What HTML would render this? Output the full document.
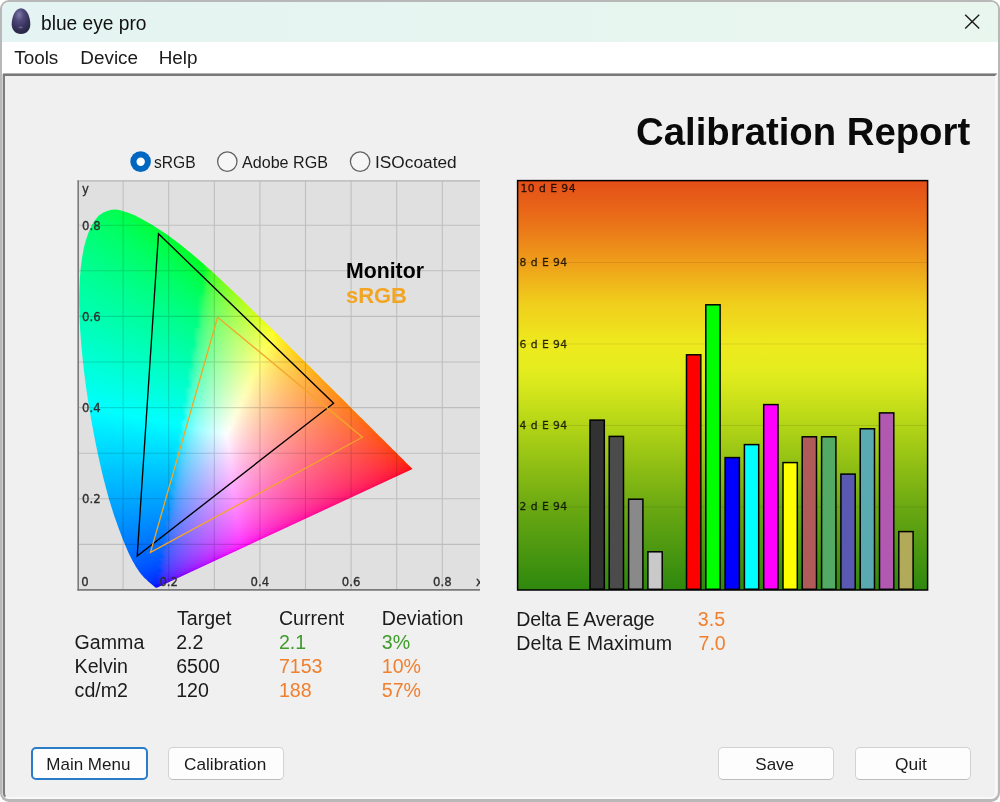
<!DOCTYPE html>
<html><head><meta charset="utf-8"><title>blue eye pro</title>
<style>
html,body{margin:0;padding:0;background:#fff;}
body{width:1000px;height:802px;overflow:hidden;position:relative;filter:blur(0.4px);font-family:"Liberation Sans",sans-serif;color:#000;}
#win{position:absolute;left:0;top:0;width:1000px;height:802px;background:#b8b8b8;border-radius:9px;overflow:hidden;}
#inner{position:absolute;left:2px;top:2px;width:996px;height:797px;background:#f0f0f0;border-radius:7px;overflow:hidden;}
#tbar{position:absolute;left:0;top:0;width:996px;height:40px;background:linear-gradient(90deg,#e4f4f2,#e9f6ee);}
#mbar{position:absolute;left:0;top:40px;width:996px;height:32px;background:#fff;}
#client{position:absolute;left:1px;top:72px;width:990px;height:721px;border-radius:0 0 6px 6px;background:#f0f0f0;border-style:solid;border-width:2px;border-color:#787878 #f9f9f9 #f9f9f9 #7c7c7c;box-shadow:0 -1px 0 #b0b0b0,-1px 0 0 #d0d0d0;}
.t{position:absolute;white-space:pre;line-height:1;transform-origin:0 50%;}
#egg{position:absolute;left:12px;top:8.4px;width:18.4px;height:25.8px;border-radius:50% 50% 50% 50%/58% 58% 42% 42%;background:radial-gradient(ellipse at 38% 28%,#8884b2 0%,#544f82 30%,#3a355f 65%,#2b2846 100%);}
.radio{position:absolute;width:19px;height:19px;border-radius:50%;border:1.3px solid #8a8a8a;background:#fafafa;box-sizing:border-box;}
.radio.on{border:none;background:#0067c0;}
.radio.on::after{content:"";position:absolute;left:5.5px;top:5.5px;width:8px;height:8px;border-radius:50%;background:#fff;}
.btn{position:absolute;height:33px;box-sizing:border-box;border:1px solid #d2d2d2;border-bottom-color:#bcbcbc;border-radius:5px;background:#fdfdfd;}
.btn.def{border:2px solid #2a7cc8;}
#chart1{position:absolute;left:78px;top:181px;width:402px;height:409px;background:#e0e0e0;overflow:hidden;}
#cie{position:absolute;left:0;top:0;width:402px;height:411px;}
#cie i{position:absolute;display:block;height:2px;}
svg{position:absolute;left:0;top:0;}
svg text{font-family:"Liberation Sans",sans-serif;}
svg .dj text{font-family:"DejaVu Sans",sans-serif;}
</style></head><body>
<div id="win"><div id="inner">
<div id="tbar"></div><div id="mbar"></div><div id="client"></div>
</div></div>
<svg width="40" height="40" viewBox="0 0 40 40" style="left:0;top:0"><defs><radialGradient id="eg" cx="0.4" cy="0.25" r="0.75"><stop offset="0" stop-color="#7d79a8"/><stop offset="0.35" stop-color="#4d4878"/><stop offset="0.7" stop-color="#38335c"/><stop offset="1" stop-color="#292642"/></radialGradient></defs><path d="M21 8.3C27 8.3 30.3 17 30.3 24.3C30.3 30 26.6 34.1 21 34.1C15.4 34.1 11.7 30 11.7 24.3C11.7 17 15 8.3 21 8.3Z" fill="url(#eg)"/><ellipse cx="20.6" cy="27.4" rx="2.2" ry="0.9" fill="#8d8cab" fill-opacity="0.55"/></svg>
<div id="chart1"><div id="cie" style="clip-path:polygon(78.9px 406.7px,77.8px 406.8px,76.9px 406.1px,75.9px 405.3px,75.1px 404.6px,74.1px 403.7px,73.0px 402.7px,72.0px 401.9px,70.9px 400.9px,69.7px 399.9px,68.4px 398.6px,67.6px 397.9px,66.8px 397.2px,66.0px 396.4px,65.2px 395.5px,64.3px 394.5px,63.4px 393.4px,62.4px 392.2px,61.3px 390.8px,60.1px 389.1px,58.9px 387.3px,57.5px 385.1px,56.1px 382.6px,54.6px 379.9px,53.0px 376.8px,51.3px 373.4px,49.5px 369.4px,47.6px 365.0px,45.5px 360.1px,43.4px 354.6px,41.1px 348.5px,38.7px 341.7px,36.1px 334.4px,33.5px 326.3px,30.8px 317.5px,28.2px 307.8px,25.5px 297.4px,22.8px 286.3px,20.2px 274.5px,17.6px 261.9px,15.0px 248.5px,12.5px 234.7px,10.2px 220.8px,8.1px 206.6px,6.2px 192.1px,4.6px 177.6px,3.2px 163.5px,2.2px 149.7px,1.5px 136.1px,1.2px 122.9px,1.3px 110.4px,1.8px 98.5px,2.7px 87.1px,4.1px 76.5px,5.8px 66.9px,8.1px 58.4px,10.8px 50.7px,13.9px 44.1px,17.2px 38.7px,20.9px 34.6px,24.9px 31.8px,29.1px 29.9px,33.4px 28.8px,37.8px 28.6px,42.3px 29.3px,47.0px 30.7px,51.6px 32.3px,56.2px 34.1px,60.9px 36.4px,65.5px 38.9px,70.0px 41.5px,74.5px 44.1px,78.9px 46.9px,83.2px 49.7px,87.5px 52.6px,91.7px 55.6px,95.9px 58.7px,100.0px 61.8px,104.2px 65.0px,108.3px 68.4px,112.5px 71.7px,116.6px 75.2px,120.7px 78.7px,124.8px 82.3px,128.9px 85.9px,133.0px 89.6px,137.0px 93.3px,141.1px 97.1px,145.2px 100.9px,149.2px 104.7px,153.3px 108.5px,157.4px 112.4px,161.5px 116.3px,165.6px 120.3px,169.6px 124.2px,173.7px 128.2px,177.8px 132.2px,181.8px 136.2px,185.9px 140.1px,189.9px 144.1px,194.0px 148.1px,198.0px 152.1px,202.0px 156.1px,206.0px 160.0px,210.0px 164.0px,213.9px 167.9px,217.8px 171.8px,221.7px 175.7px,225.6px 179.5px,229.4px 183.3px,233.2px 187.1px,236.9px 190.8px,240.7px 194.5px,244.3px 198.2px,247.9px 201.8px,251.5px 205.3px,255.0px 208.8px,258.4px 212.2px,261.8px 215.6px,265.1px 218.8px,268.3px 222.1px,271.4px 225.2px,274.4px 228.2px,277.3px 231.1px,280.1px 233.9px,282.8px 236.5px,285.4px 239.1px,288.0px 241.7px,290.4px 244.1px,292.8px 246.5px,295.1px 248.8px,297.2px 250.9px,299.3px 252.9px,301.2px 254.9px,303.1px 256.7px,304.9px 258.5px,306.5px 260.1px,308.1px 261.7px,309.6px 263.2px,311.0px 264.6px,312.4px 266.0px,313.6px 267.2px,314.8px 268.4px,316.0px 269.5px,317.0px 270.6px,318.0px 271.6px,319.0px 272.5px,319.9px 273.4px,320.7px 274.3px,321.5px 275.1px,322.3px 275.8px,323.0px 276.6px,323.8px 277.3px,325.1px 278.6px,326.3px 279.8px,327.4px 280.9px,328.3px 281.9px,329.2px 282.7px,330.0px 283.5px,331.5px 285.0px,332.6px 286.1px,333.7px 287.2px,334.5px 288.0px)"><i style="left:28px;top:27px;width:17px;background:linear-gradient(90deg,#00ff56 0px,#00ff51 5px,#00ff4d 10px,#00ff48 15px,#00ff46 17px)"></i><i style="left:23px;top:29px;width:29px;background:linear-gradient(90deg,#00ff5b 0px,#00ff57 5px,#00ff53 10px,#00ff4f 15px,#00ff4a 20px,#00ff45 25px,#00ff40 29px)"></i><i style="left:20px;top:31px;width:37px;background:linear-gradient(90deg,#00ff5f 0px,#00ff5c 5px,#00ff58 10px,#00ff54 15px,#00ff4f 20px,#00ff4a 25px,#00ff45 30px,#00ff3f 35px,#00ff3d 37px)"></i><i style="left:18px;top:33px;width:44px;background:linear-gradient(90deg,#00ff62 0px,#00ff5f 5px,#00ff5b 10px,#00ff57 15px,#00ff53 20px,#00ff4f 25px,#00ff4a 30px,#00ff44 35px,#00ff3e 40px,#00ff39 44px)"></i><i style="left:16px;top:35px;width:49px;background:linear-gradient(90deg,#00ff65 0px,#00ff62 5px,#00ff5e 10px,#00ff5b 15px,#00ff57 20px,#00ff53 25px,#00ff4e 30px,#00ff49 35px,#00ff43 40px,#00ff3d 45px,#00ff37 49px)"></i><i style="left:14px;top:37px;width:55px;background:linear-gradient(90deg,#00ff68 0px,#00ff65 5px,#00ff62 10px,#00ff5e 15px,#00ff5a 20px,#00ff56 25px,#00ff52 30px,#00ff4d 35px,#00ff48 40px,#00ff42 45px,#00ff3c 50px,#00ff35 55px)"></i><i style="left:13px;top:39px;width:60px;background:linear-gradient(90deg,#00ff6a 0px,#00ff67 5px,#00ff64 10px,#00ff61 15px,#00ff5d 20px,#00ff59 25px,#00ff55 30px,#00ff50 35px,#00ff4c 40px,#00ff46 45px,#00ff40 50px,#00ff39 55px,#00ff31 60px)"></i><i style="left:12px;top:41px;width:64px;background:linear-gradient(90deg,#00ff6d 0px,#00ff6a 5px,#00ff66 10px,#00ff63 15px,#00ff5f 20px,#00ff5c 25px,#00ff58 30px,#00ff53 35px,#00ff4f 40px,#00ff4a 45px,#00ff44 50px,#00ff3e 55px,#00ff37 60px,#00ff30 64px)"></i><i style="left:11px;top:43px;width:68px;background:linear-gradient(90deg,#00ff6f 0px,#00ff6c 5px,#00ff69 10px,#00ff65 15px,#00ff62 20px,#00ff5e 25px,#00ff5a 30px,#00ff56 35px,#00ff52 40px,#00ff4d 45px,#00ff48 50px,#00ff42 55px,#00ff3b 60px,#00ff33 65px,#00ff2e 68px)"></i><i style="left:10px;top:45px;width:72px;background:linear-gradient(90deg,#00ff71 0px,#00ff6e 5px,#00ff6b 10px,#00ff68 15px,#00ff64 20px,#00ff61 25px,#00ff5d 30px,#00ff59 35px,#00ff55 40px,#00ff50 45px,#00ff4b 50px,#00ff46 55px,#00ff40 60px,#00ff39 65px,#00ff30 70px,#00ff2c 72px)"></i><i style="left:9px;top:47px;width:76px;background:linear-gradient(90deg,#00ff73 0px,#00ff70 5px,#00ff6d 10px,#00ff6a 15px,#00ff67 20px,#00ff63 25px,#00ff60 30px,#00ff5c 35px,#00ff58 40px,#00ff53 45px,#00ff4f 50px,#00ff49 55px,#00ff44 60px,#00ff3d 65px,#00ff36 70px,#00ff2c 75px,#00ff2a 76px)"></i><i style="left:8px;top:49px;width:80px;background:linear-gradient(90deg,#00ff75 0px,#00ff72 5px,#00ff6f 10px,#00ff6c 15px,#00ff69 20px,#00ff66 25px,#00ff62 30px,#00ff5f 35px,#00ff5b 40px,#00ff56 45px,#00ff52 50px,#00ff4d 55px,#00ff47 60px,#00ff41 65px,#00ff3b 70px,#00ff32 75px,#00ff28 80px)"></i><i style="left:7px;top:51px;width:84px;background:linear-gradient(90deg,#00ff77 0px,#00ff74 5px,#00ff72 10px,#00ff6f 15px,#00ff6b 20px,#00ff68 25px,#00ff65 30px,#00ff61 35px,#00ff5d 40px,#00ff59 45px,#00ff55 50px,#00ff50 55px,#00ff4b 60px,#00ff45 65px,#00ff3f 70px,#00ff38 75px,#00ff2f 80px,#00ff26 84px)"></i><i style="left:7px;top:53px;width:87px;background:linear-gradient(90deg,#00ff79 0px,#00ff76 5px,#00ff73 10px,#00ff70 15px,#00ff6d 20px,#00ff6a 25px,#00ff67 30px,#00ff63 35px,#00ff5f 40px,#00ff5b 45px,#00ff57 50px,#00ff52 55px,#00ff4e 60px,#00ff48 65px,#00ff42 70px,#00ff3b 75px,#00ff33 80px,#00ff28 85px,#00ff23 87px)"></i><i style="left:6px;top:55px;width:91px;background:linear-gradient(90deg,#00ff7b 0px,#00ff78 5px,#00ff75 10px,#00ff72 15px,#00ff6f 20px,#00ff6c 25px,#00ff69 30px,#00ff66 35px,#00ff62 40px,#00ff5e 45px,#00ff5a 50px,#00ff56 55px,#00ff51 60px,#00ff4c 65px,#00ff46 70px,#00ff40 75px,#00ff38 80px,#00ff2f 85px,#00ff23 90px,#00ff20 91px)"></i><i style="left:5px;top:57px;width:95px;background:linear-gradient(90deg,#00ff7d 0px,#00ff7a 5px,#00ff77 10px,#00ff74 15px,#00ff72 20px,#00ff6f 25px,#00ff6b 30px,#00ff68 35px,#00ff65 40px,#00ff61 45px,#00ff5d 50px,#00ff59 55px,#00ff54 60px,#00ff4f 65px,#00ff4a 70px,#00ff44 75px,#00ff3d 80px,#00ff35 85px,#00ff2b 90px,#00ff1d 95px)"></i><i style="left:5px;top:59px;width:97px;background:linear-gradient(90deg,#00ff7e 0px,#00ff7b 5px,#00ff79 10px,#00ff76 15px,#00ff73 20px,#00ff70 25px,#00ff6d 30px,#00ff6a 35px,#00ff66 40px,#00ff63 45px,#00ff5f 50px,#00ff5b 55px,#00ff56 60px,#00ff51 65px,#00ff4c 70px,#00ff47 75px,#00ff40 80px,#00ff39 85px,#00ff30 90px,#00ff24 95px,#00ff1d 97px)"></i><i style="left:4px;top:61px;width:101px;background:linear-gradient(90deg,#00ff80 0px,#00ff7d 5px,#00ff7b 10px,#00ff78 15px,#00ff75 20px,#00ff72 25px,#00ff6f 30px,#00ff6c 35px,#00ff69 40px,#00ff65 45px,#00ff62 50px,#00ff5e 55px,#00ff59 60px,#00ff55 65px,#00ff50 70px,#00ff4a 75px,#00ff44 80px,#00ff3d 85px,#00ff35 90px,#00ff2b 95px,#00ff1d 100px,#00ff19 101px)"></i><i style="left:4px;top:63px;width:103px;background:linear-gradient(90deg,#00ff81 0px,#00ff7f 5px,#00ff7c 10px,#00ff7a 15px,#00ff77 20px,#00ff74 25px,#00ff71 30px,#00ff6e 35px,#00ff6b 40px,#00ff67 45px,#00ff63 50px,#00ff60 55px,#00ff5b 60px,#00ff57 65px,#00ff52 70px,#00ff4d 75px,#00ff47 80px,#00ff41 85px,#00ff39 90px,#00ff30 95px,#00ff24 100px,#00ff19 103px)"></i><i style="left:3px;top:65px;width:107px;background:linear-gradient(90deg,#00ff83 0px,#00ff81 5px,#00ff7e 10px,#00ff7c 15px,#00ff79 20px,#00ff76 25px,#00ff73 30px,#00ff70 35px,#00ff6d 40px,#00ff6a 45px,#00ff66 50px,#00ff62 55px,#00ff5e 60px,#00ff5a 65px,#00ff55 70px,#00ff50 75px,#00ff4b 80px,#00ff45 85px,#00ff3e 90px,#00ff36 95px,#00ff2c 100px,#00ff1d 105px,#00ff14 107px)"></i><i style="left:3px;top:67px;width:109px;background:linear-gradient(90deg,#00ff85 0px,#00ff82 5px,#00ff80 10px,#00ff7d 15px,#00ff7b 20px,#00ff78 25px,#00ff75 30px,#00ff72 35px,#00ff6f 40px,#00ff6b 45px,#00ff68 50px,#00ff64 55px,#00ff60 60px,#00ff5c 65px,#00ff58 70px,#00ff53 75px,#00ff4e 80px,#00ff48 85px,#00ff41 90px,#00ff3a 95px,#00ff30 100px,#00ff24 105px,#00ff14 109px)"></i><i style="left:2px;top:69px;width:113px;background:linear-gradient(90deg,#00ff87 0px,#00ff84 5px,#00ff82 10px,#00ff7f 15px,#00ff7d 20px,#00ff7a 25px,#00ff77 30px,#00ff74 35px,#00ff71 40px,#00ff6e 45px,#00ff6a 50px,#00ff67 55px,#00ff63 60px,#00ff5f 65px,#00ff5b 70px,#00ff56 75px,#00ff51 80px,#00ff4c 85px,#00ff45 90px,#00ff3e 95px,#00ff36 100px,#00ff2c 105px,#00ff1e 110px,#00ff0d 113px)"></i><i style="left:2px;top:71px;width:115px;background:linear-gradient(90deg,#00ff88 0px,#00ff86 5px,#00ff83 10px,#00ff81 15px,#00ff7e 20px,#00ff7b 25px,#00ff79 30px,#00ff76 35px,#00ff73 40px,#00ff70 45px,#00ff6c 50px,#00ff69 55px,#00ff65 60px,#00ff61 65px,#00ff5d 70px,#00ff58 75px,#00ff53 80px,#00ff4e 85px,#00ff48 90px,#00ff42 95px,#00ff3a 100px,#00ff31 105px,#00ff25 110px,#00ff0d 115px)"></i><i style="left:2px;top:73px;width:117px;background:linear-gradient(90deg,#00ff89 0px,#00ff87 5px,#00ff85 10px,#00ff82 15px,#00ff80 20px,#00ff7d 25px,#00ff7a 30px,#00ff77 35px,#00ff74 40px,#00ff71 45px,#00ff6e 50px,#00ff6b 55px,#00ff67 60px,#00ff63 65px,#00ff5f 70px,#00ff5b 75px,#00ff56 80px,#00ff51 85px,#00ff4b 90px,#00ff45 95px,#00ff3e 100px,#00ff35 105px,#00ff2a 110px,#00ff1a 115px,#00ff0d 117px)"></i><i style="left:1px;top:75px;width:121px;background:linear-gradient(90deg,#00ff8b 0px,#00ff89 5px,#00ff87 10px,#00ff84 15px,#00ff82 20px,#00ff7f 25px,#00ff7c 30px,#00ff7a 35px,#00ff77 40px,#00ff74 45px,#00ff70 50px,#00ff6d 55px,#00ff6a 60px,#00ff66 65px,#00ff62 70px,#00ff5e 75px,#00ff59 80px,#00ff54 85px,#00ff4f 90px,#00ff49 95px,#00ff42 100px,#00ff3b 105px,#00ff31 110px,#00ff25 115px,#00ff0d 120px,#00ff00 121px)"></i><i style="left:1px;top:77px;width:123px;background:linear-gradient(90deg,#00ff8d 0px,#00ff8a 5px,#00ff88 10px,#00ff86 15px,#00ff83 20px,#00ff81 25px,#00ff7e 30px,#00ff7b 35px,#00ff78 40px,#00ff75 45px,#00ff72 50px,#00ff6f 55px,#00ff6b 60px,#00ff68 65px,#00ff64 70px,#00ff60 75px,#00ff5b 80px,#00ff57 85px,#00ff51 90px,#00ff4c 95px,#00ff45 100px,#00ff3e 105px,#00ff35 110px,#00ff2b 115px,#00ff1a 120px,#00ff00 123px)"></i><i style="left:1px;top:79px;width:125px;background:linear-gradient(90deg,#00ff8e 0px,#00ff8c 5px,#00ff8a 10px,#00ff87 15px,#00ff85 20px,#00ff82 25px,#00ff80 30px,#00ff7d 35px,#00ff7a 40px,#00ff77 45px,#00ff74 50px,#00ff71 55px,#00ff6d 60px,#00ff6a 65px,#00ff66 70px,#00ff62 75px,#00ff5d 80px,#00ff59 85px,#00ff54 90px,#00ff4e 95px,#00ff48 100px,#00ff41 105px,#00ff39 110px,#00ff30 115px,#00ff22 120px,#00ff00 125px)"></i><i style="left:1px;top:81px;width:128px;background:linear-gradient(90deg,#00ff8f 0px,#00ff8d 5px,#00ff8b 10px,#00ff89 15px,#00ff86 20px,#00ff84 25px,#00ff81 30px,#00ff7e 35px,#00ff7c 40px,#00ff79 45px,#00ff76 50px,#00ff72 55px,#00ff6f 60px,#00ff6c 65px,#00ff68 70px,#00ff64 75px,#00ff60 80px,#00ff5b 85px,#00ff56 90px,#00ff51 95px,#00ff4b 100px,#00ff45 105px,#00ff3d 110px,#00ff34 115px,#00ff28 120px,#00ff15 125px,#11ff00 128px)"></i><i style="left:0px;top:83px;width:131px;background:linear-gradient(90deg,#00ff91 0px,#00ff8f 5px,#00ff8d 10px,#00ff8b 15px,#00ff88 20px,#00ff86 25px,#00ff83 30px,#00ff81 35px,#00ff7e 40px,#00ff7b 45px,#00ff78 50px,#00ff75 55px,#00ff72 60px,#00ff6e 65px,#00ff6b 70px,#00ff67 75px,#00ff63 80px,#00ff5e 85px,#00ff5a 90px,#00ff55 95px,#00ff4f 100px,#00ff49 105px,#00ff42 110px,#00ff3a 115px,#00ff30 120px,#00ff22 125px,#25ff00 130px,#2eff00 131px)"></i><i style="left:0px;top:85px;width:133px;background:linear-gradient(90deg,#00ff93 0px,#00ff91 5px,#00ff8e 10px,#00ff8c 15px,#00ff8a 20px,#00ff87 25px,#00ff85 30px,#00ff82 35px,#00ff7f 40px,#00ff7d 45px,#00ff7a 50px,#00ff77 55px,#00ff73 60px,#00ff70 65px,#00ff6c 70px,#00ff69 75px,#00ff65 80px,#00ff60 85px,#00ff5c 90px,#00ff57 95px,#00ff52 100px,#00ff4c 105px,#00ff45 110px,#00ff3e 115px,#00ff34 120px,#00ff29 125px,#28ff15 130px,#3dff00 133px)"></i><i style="left:0px;top:87px;width:135px;background:linear-gradient(90deg,#00ff94 0px,#00ff92 5px,#00ff90 10px,#00ff8e 15px,#00ff8b 20px,#00ff89 25px,#00ff86 30px,#00ff84 35px,#00ff81 40px,#00ff7e 45px,#00ff7b 50px,#00ff78 55px,#00ff75 60px,#00ff72 65px,#00ff6e 70px,#00ff6b 75px,#00ff67 80px,#00ff63 85px,#00ff5e 90px,#00ff59 95px,#00ff54 100px,#00ff4f 105px,#00ff48 110px,#00ff41 115px,#00ff39 120px,#00ff2e 125px,#2bff1f 130px,#49ff00 135px)"></i><i style="left:0px;top:89px;width:138px;background:linear-gradient(90deg,#00ff95 0px,#00ff93 5px,#00ff91 10px,#00ff8f 15px,#00ff8d 20px,#00ff8a 25px,#00ff88 30px,#00ff85 35px,#00ff83 40px,#00ff80 45px,#00ff7d 50px,#00ff7a 55px,#00ff77 60px,#00ff74 65px,#00ff70 70px,#00ff6d 75px,#00ff69 80px,#00ff65 85px,#00ff60 90px,#00ff5c 95px,#00ff57 100px,#00ff51 105px,#00ff4b 110px,#00ff44 115px,#00ff3c 120px,#00ff33 125px,#2dff26 130px,#4bff0e 135px,#57ff00 138px)"></i><i style="left:0px;top:91px;width:140px;background:linear-gradient(90deg,#00ff97 0px,#00ff95 5px,#00ff93 10px,#00ff90 15px,#00ff8e 20px,#00ff8c 25px,#00ff89 30px,#00ff87 35px,#00ff84 40px,#00ff82 45px,#00ff7f 50px,#00ff7c 55px,#00ff79 60px,#00ff75 65px,#00ff72 70px,#00ff6f 75px,#00ff6b 80px,#00ff67 85px,#00ff63 90px,#00ff5e 95px,#00ff59 100px,#00ff54 105px,#00ff4e 110px,#00ff48 115px,#00ff40 120px,#00ff37 125px,#30ff2c 130px,#4cff1b 135px,#60ff00 140px)"></i><i style="left:0px;top:93px;width:142px;background:linear-gradient(90deg,#00ff98 0px,#00ff96 5px,#00ff94 10px,#00ff92 15px,#00ff90 20px,#00ff8d 25px,#00ff8b 30px,#00ff88 35px,#00ff86 40px,#00ff83 45px,#00ff80 50px,#00ff7d 55px,#00ff7a 60px,#00ff77 65px,#00ff74 70px,#00ff70 75px,#00ff6d 80px,#00ff69 85px,#00ff65 90px,#00ff60 95px,#00ff5c 100px,#00ff56 105px,#00ff51 110px,#00ff4b 115px,#00ff44 120px,#00ff3b 125px,#32ff31 130px,#4eff23 135px,#61ff00 140px,#68ff00 142px)"></i><i style="left:-1px;top:95px;width:145px;background:linear-gradient(90deg,#00ff9a 0px,#00ff98 5px,#00ff96 10px,#00ff94 15px,#00ff92 20px,#00ff8f 25px,#00ff8d 30px,#00ff8a 35px,#00ff88 40px,#00ff85 45px,#00ff83 50px,#00ff80 55px,#00ff7d 60px,#00ff7a 65px,#00ff76 70px,#00ff73 75px,#00ff70 80px,#00ff6c 85px,#00ff68 90px,#00ff63 95px,#00ff5f 100px,#00ff5a 105px,#00ff55 110px,#00ff4f 115px,#00ff48 120px,#00ff41 125px,#2dff38 130px,#4bff2d 135px,#5fff1c 140px,#70ff00 145px)"></i><i style="left:-1px;top:97px;width:147px;background:linear-gradient(90deg,#00ff9b 0px,#00ff99 5px,#00ff97 10px,#00ff95 15px,#00ff93 20px,#00ff91 25px,#00ff8e 30px,#00ff8c 35px,#00ff8a 40px,#00ff87 45px,#00ff84 50px,#00ff81 55px,#00ff7f 60px,#00ff7b 65px,#00ff78 70px,#00ff75 75px,#00ff71 80px,#00ff6e 85px,#00ff6a 90px,#00ff66 95px,#00ff61 100px,#00ff5c 105px,#00ff57 110px,#00ff52 115px,#00ff4b 120px,#00ff44 125px,#30ff3c 130px,#4dff32 135px,#61ff24 140px,#71ff00 145px,#77ff00 147px)"></i><i style="left:-1px;top:99px;width:149px;background:linear-gradient(90deg,#00ff9d 0px,#00ff9b 5px,#00ff99 10px,#00ff97 15px,#00ff95 20px,#00ff92 25px,#00ff90 30px,#00ff8e 35px,#00ff8b 40px,#00ff89 45px,#00ff86 50px,#00ff83 55px,#00ff80 60px,#00ff7d 65px,#00ff7a 70px,#00ff77 75px,#00ff73 80px,#00ff70 85px,#00ff6c 90px,#00ff68 95px,#00ff63 100px,#00ff5f 105px,#00ff5a 110px,#00ff54 115px,#00ff4e 120px,#00ff47 125px,#32ff40 130px,#4eff36 135px,#62ff2a 140px,#72ff17 145px,#7dff00 149px)"></i><i style="left:-1px;top:101px;width:151px;background:linear-gradient(90deg,#00ff9e 0px,#00ff9c 5px,#00ff9a 10px,#00ff98 15px,#00ff96 20px,#00ff94 25px,#00ff92 30px,#00ff8f 35px,#00ff8d 40px,#00ff8a 45px,#00ff88 50px,#00ff85 55px,#00ff82 60px,#00ff7f 65px,#00ff7c 70px,#00ff79 75px,#00ff75 80px,#00ff72 85px,#00ff6e 90px,#00ff6a 95px,#00ff66 100px,#00ff61 105px,#00ff5c 110px,#00ff57 115px,#00ff51 120px,#00ff4b 125px,#35ff43 130px,#50ff3b 135px,#63ff30 140px,#73ff20 145px,#81ff00 150px,#84ff00 151px)"></i><i style="left:-1px;top:103px;width:154px;background:linear-gradient(90deg,#00ffa0 0px,#00ff9e 5px,#00ff9c 10px,#00ff9a 15px,#00ff97 20px,#00ff95 25px,#00ff93 30px,#00ff91 35px,#00ff8e 40px,#00ff8c 45px,#00ff89 50px,#00ff86 55px,#00ff84 60px,#00ff81 65px,#00ff7e 70px,#00ff7b 75px,#00ff77 80px,#00ff74 85px,#00ff70 90px,#00ff6c 95px,#00ff68 100px,#00ff63 105px,#00ff5f 110px,#00ff5a 115px,#00ff54 120px,#00ff4e 125px,#37ff47 130px,#52ff3f 135px,#65ff35 140px,#75ff28 145px,#82ff0f 150px,#8cff00 154px)"></i><i style="left:-1px;top:105px;width:156px;background:linear-gradient(90deg,#00ffa1 0px,#00ff9f 5px,#00ff9d 10px,#00ff9b 15px,#00ff99 20px,#00ff97 25px,#00ff95 30px,#00ff92 35px,#00ff90 40px,#00ff8d 45px,#00ff8b 50px,#00ff88 55px,#00ff85 60px,#00ff83 65px,#00ff80 70px,#00ff7c 75px,#00ff79 80px,#00ff76 85px,#00ff72 90px,#00ff6e 95px,#00ff6a 100px,#00ff66 105px,#00ff61 110px,#00ff5c 115px,#00ff57 120px,#00ff51 125px,#39ff4a 130px,#53ff42 135px,#66ff39 140px,#76ff2e 145px,#84ff1c 150px,#90ff00 155px,#92ff00 156px)"></i><i style="left:-1px;top:107px;width:158px;background:linear-gradient(90deg,#00ffa2 0px,#00ffa0 5px,#00ff9f 10px,#00ff9d 15px,#00ff9a 20px,#00ff98 25px,#00ff96 30px,#00ff94 35px,#00ff91 40px,#00ff8f 45px,#00ff8c 50px,#00ff8a 55px,#00ff87 60px,#00ff84 65px,#00ff81 70px,#00ff7e 75px,#00ff7b 80px,#00ff78 85px,#00ff74 90px,#00ff70 95px,#00ff6c 100px,#00ff68 105px,#00ff64 110px,#00ff5f 115px,#00ff59 120px,#00ff54 125px,#3bff4d 130px,#55ff46 135px,#67ff3d 140px,#77ff33 145px,#85ff25 150px,#91ff00 155px,#98ff00 158px)"></i><i style="left:-1px;top:109px;width:160px;background:linear-gradient(90deg,#00ffa4 0px,#00ffa2 5px,#00ffa0 10px,#00ff9e 15px,#00ff9c 20px,#00ff9a 25px,#00ff98 30px,#00ff95 35px,#00ff93 40px,#00ff91 45px,#00ff8e 50px,#00ff8c 55px,#00ff89 60px,#00ff86 65px,#00ff83 70px,#00ff80 75px,#00ff7d 80px,#00ff7a 85px,#00ff76 90px,#00ff72 95px,#00ff6e 100px,#00ff6a 105px,#00ff66 110px,#00ff61 115px,#00ff5c 120px,#00ff56 125px,#3dff50 130px,#56ff49 135px,#69ff41 140px,#78ff38 145px,#86ff2b 150px,#92ff17 155px,#9eff00 160px)"></i><i style="left:-1px;top:111px;width:162px;background:linear-gradient(90deg,#00ffa5 0px,#00ffa3 5px,#00ffa1 10px,#00ff9f 15px,#00ff9d 20px,#00ff9b 25px,#00ff99 30px,#00ff97 35px,#00ff95 40px,#00ff92 45px,#00ff90 50px,#00ff8d 55px,#00ff8b 60px,#00ff88 65px,#00ff85 70px,#00ff82 75px,#00ff7f 80px,#00ff7b 85px,#00ff78 90px,#00ff74 95px,#00ff71 100px,#00ff6c 105px,#00ff68 110px,#00ff64 115px,#00ff5f 120px,#00ff59 125px,#3fff53 130px,#58ff4d 135px,#6aff45 140px,#7aff3c 145px,#87ff31 150px,#93ff21 155px,#9fff00 160px,#a3ff00 162px)"></i><i style="left:-1px;top:113px;width:164px;background:linear-gradient(90deg,#00ffa7 0px,#00ffa5 5px,#00ffa3 10px,#00ffa1 15px,#00ff9f 20px,#00ff9d 25px,#00ff9b 30px,#00ff98 35px,#00ff96 40px,#00ff94 45px,#00ff91 50px,#00ff8f 55px,#00ff8c 60px,#00ff89 65px,#00ff87 70px,#00ff84 75px,#00ff81 80px,#00ff7d 85px,#00ff7a 90px,#00ff76 95px,#00ff73 100px,#00ff6f 105px,#00ff6a 110px,#00ff66 115px,#00ff61 120px,#0dff5c 125px,#41ff56 130px,#59ff50 135px,#6bff49 140px,#7bff40 145px,#88ff36 150px,#95ff29 155px,#a0ff10 160px,#a9ff00 164px)"></i><i style="left:-1px;top:115px;width:166px;background:linear-gradient(90deg,#00ffa8 0px,#00ffa6 5px,#00ffa4 10px,#00ffa2 15px,#00ffa0 20px,#00ff9e 25px,#00ff9c 30px,#00ff9a 35px,#00ff98 40px,#00ff95 45px,#00ff93 50px,#00ff90 55px,#00ff8e 60px,#00ff8b 65px,#00ff88 70px,#00ff85 75px,#00ff82 80px,#00ff7f 85px,#00ff7c 90px,#00ff78 95px,#00ff75 100px,#00ff71 105px,#00ff6d 110px,#00ff68 115px,#00ff64 120px,#16ff5e 125px,#43ff59 130px,#5bff53 135px,#6dff4c 140px,#7cff44 145px,#8aff3b 150px,#96ff2f 155px,#a1ff1d 160px,#acff00 165px,#aeff00 166px)"></i><i style="left:-1px;top:117px;width:168px;background:linear-gradient(90deg,#00ffa9 0px,#00ffa8 5px,#00ffa6 10px,#00ffa4 15px,#00ffa2 20px,#00ffa0 25px,#00ff9e 30px,#00ff9c 35px,#00ff99 40px,#00ff97 45px,#00ff95 50px,#00ff92 55px,#00ff90 60px,#00ff8d 65px,#00ff8a 70px,#00ff87 75px,#00ff84 80px,#00ff81 85px,#00ff7e 90px,#00ff7a 95px,#00ff77 100px,#00ff73 105px,#00ff6f 110px,#00ff6b 115px,#00ff66 120px,#1bff61 125px,#45ff5c 130px,#5cff56 135px,#6eff4f 140px,#7dff48 145px,#8bff3f 150px,#97ff34 155px,#a2ff26 160px,#adff00 165px,#b3ff00 168px)"></i><i style="left:-1px;top:119px;width:170px;background:linear-gradient(90deg,#00ffab 0px,#00ffa9 5px,#00ffa7 10px,#00ffa5 15px,#00ffa3 20px,#00ffa1 25px,#00ff9f 30px,#00ff9d 35px,#00ff9b 40px,#00ff99 45px,#00ff96 50px,#00ff94 55px,#00ff91 60px,#00ff8f 65px,#00ff8c 70px,#00ff89 75px,#00ff86 80px,#00ff83 85px,#00ff80 90px,#00ff7c 95px,#00ff79 100px,#00ff75 105px,#00ff71 110px,#00ff6d 115px,#00ff68 120px,#20ff64 125px,#47ff5e 130px,#5eff59 135px,#6fff52 140px,#7fff4b 145px,#8cff43 150px,#98ff39 155px,#a4ff2d 160px,#aeff18 165px,#b9ff00 170px)"></i><i style="left:-1px;top:121px;width:172px;background:linear-gradient(90deg,#00ffac 0px,#00ffaa 5px,#00ffa9 10px,#00ffa7 15px,#00ffa5 20px,#00ffa3 25px,#00ffa1 30px,#00ff9f 35px,#00ff9c 40px,#00ff9a 45px,#00ff98 50px,#00ff95 55px,#00ff93 60px,#00ff90 65px,#00ff8e 70px,#00ff8b 75px,#00ff88 80px,#00ff85 85px,#00ff82 90px,#00ff7e 95px,#00ff7b 100px,#00ff77 105px,#00ff73 110px,#00ff6f 115px,#00ff6b 120px,#24ff66 125px,#49ff61 130px,#5fff5b 135px,#71ff55 140px,#80ff4f 145px,#8dff47 150px,#9aff3e 155px,#a5ff33 160px,#b0ff23 165px,#baff00 170px,#beff00 172px)"></i><i style="left:-1px;top:123px;width:174px;background:linear-gradient(90deg,#00ffae 0px,#00ffac 5px,#00ffaa 10px,#00ffa8 15px,#00ffa6 20px,#00ffa4 25px,#00ffa2 30px,#00ffa0 35px,#00ff9e 40px,#00ff9c 45px,#00ff9a 50px,#00ff97 55px,#00ff95 60px,#00ff92 65px,#00ff8f 70px,#00ff8d 75px,#00ff8a 80px,#00ff87 85px,#00ff84 90px,#00ff80 95px,#00ff7d 100px,#00ff79 105px,#00ff75 110px,#00ff71 115px,#00ff6d 120px,#28ff68 125px,#4bff64 130px,#61ff5e 135px,#72ff58 140px,#81ff52 145px,#8fff4a 150px,#9bff42 155px,#a6ff38 160px,#b1ff2a 165px,#bbff11 170px,#c3ff00 174px)"></i><i style="left:-1px;top:125px;width:176px;background:linear-gradient(90deg,#00ffaf 0px,#00ffad 5px,#00ffac 10px,#00ffaa 15px,#00ffa8 20px,#00ffa6 25px,#00ffa4 30px,#00ffa2 35px,#00ffa0 40px,#00ff9d 45px,#00ff9b 50px,#00ff99 55px,#00ff96 60px,#00ff94 65px,#00ff91 70px,#00ff8e 75px,#00ff8c 80px,#00ff89 85px,#00ff86 90px,#00ff82 95px,#00ff7f 100px,#00ff7b 105px,#00ff78 110px,#00ff74 115px,#00ff6f 120px,#2bff6b 125px,#4cff66 130px,#62ff61 135px,#74ff5b 140px,#82ff55 145px,#90ff4e 150px,#9cff46 155px,#a7ff3c 160px,#b2ff30 165px,#bcff1e 170px,#c6ff00 175px,#c8ff00 176px)"></i><i style="left:-1px;top:127px;width:179px;background:linear-gradient(90deg,#00ffb1 0px,#00ffaf 5px,#00ffad 10px,#00ffab 15px,#00ffa9 20px,#00ffa7 25px,#00ffa5 30px,#00ffa3 35px,#00ffa1 40px,#00ff9f 45px,#00ff9d 50px,#00ff9a 55px,#00ff98 60px,#00ff96 65px,#00ff93 70px,#00ff90 75px,#00ff8d 80px,#00ff8b 85px,#00ff87 90px,#00ff84 95px,#00ff81 100px,#00ff7d 105px,#00ff7a 110px,#00ff76 115px,#00ff72 120px,#2eff6d 125px,#4eff69 130px,#64ff64 135px,#75ff5e 140px,#84ff58 145px,#91ff51 150px,#9dff4a 155px,#a9ff41 160px,#b3ff36 165px,#beff27 170px,#c7ff00 175px,#cfff00 179px)"></i><i style="left:-1px;top:129px;width:181px;background:linear-gradient(90deg,#00ffb2 0px,#00ffb0 5px,#00ffae 10px,#00ffad 15px,#00ffab 20px,#00ffa9 25px,#00ffa7 30px,#00ffa5 35px,#00ffa3 40px,#00ffa1 45px,#00ff9e 50px,#00ff9c 55px,#00ff9a 60px,#00ff97 65px,#00ff95 70px,#00ff92 75px,#00ff8f 80px,#00ff8c 85px,#00ff89 90px,#00ff86 95px,#00ff83 100px,#00ff80 105px,#00ff7c 110px,#00ff78 115px,#00ff74 120px,#31ff70 125px,#50ff6b 130px,#65ff66 135px,#76ff61 140px,#85ff5b 145px,#92ff55 150px,#9fff4d 155px,#aaff45 160px,#b5ff3b 165px,#bfff2e 170px,#c9ff19 175px,#d2ff00 180px,#d4ff00 181px)"></i><i style="left:-1px;top:131px;width:183px;background:linear-gradient(90deg,#00ffb3 0px,#00ffb2 5px,#00ffb0 10px,#00ffae 15px,#00ffac 20px,#00ffaa 25px,#00ffa8 30px,#00ffa6 35px,#00ffa4 40px,#00ffa2 45px,#00ffa0 50px,#00ff9e 55px,#00ff9b 60px,#00ff99 65px,#00ff96 70px,#00ff94 75px,#00ff91 80px,#00ff8e 85px,#00ff8b 90px,#00ff88 95px,#00ff85 100px,#00ff82 105px,#00ff7e 110px,#00ff7a 115px,#00ff76 120px,#33ff72 125px,#52ff6e 130px,#67ff69 135px,#78ff64 140px,#86ff5e 145px,#94ff58 150px,#a0ff51 155px,#abff49 160px,#b6ff40 165px,#c0ff34 170px,#caff24 175px,#d3ff00 180px,#d9ff00 183px)"></i><i style="left:-1px;top:133px;width:185px;background:linear-gradient(90deg,#00ffb5 0px,#00ffb3 5px,#00ffb1 10px,#00ffb0 15px,#00ffae 20px,#00ffac 25px,#00ffaa 30px,#00ffa8 35px,#00ffa6 40px,#00ffa4 45px,#00ffa2 50px,#00ff9f 55px,#00ff9d 60px,#00ff9b 65px,#00ff98 70px,#00ff96 75px,#00ff93 80px,#00ff90 85px,#00ff8d 90px,#00ff8a 95px,#00ff87 100px,#00ff84 105px,#00ff80 110px,#00ff7c 115px,#00ff79 120px,#36ff74 125px,#53ff70 130px,#68ff6b 135px,#79ff66 140px,#88ff61 145px,#95ff5b 150px,#a1ff54 155px,#acff4d 160px,#b7ff44 165px,#c1ff39 170px,#cbff2c 175px,#d5ff12 180px,#deff00 185px)"></i><i style="left:-1px;top:135px;width:187px;background:linear-gradient(90deg,#00ffb6 0px,#00ffb5 5px,#00ffb3 10px,#00ffb1 15px,#00ffaf 20px,#00ffae 25px,#00ffac 30px,#00ffaa 35px,#00ffa8 40px,#00ffa6 45px,#00ffa3 50px,#00ffa1 55px,#00ff9f 60px,#00ff9c 65px,#00ff9a 70px,#00ff97 75px,#00ff95 80px,#00ff92 85px,#00ff8f 90px,#00ff8c 95px,#00ff89 100px,#00ff86 105px,#00ff82 110px,#00ff7f 115px,#00ff7b 120px,#39ff77 125px,#55ff72 130px,#6aff6e 135px,#7aff69 140px,#89ff64 145px,#96ff5e 150px,#a2ff57 155px,#aeff50 160px,#b9ff48 165px,#c3ff3e 170px,#cdff32 175px,#d6ff20 180px,#dfff00 185px,#e3ff00 187px)"></i><i style="left:-1px;top:137px;width:189px;background:linear-gradient(90deg,#00ffb8 0px,#00ffb6 5px,#00ffb4 10px,#00ffb3 15px,#00ffb1 20px,#00ffaf 25px,#00ffad 30px,#00ffab 35px,#00ffa9 40px,#00ffa7 45px,#00ffa5 50px,#00ffa3 55px,#00ffa1 60px,#00ff9e 65px,#00ff9c 70px,#00ff99 75px,#00ff97 80px,#00ff94 85px,#00ff91 90px,#00ff8e 95px,#00ff8b 100px,#00ff88 105px,#00ff84 110px,#00ff81 115px,#00ff7d 120px,#3bff79 125px,#57ff75 130px,#6bff70 135px,#7cff6c 140px,#8aff66 145px,#98ff61 150px,#a4ff5b 155px,#afff54 160px,#baff4c 165px,#c4ff43 170px,#ceff38 175px,#d7ff29 180px,#e1ff00 185px,#e8ff00 189px)"></i><i style="left:-1px;top:139px;width:191px;background:linear-gradient(90deg,#00ffb9 0px,#00ffb8 5px,#00ffb6 10px,#00ffb4 15px,#00ffb2 20px,#00ffb1 25px,#00ffaf 30px,#00ffad 35px,#00ffab 40px,#00ffa9 45px,#00ffa7 50px,#00ffa4 55px,#00ffa2 60px,#00ffa0 65px,#00ff9d 70px,#00ff9b 75px,#00ff98 80px,#00ff96 85px,#00ff93 90px,#00ff90 95px,#00ff8d 100px,#00ff8a 105px,#00ff86 110px,#00ff83 115px,#00ff7f 120px,#3dff7b 125px,#58ff77 130px,#6cff73 135px,#7dff6e 140px,#8cff69 145px,#99ff64 150px,#a5ff5e 155px,#b0ff57 160px,#bbff50 165px,#c5ff47 170px,#cfff3d 175px,#d9ff30 180px,#e2ff1a 185px,#ebff00 190px,#edff00 191px)"></i><i style="left:-1px;top:141px;width:193px;background:linear-gradient(90deg,#00ffbb 0px,#00ffb9 5px,#00ffb7 10px,#00ffb6 15px,#00ffb4 20px,#00ffb2 25px,#00ffb0 30px,#00ffae 35px,#00ffac 40px,#00ffaa 45px,#00ffa8 50px,#00ffa6 55px,#00ffa4 60px,#00ffa2 65px,#00ff9f 70px,#00ff9d 75px,#00ff9a 80px,#00ff98 85px,#00ff95 90px,#00ff92 95px,#00ff8f 100px,#00ff8c 105px,#00ff88 110px,#00ff85 115px,#00ff81 120px,#40ff7e 125px,#5aff7a 130px,#6eff75 135px,#7eff71 140px,#8dff6c 145px,#9aff66 150px,#a6ff61 155px,#b2ff5a 160px,#bdff53 165px,#c7ff4b 170px,#d1ff42 175px,#daff36 180px,#e4ff25 185px,#edff00 190px,#f2ff00 193px)"></i><i style="left:-1px;top:143px;width:195px;background:linear-gradient(90deg,#00ffbc 0px,#00ffbb 5px,#00ffb9 10px,#00ffb7 15px,#00ffb5 20px,#00ffb4 25px,#00ffb2 30px,#00ffb0 35px,#00ffae 40px,#00ffac 45px,#00ffaa 50px,#00ffa8 55px,#00ffa6 60px,#00ffa3 65px,#00ffa1 70px,#00ff9f 75px,#00ff9c 80px,#00ff99 85px,#00ff97 90px,#00ff94 95px,#00ff91 100px,#00ff8e 105px,#00ff8b 110px,#00ff87 115px,#00ff84 120px,#42ff80 125px,#5cff7c 130px,#6fff78 135px,#80ff73 140px,#8eff6e 145px,#9bff69 150px,#a8ff64 155px,#b3ff5d 160px,#beff57 165px,#c8ff4f 170px,#d2ff46 175px,#dcff3b 180px,#e5ff2d 185px,#eeff13 190px,#f7ff00 195px)"></i><i style="left:-1px;top:145px;width:197px;background:linear-gradient(90deg,#00ffbe 0px,#00ffbc 5px,#00ffba 10px,#00ffb9 15px,#00ffb7 20px,#00ffb5 25px,#00ffb3 30px,#00ffb2 35px,#00ffb0 40px,#00ffae 45px,#00ffac 50px,#00ffaa 55px,#00ffa7 60px,#00ffa5 65px,#00ffa3 70px,#00ffa0 75px,#00ff9e 80px,#00ff9b 85px,#00ff99 90px,#00ff96 95px,#00ff93 100px,#00ff90 105px,#00ff8d 110px,#00ff89 115px,#00ff86 120px,#44ff82 125px,#5dff7e 130px,#71ff7a 135px,#81ff76 140px,#90ff71 145px,#9dff6c 150px,#a9ff67 155px,#b4ff61 160px,#bfff5a 165px,#caff53 170px,#d4ff4a 175px,#ddff40 180px,#e6ff34 185px,#f0ff21 190px,#f8ff00 195px,#fcff00 197px)"></i><i style="left:0px;top:147px;width:198px;background:linear-gradient(90deg,#00ffbf 0px,#00ffbd 5px,#00ffbc 10px,#00ffba 15px,#00ffb8 20px,#00ffb6 25px,#00ffb5 30px,#00ffb3 35px,#00ffb1 40px,#00ffaf 45px,#00ffad 50px,#00ffab 55px,#00ffa9 60px,#00ffa6 65px,#00ffa4 70px,#00ffa2 75px,#00ff9f 80px,#00ff9d 85px,#00ff9a 90px,#00ff97 95px,#00ff94 100px,#00ff91 105px,#00ff8e 110px,#00ff8b 115px,#25ff87 120px,#4cff84 125px,#63ff80 130px,#76ff7c 135px,#86ff77 140px,#94ff73 145px,#a1ff6e 150px,#adff68 155px,#b8ff62 160px,#c3ff5c 165px,#cdff55 170px,#d7ff4d 175px,#e0ff43 180px,#eaff37 185px,#f3ff26 190px,#fcff00 195px,#fffd00 198px)"></i><i style="left:0px;top:149px;width:200px;background:linear-gradient(90deg,#00ffc0 0px,#00ffbf 5px,#00ffbd 10px,#00ffbb 15px,#00ffba 20px,#00ffb8 25px,#00ffb6 30px,#00ffb4 35px,#00ffb3 40px,#00ffb1 45px,#00ffaf 50px,#00ffac 55px,#00ffaa 60px,#00ffa8 65px,#00ffa6 70px,#00ffa3 75px,#00ffa1 80px,#00ff9e 85px,#00ff9c 90px,#00ff99 95px,#00ff96 100px,#00ff93 105px,#00ff90 110px,#00ff8d 115px,#29ff89 120px,#4eff86 125px,#65ff82 130px,#77ff7e 135px,#87ff7a 140px,#95ff75 145px,#a2ff70 150px,#aeff6b 155px,#b9ff65 160px,#c4ff5f 165px,#ceff58 170px,#d8ff50 175px,#e2ff47 180px,#ebff3c 185px,#f4ff2e 190px,#fdff14 195px,#fff800 200px)"></i><i style="left:0px;top:151px;width:202px;background:linear-gradient(90deg,#00ffc2 0px,#00ffc0 5px,#00ffbf 10px,#00ffbd 15px,#00ffbb 20px,#00ffba 25px,#00ffb8 30px,#00ffb6 35px,#00ffb4 40px,#00ffb2 45px,#00ffb0 50px,#00ffae 55px,#00ffac 60px,#00ffaa 65px,#00ffa8 70px,#00ffa5 75px,#00ffa3 80px,#00ffa0 85px,#00ff9e 90px,#00ff9b 95px,#00ff98 100px,#00ff95 105px,#00ff92 110px,#00ff8f 115px,#2cff8c 120px,#50ff88 125px,#66ff84 130px,#79ff80 135px,#88ff7c 140px,#97ff78 145px,#a3ff73 150px,#afff6e 155px,#bbff68 160px,#c6ff62 165px,#d0ff5c 170px,#daff54 175px,#e3ff4c 180px,#edff42 185px,#f6ff35 190px,#ffff22 195px,#fff700 200px,#fff300 202px)"></i><i style="left:0px;top:153px;width:204px;background:linear-gradient(90deg,#00ffc3 0px,#00ffc2 5px,#00ffc0 10px,#00ffbf 15px,#00ffbd 20px,#00ffbb 25px,#00ffb9 30px,#00ffb8 35px,#00ffb6 40px,#00ffb4 45px,#00ffb2 50px,#00ffb0 55px,#00ffae 60px,#00ffac 65px,#00ffa9 70px,#00ffa7 75px,#00ffa5 80px,#00ffa2 85px,#00ffa0 90px,#00ff9d 95px,#00ff9a 100px,#00ff97 105px,#00ff94 110px,#00ff91 115px,#2fff8e 120px,#52ff8a 125px,#68ff87 130px,#7aff83 135px,#8aff7f 140px,#98ff7a 145px,#a5ff76 150px,#b1ff71 155px,#bcff6b 160px,#c7ff66 165px,#d1ff5f 170px,#dbff58 175px,#e5ff50 180px,#eeff46 185px,#f8ff3b 190px,#fffd2b 195px,#fff500 200px,#ffef00 204px)"></i><i style="left:0px;top:155px;width:206px;background:linear-gradient(90deg,#00ffc5 0px,#00ffc3 5px,#00ffc2 10px,#00ffc0 15px,#00ffbf 20px,#00ffbd 25px,#00ffbb 30px,#00ffb9 35px,#00ffb7 40px,#00ffb6 45px,#00ffb4 50px,#00ffb2 55px,#00ffb0 60px,#00ffad 65px,#00ffab 70px,#00ffa9 75px,#00ffa7 80px,#00ffa4 85px,#00ffa2 90px,#00ff9f 95px,#00ff9c 100px,#00ff99 105px,#00ff96 110px,#00ff93 115px,#32ff90 120px,#53ff8d 125px,#6aff89 130px,#7cff85 135px,#8bff81 140px,#99ff7d 145px,#a6ff78 150px,#b2ff73 155px,#beff6e 160px,#c8ff69 165px,#d3ff62 170px,#ddff5c 175px,#e6ff54 180px,#f0ff4b 185px,#f9ff40 190px,#fffc32 195px,#fff41b 200px,#ffec00 205px,#ffea00 206px)"></i><i style="left:0px;top:157px;width:208px;background:linear-gradient(90deg,#00ffc6 0px,#00ffc5 5px,#00ffc3 10px,#00ffc2 15px,#00ffc0 20px,#00ffbe 25px,#00ffbd 30px,#00ffbb 35px,#00ffb9 40px,#00ffb7 45px,#00ffb5 50px,#00ffb3 55px,#00ffb1 60px,#00ffaf 65px,#00ffad 70px,#00ffab 75px,#00ffa8 80px,#00ffa6 85px,#00ffa4 90px,#00ffa1 95px,#00ff9e 100px,#00ff9b 105px,#00ff98 110px,#00ff95 115px,#35ff92 120px,#55ff8f 125px,#6bff8b 130px,#7dff87 135px,#8dff84 140px,#9bff7f 145px,#a8ff7b 150px,#b4ff76 155px,#bfff71 160px,#caff6c 165px,#d4ff66 170px,#deff5f 175px,#e8ff58 180px,#f2ff4f 185px,#fbff45 190px,#fffa38 195px,#fff225 200px,#ffea00 205px,#ffe600 208px)"></i><i style="left:0px;top:159px;width:210px;background:linear-gradient(90deg,#00ffc8 0px,#00ffc6 5px,#00ffc5 10px,#00ffc3 15px,#00ffc2 20px,#00ffc0 25px,#00ffbe 30px,#00ffbd 35px,#00ffbb 40px,#00ffb9 45px,#00ffb7 50px,#00ffb5 55px,#00ffb3 60px,#00ffb1 65px,#00ffaf 70px,#00ffad 75px,#00ffaa 80px,#00ffa8 85px,#00ffa5 90px,#00ffa3 95px,#00ffa0 100px,#00ff9d 105px,#00ff9a 110px,#00ff97 115px,#38ff94 120px,#57ff91 125px,#6dff8e 130px,#7fff8a 135px,#8eff86 140px,#9cff82 145px,#a9ff7e 150px,#b5ff79 155px,#c0ff74 160px,#cbff6f 165px,#d6ff69 170px,#e0ff62 175px,#eaff5b 180px,#f3ff53 185px,#fcff4a 190px,#fff93d 195px,#fff02d 200px,#ffe913 205px,#ffe200 210px)"></i><i style="left:1px;top:161px;width:211px;background:linear-gradient(90deg,#00ffc9 0px,#00ffc8 5px,#00ffc6 10px,#00ffc5 15px,#00ffc3 20px,#00ffc1 25px,#00ffc0 30px,#00ffbe 35px,#00ffbc 40px,#00ffba 45px,#00ffb8 50px,#00ffb6 55px,#00ffb4 60px,#00ffb2 65px,#00ffb0 70px,#00ffae 75px,#00ffac 80px,#00ffa9 85px,#00ffa7 90px,#00ffa4 95px,#00ffa2 100px,#00ff9f 105px,#00ff9c 110px,#00ff99 115px,#42ff96 120px,#5eff93 125px,#72ff8f 130px,#83ff8b 135px,#92ff88 140px,#a0ff84 145px,#adff7f 150px,#b9ff7b 155px,#c4ff76 160px,#cfff70 165px,#d9ff6b 170px,#e3ff64 175px,#edff5d 180px,#f7ff56 185px,#fffe4c 190px,#fff53f 195px,#ffed30 200px,#ffe61a 205px,#ffdf00 210px,#ffde00 211px)"></i><i style="left:1px;top:163px;width:213px;background:linear-gradient(90deg,#00ffcb 0px,#00ffc9 5px,#00ffc8 10px,#00ffc6 15px,#00ffc5 20px,#00ffc3 25px,#00ffc1 30px,#00ffc0 35px,#00ffbe 40px,#00ffbc 45px,#00ffba 50px,#00ffb8 55px,#00ffb6 60px,#00ffb4 65px,#00ffb2 70px,#00ffb0 75px,#00ffae 80px,#00ffab 85px,#00ffa9 90px,#00ffa6 95px,#00ffa4 100px,#00ffa1 105px,#00ff9e 110px,#00ff9b 115px,#44ff98 120px,#5fff95 125px,#74ff91 130px,#85ff8e 135px,#94ff8a 140px,#a2ff86 145px,#aeff82 150px,#baff7d 155px,#c6ff79 160px,#d0ff73 165px,#dbff6e 170px,#e5ff68 175px,#efff61 180px,#f8ff59 185px,#fffc50 190px,#fff444 195px,#ffec36 200px,#ffe424 205px,#ffde00 210px,#ffda00 213px)"></i><i style="left:1px;top:165px;width:215px;background:linear-gradient(90deg,#00ffcc 0px,#00ffcb 5px,#00ffc9 10px,#00ffc8 15px,#00ffc6 20px,#00ffc5 25px,#00ffc3 30px,#00ffc1 35px,#00ffc0 40px,#00ffbe 45px,#00ffbc 50px,#00ffba 55px,#00ffb8 60px,#00ffb6 65px,#00ffb4 70px,#00ffb2 75px,#00ffaf 80px,#00ffad 85px,#00ffab 90px,#00ffa8 95px,#00ffa6 100px,#00ffa3 105px,#00ffa0 110px,#06ff9d 115px,#47ff9a 120px,#61ff97 125px,#75ff94 130px,#86ff90 135px,#95ff8c 140px,#a3ff89 145px,#b0ff84 150px,#bcff80 155px,#c7ff7b 160px,#d2ff76 165px,#dcff71 170px,#e7ff6b 175px,#f0ff64 180px,#faff5d 185px,#fffb54 190px,#fff248 195px,#ffea3b 200px,#ffe32b 205px,#ffdc12 210px,#ffd600 215px)"></i><i style="left:1px;top:167px;width:217px;background:linear-gradient(90deg,#00ffce 0px,#00ffcc 5px,#00ffcb 10px,#00ffc9 15px,#00ffc8 20px,#00ffc6 25px,#00ffc5 30px,#00ffc3 35px,#00ffc1 40px,#00ffbf 45px,#00ffbe 50px,#00ffbc 55px,#00ffba 60px,#00ffb8 65px,#00ffb6 70px,#00ffb4 75px,#00ffb1 80px,#00ffaf 85px,#00ffad 90px,#00ffaa 95px,#00ffa8 100px,#00ffa5 105px,#00ffa2 110px,#14ff9f 115px,#49ff9c 120px,#63ff99 125px,#77ff96 130px,#88ff92 135px,#97ff8f 140px,#a5ff8b 145px,#b1ff87 150px,#bdff83 155px,#c9ff7e 160px,#d3ff79 165px,#deff74 170px,#e8ff6e 175px,#f2ff68 180px,#fcff61 185px,#fff957 190px,#fff14c 195px,#ffe93f 200px,#ffe131 205px,#ffdb1f 210px,#ffd400 215px,#ffd200 217px)"></i><i style="left:1px;top:169px;width:219px;background:linear-gradient(90deg,#00ffcf 0px,#00ffce 5px,#00ffcc 10px,#00ffcb 15px,#00ffc9 20px,#00ffc8 25px,#00ffc6 30px,#00ffc5 35px,#00ffc3 40px,#00ffc1 45px,#00ffbf 50px,#00ffbe 55px,#00ffbc 60px,#00ffba 65px,#00ffb8 70px,#00ffb5 75px,#00ffb3 80px,#00ffb1 85px,#00ffaf 90px,#00ffac 95px,#00ffaa 100px,#00ffa7 105px,#00ffa4 110px,#1bffa2 115px,#4bff9f 120px,#65ff9b 125px,#78ff98 130px,#89ff95 135px,#98ff91 140px,#a6ff8d 145px,#b3ff89 150px,#bfff85 155px,#caff81 160px,#d5ff7c 165px,#e0ff77 170px,#eaff71 175px,#f4ff6b 180px,#fdff64 185px,#fff75a 190px,#ffef4f 195px,#ffe744 200px,#ffe037 205px,#ffd927 210px,#ffd300 215px,#ffce00 219px)"></i><i style="left:1px;top:171px;width:221px;background:linear-gradient(90deg,#00ffd1 0px,#00ffd0 5px,#00ffce 10px,#00ffcd 15px,#00ffcb 20px,#00ffca 25px,#00ffc8 30px,#00ffc6 35px,#00ffc5 40px,#00ffc3 45px,#00ffc1 50px,#00ffbf 55px,#00ffbd 60px,#00ffbb 65px,#00ffb9 70px,#00ffb7 75px,#00ffb5 80px,#00ffb3 85px,#00ffb1 90px,#00ffae 95px,#00ffac 100px,#00ffa9 105px,#00ffa6 110px,#21ffa4 115px,#4dffa1 120px,#66ff9e 125px,#7aff9b 130px,#8bff97 135px,#9aff94 140px,#a8ff90 145px,#b4ff8c 150px,#c0ff88 155px,#ccff83 160px,#d7ff7f 165px,#e1ff7a 170px,#ebff74 175px,#f5ff6e 180px,#ffff68 185px,#fff65d 190px,#ffed53 195px,#ffe647 200px,#ffde3b 205px,#ffd82d 210px,#ffd219 215px,#ffcc00 220px,#ffcb00 221px)"></i><i style="left:2px;top:173px;width:222px;background:linear-gradient(90deg,#00ffd2 0px,#00ffd1 5px,#00ffcf 10px,#00ffce 15px,#00ffcc 20px,#00ffcb 25px,#00ffc9 30px,#00ffc8 35px,#00ffc6 40px,#00ffc4 45px,#00ffc3 50px,#00ffc1 55px,#00ffbf 60px,#00ffbd 65px,#00ffbb 70px,#00ffb9 75px,#00ffb7 80px,#00ffb4 85px,#00ffb2 90px,#00ffb0 95px,#00ffad 100px,#00ffab 105px,#00ffa8 110px,#31ffa5 115px,#55ffa2 120px,#6cff9f 125px,#7fff9c 130px,#8fff99 135px,#9eff95 140px,#acff92 145px,#b8ff8e 150px,#c4ff8a 155px,#cfff85 160px,#daff81 165px,#e5ff7c 170px,#efff76 175px,#f9ff70 180px,#fffb69 185px,#fff25e 190px,#ffea54 195px,#ffe349 200px,#ffdc3d 205px,#ffd530 210px,#ffcf1e 215px,#ffc900 220px,#ffc700 222px)"></i><i style="left:2px;top:175px;width:224px;background:linear-gradient(90deg,#00ffd4 0px,#00ffd2 5px,#00ffd1 10px,#00ffd0 15px,#00ffce 20px,#00ffcd 25px,#00ffcb 30px,#00ffc9 35px,#00ffc8 40px,#00ffc6 45px,#00ffc4 50px,#00ffc3 55px,#00ffc1 60px,#00ffbf 65px,#00ffbd 70px,#00ffbb 75px,#00ffb9 80px,#00ffb6 85px,#00ffb4 90px,#00ffb2 95px,#00ffaf 100px,#00ffad 105px,#00ffaa 110px,#35ffa7 115px,#57ffa5 120px,#6effa2 125px,#81ff9e 130px,#91ff9b 135px,#a0ff98 140px,#adff94 145px,#baff90 150px,#c6ff8c 155px,#d1ff88 160px,#dcff83 165px,#e7ff7f 170px,#f1ff79 175px,#fbff74 180px,#fffa6b 185px,#fff161 190px,#ffe957 195px,#ffe14c 200px,#ffda41 205px,#ffd435 210px,#ffce26 215px,#ffc801 220px,#ffc400 224px)"></i><i style="left:2px;top:177px;width:226px;background:linear-gradient(90deg,#00ffd5 0px,#00ffd4 5px,#00ffd3 10px,#00ffd1 15px,#00ffd0 20px,#00ffce 25px,#00ffcd 30px,#00ffcb 35px,#00ffca 40px,#00ffc8 45px,#00ffc6 50px,#00ffc4 55px,#00ffc3 60px,#00ffc1 65px,#00ffbf 70px,#00ffbd 75px,#00ffbb 80px,#00ffb8 85px,#00ffb6 90px,#00ffb4 95px,#00ffb1 100px,#00ffaf 105px,#00ffac 110px,#38ffaa 115px,#59ffa7 120px,#70ffa4 125px,#82ffa1 130px,#93ff9e 135px,#a1ff9a 140px,#afff97 145px,#bbff93 150px,#c7ff8f 155px,#d3ff8b 160px,#deff86 165px,#e8ff82 170px,#f3ff7c 175px,#fdff77 180px,#fff86e 185px,#ffef64 190px,#ffe75a 195px,#ffe050 200px,#ffd945 205px,#ffd23a 210px,#ffcc2c 215px,#ffc718 220px,#ffc100 225px,#ffc000 226px)"></i><i style="left:2px;top:179px;width:228px;background:linear-gradient(90deg,#00ffd7 0px,#00ffd6 5px,#00ffd4 10px,#00ffd3 15px,#00ffd1 20px,#00ffd0 25px,#00ffce 30px,#00ffcd 35px,#00ffcb 40px,#00ffca 45px,#00ffc8 50px,#00ffc6 55px,#00ffc4 60px,#00ffc2 65px,#00ffc1 70px,#00ffbf 75px,#00ffbc 80px,#00ffba 85px,#00ffb8 90px,#00ffb6 95px,#00ffb3 100px,#00ffb1 105px,#00ffae 110px,#3bffac 115px,#5bffa9 120px,#71ffa6 125px,#84ffa3 130px,#94ffa0 135px,#a3ff9d 140px,#b0ff99 145px,#bdff95 150px,#c9ff92 155px,#d4ff8d 160px,#dfff89 165px,#eaff84 170px,#f4ff7f 175px,#feff7a 180px,#fff670 185px,#ffed66 190px,#ffe55c 195px,#ffde53 200px,#ffd748 205px,#ffd13e 210px,#ffcb31 215px,#ffc521 220px,#ffc000 225px,#ffbd00 228px)"></i><i style="left:2px;top:181px;width:230px;background:linear-gradient(90deg,#00ffd9 0px,#00ffd7 5px,#00ffd6 10px,#00ffd5 15px,#00ffd3 20px,#00ffd2 25px,#00ffd0 30px,#00ffcf 35px,#00ffcd 40px,#00ffcb 45px,#00ffca 50px,#00ffc8 55px,#00ffc6 60px,#00ffc4 65px,#00ffc2 70px,#00ffc0 75px,#00ffbe 80px,#00ffbc 85px,#00ffba 90px,#00ffb8 95px,#00ffb6 100px,#00ffb3 105px,#00ffb1 110px,#3dffae 115px,#5dffab 120px,#73ffa8 125px,#86ffa5 130px,#96ffa2 135px,#a4ff9f 140px,#b2ff9c 145px,#beff98 150px,#caff94 155px,#d6ff90 160px,#e1ff8c 165px,#ecff87 170px,#f6ff82 175px,#fffe7d 180px,#fff473 185px,#ffec69 190px,#ffe45f 195px,#ffdc56 200px,#ffd64c 205px,#ffcf41 210px,#ffc936 215px,#ffc428 220px,#ffbf12 225px,#ffba00 230px)"></i><i style="left:3px;top:183px;width:231px;background:linear-gradient(90deg,#00ffda 0px,#00ffd9 5px,#00ffd7 10px,#00ffd6 15px,#00ffd5 20px,#00ffd3 25px,#00ffd2 30px,#00ffd0 35px,#00ffcf 40px,#00ffcd 45px,#00ffcb 50px,#00ffca 55px,#00ffc8 60px,#00ffc6 65px,#00ffc4 70px,#00ffc2 75px,#00ffc0 80px,#00ffbe 85px,#00ffbc 90px,#00ffba 95px,#00ffb7 100px,#00ffb5 105px,#00ffb2 110px,#47ffb0 115px,#63ffad 120px,#79ffaa 125px,#8affa7 130px,#9affa4 135px,#a9ffa1 140px,#b6ff9d 145px,#c3ff9a 150px,#ceff96 155px,#daff92 160px,#e5ff8e 165px,#f0ff89 170px,#faff84 175px,#fffa7d 180px,#fff173 185px,#ffe869 190px,#ffe160 195px,#ffda57 200px,#ffd34d 205px,#ffcd43 210px,#ffc738 215px,#ffc12b 220px,#ffbc18 225px,#ffb700 230px,#ffb600 231px)"></i><i style="left:3px;top:185px;width:233px;background:linear-gradient(90deg,#00ffdc 0px,#00ffda 5px,#00ffd9 10px,#00ffd8 15px,#00ffd6 20px,#00ffd5 25px,#00ffd3 30px,#00ffd2 35px,#00ffd0 40px,#00ffcf 45px,#00ffcd 50px,#00ffcb 55px,#00ffca 60px,#00ffc8 65px,#00ffc6 70px,#00ffc4 75px,#00ffc2 80px,#00ffc0 85px,#00ffbe 90px,#00ffbc 95px,#00ffb9 100px,#00ffb7 105px,#09ffb4 110px,#4affb2 115px,#65ffaf 120px,#7affac 125px,#8cffaa 130px,#9cffa6 135px,#aaffa3 140px,#b8ffa0 145px,#c4ff9c 150px,#d0ff99 155px,#dcff95 160px,#e7ff91 165px,#f1ff8c 170px,#fcff87 175px,#fff87f 180px,#ffef75 185px,#ffe76c 190px,#ffdf62 195px,#ffd859 200px,#ffd150 205px,#ffcb46 210px,#ffc53c 215px,#ffc030 220px,#ffbb21 225px,#ffb600 230px,#ffb300 233px)"></i><i style="left:3px;top:187px;width:235px;background:linear-gradient(90deg,#00ffdd 0px,#00ffdc 5px,#00ffdb 10px,#00ffd9 15px,#00ffd8 20px,#00ffd7 25px,#00ffd5 30px,#00ffd4 35px,#00ffd2 40px,#00ffd1 45px,#00ffcf 50px,#00ffcd 55px,#00ffcc 60px,#00ffca 65px,#00ffc8 70px,#00ffc6 75px,#00ffc4 80px,#00ffc2 85px,#00ffc0 90px,#00ffbe 95px,#00ffbb 100px,#00ffb9 105px,#16ffb7 110px,#4cffb4 115px,#67ffb1 120px,#7cffaf 125px,#8effac 130px,#9dffa9 135px,#acffa6 140px,#b9ffa2 145px,#c6ff9f 150px,#d2ff9b 155px,#ddff97 160px,#e8ff93 165px,#f3ff8f 170px,#feff8a 175px,#fff681 180px,#ffed77 185px,#ffe56e 190px,#ffdd65 195px,#ffd65c 200px,#ffd053 205px,#ffca49 210px,#ffc43f 215px,#ffbf34 220px,#ffba27 225px,#ffb511 230px,#ffb000 235px)"></i><i style="left:3px;top:189px;width:237px;background:linear-gradient(90deg,#00ffdf 0px,#00ffde 5px,#00ffdd 10px,#00ffdb 15px,#00ffda 20px,#00ffd8 25px,#00ffd7 30px,#00ffd6 35px,#00ffd4 40px,#00ffd2 45px,#00ffd1 50px,#00ffcf 55px,#00ffcd 60px,#00ffcc 65px,#00ffca 70px,#00ffc8 75px,#00ffc6 80px,#00ffc4 85px,#00ffc2 90px,#00ffc0 95px,#00ffbe 100px,#00ffbb 105px,#1dffb9 110px,#4effb6 115px,#69ffb4 120px,#7effb1 125px,#8fffae 130px,#9fffab 135px,#adffa8 140px,#bbffa5 145px,#c7ffa2 150px,#d3ff9e 155px,#dfff9a 160px,#eaff96 165px,#f5ff92 170px,#ffff8d 175px,#fff583 180px,#ffec79 185px,#ffe370 190px,#ffdc67 195px,#ffd55e 200px,#ffce55 205px,#ffc84c 210px,#ffc343 215px,#ffbd39 220px,#ffb82c 225px,#ffb31c 230px,#ffaf00 235px,#ffad00 237px)"></i><i style="left:4px;top:191px;width:238px;background:linear-gradient(90deg,#00ffe1 0px,#00ffdf 5px,#00ffde 10px,#00ffdd 15px,#00ffdb 20px,#00ffda 25px,#00ffd8 30px,#00ffd7 35px,#00ffd6 40px,#00ffd4 45px,#00ffd2 50px,#00ffd1 55px,#00ffcf 60px,#00ffcd 65px,#00ffcb 70px,#00ffca 75px,#00ffc8 80px,#00ffc6 85px,#00ffc4 90px,#00ffc1 95px,#00ffbf 100px,#00ffbd 105px,#30ffbb 110px,#57ffb8 115px,#6fffb6 120px,#83ffb3 125px,#94ffb0 130px,#a4ffad 135px,#b2ffaa 140px,#bfffa7 145px,#ccffa3 150px,#d8ffa0 155px,#e3ff9c 160px,#eeff98 165px,#f9ff94 170px,#fffb8d 175px,#fff183 180px,#ffe87a 185px,#ffe071 190px,#ffd968 195px,#ffd25f 200px,#ffcc56 205px,#ffc64d 210px,#ffc044 215px,#ffbb3a 220px,#ffb62f 225px,#ffb120 230px,#ffad00 235px,#ffaa00 238px)"></i><i style="left:4px;top:193px;width:240px;background:linear-gradient(90deg,#00ffe2 0px,#00ffe1 5px,#00ffe0 10px,#00ffde 15px,#00ffdd 20px,#00ffdc 25px,#00ffda 30px,#00ffd9 35px,#00ffd7 40px,#00ffd6 45px,#00ffd4 50px,#00ffd3 55px,#00ffd1 60px,#00ffcf 65px,#00ffcd 70px,#00ffcc 75px,#00ffca 80px,#00ffc8 85px,#00ffc6 90px,#00ffc4 95px,#00ffc1 100px,#00ffbf 105px,#34ffbd 110px,#59ffba 115px,#71ffb8 120px,#85ffb5 125px,#96ffb2 130px,#a5ffb0 135px,#b3ffad 140px,#c1ffa9 145px,#cdffa6 150px,#d9ffa3 155px,#e5ff9f 160px,#f0ff9b 165px,#fbff97 170px,#fff98f 175px,#ffef85 180px,#ffe77c 185px,#ffdf73 190px,#ffd76a 195px,#ffd061 200px,#ffca59 205px,#ffc450 210px,#ffbf47 215px,#ffb93e 220px,#ffb433 225px,#ffb026 230px,#ffab11 235px,#ffa700 240px)"></i><i style="left:4px;top:195px;width:242px;background:linear-gradient(90deg,#00ffe4 0px,#00ffe3 5px,#00ffe1 10px,#00ffe0 15px,#00ffdf 20px,#00ffde 25px,#00ffdc 30px,#00ffdb 35px,#00ffd9 40px,#00ffd8 45px,#00ffd6 50px,#00ffd5 55px,#00ffd3 60px,#00ffd1 65px,#00ffcf 70px,#00ffce 75px,#00ffcc 80px,#00ffca 85px,#00ffc8 90px,#00ffc6 95px,#00ffc4 100px,#00ffc1 105px,#37ffbf 110px,#5bffbd 115px,#73ffba 120px,#87ffb8 125px,#98ffb5 130px,#a7ffb2 135px,#b5ffaf 140px,#c2ffac 145px,#cfffa9 150px,#dbffa5 155px,#e7ffa2 160px,#f2ff9e 165px,#fdff9a 170px,#fff791 175px,#ffed87 180px,#ffe57e 185px,#ffdd75 190px,#ffd66c 195px,#ffcf64 200px,#ffc95b 205px,#ffc353 210px,#ffbd4a 215px,#ffb841 220px,#ffb337 225px,#ffae2b 230px,#ffaa1c 235px,#ffa600 240px,#ffa400 242px)"></i><i style="left:4px;top:197px;width:244px;background:linear-gradient(90deg,#00ffe6 0px,#00ffe4 5px,#00ffe3 10px,#00ffe2 15px,#00ffe1 20px,#00ffdf 25px,#00ffde 30px,#00ffdd 35px,#00ffdb 40px,#00ffda 45px,#00ffd8 50px,#00ffd7 55px,#00ffd5 60px,#00ffd3 65px,#00ffd2 70px,#00ffd0 75px,#00ffce 80px,#00ffcc 85px,#00ffca 90px,#00ffc8 95px,#00ffc6 100px,#00ffc4 105px,#3affc1 110px,#5dffbf 115px,#75ffbd 120px,#88ffba 125px,#99ffb7 130px,#a9ffb4 135px,#b7ffb2 140px,#c4ffaf 145px,#d1ffab 150px,#ddffa8 155px,#e9ffa4 160px,#f4ffa1 165px,#ffff9d 170px,#fff592 175px,#ffec89 180px,#ffe380 185px,#ffdb77 190px,#ffd46e 195px,#ffcd66 200px,#ffc75e 205px,#ffc155 210px,#ffbc4d 215px,#ffb744 220px,#ffb23b 225px,#ffad30 230px,#ffa923 235px,#ffa406 240px,#ffa100 244px)"></i><i style="left:5px;top:199px;width:245px;background:linear-gradient(90deg,#00ffe7 0px,#00ffe6 5px,#00ffe5 10px,#00ffe4 15px,#00ffe2 20px,#00ffe1 25px,#00ffe0 30px,#00ffde 35px,#00ffdd 40px,#00ffdb 45px,#00ffda 50px,#00ffd8 55px,#00ffd7 60px,#00ffd5 65px,#00ffd3 70px,#00ffd1 75px,#00ffd0 80px,#00ffce 85px,#00ffcc 90px,#00ffca 95px,#00ffc8 100px,#00ffc5 105px,#46ffc3 110px,#64ffc1 115px,#7bffbe 120px,#8effbc 125px,#9effb9 130px,#adffb6 135px,#bbffb4 140px,#c8ffb0 145px,#d5ffad 150px,#e1ffaa 155px,#edffa6 160px,#f8ffa3 165px,#fffb9c 170px,#fff192 175px,#ffe889 180px,#ffe080 185px,#ffd877 190px,#ffd16f 195px,#ffcb66 200px,#ffc45e 205px,#ffbf56 210px,#ffb94e 215px,#ffb445 220px,#ffaf3c 225px,#ffab32 230px,#ffa725 235px,#ffa211 240px,#ff9e00 245px)"></i><i style="left:5px;top:201px;width:247px;background:linear-gradient(90deg,#00ffe9 0px,#00ffe8 5px,#00ffe7 10px,#00ffe5 15px,#00ffe4 20px,#00ffe3 25px,#00ffe1 30px,#00ffe0 35px,#00ffdf 40px,#00ffdd 45px,#00ffdc 50px,#00ffda 55px,#00ffd9 60px,#00ffd7 65px,#00ffd5 70px,#00ffd4 75px,#00ffd2 80px,#00ffd0 85px,#00ffce 90px,#00ffcc 95px,#00ffca 100px,#00ffc8 105px,#48ffc5 110px,#66ffc3 115px,#7cffc1 120px,#8fffbe 125px,#a0ffbc 130px,#afffb9 135px,#bdffb6 140px,#caffb3 145px,#d7ffb0 150px,#e3ffad 155px,#efffa9 160px,#faffa6 165px,#fff99e 170px,#ffef94 175px,#ffe68a 180px,#ffde81 185px,#ffd779 190px,#ffd071 195px,#ffc968 200px,#ffc361 205px,#ffbd59 210px,#ffb850 215px,#ffb348 220px,#ffae3f 225px,#ffaa36 230px,#ffa52a 235px,#ffa11b 240px,#ff9d00 245px,#ff9c00 247px)"></i><i style="left:5px;top:203px;width:249px;background:linear-gradient(90deg,#00ffeb 0px,#00ffea 5px,#00ffe8 10px,#00ffe7 15px,#00ffe6 20px,#00ffe5 25px,#00ffe3 30px,#00ffe2 35px,#00ffe1 40px,#00ffdf 45px,#00ffde 50px,#00ffdc 55px,#00ffdb 60px,#00ffd9 65px,#00ffd7 70px,#00ffd6 75px,#00ffd4 80px,#00ffd2 85px,#00ffd0 90px,#00ffce 95px,#00ffcc 100px,#00ffca 105px,#4bffc8 110px,#68ffc6 115px,#7effc3 120px,#91ffc1 125px,#a2ffbe 130px,#b1ffbb 135px,#bfffb9 140px,#ccffb6 145px,#d9ffb3 150px,#e5ffaf 155px,#f1ffac 160px,#fcffa8 165px,#fff7a0 170px,#ffed96 175px,#ffe58c 180px,#ffdc83 185px,#ffd57b 190px,#ffce73 195px,#ffc76b 200px,#ffc163 205px,#ffbc5b 210px,#ffb653 215px,#ffb14b 220px,#ffad42 225px,#ffa839 230px,#ffa42f 235px,#ffa022 240px,#ff9c06 245px,#ff9900 249px)"></i><i style="left:5px;top:205px;width:251px;background:linear-gradient(90deg,#00ffec 0px,#00ffeb 5px,#00ffea 10px,#00ffe9 15px,#00ffe8 20px,#00ffe7 25px,#00ffe5 30px,#00ffe4 35px,#00ffe3 40px,#00ffe1 45px,#00ffe0 50px,#00ffde 55px,#00ffdd 60px,#00ffdb 65px,#00ffd9 70px,#00ffd8 75px,#00ffd6 80px,#00ffd4 85px,#00ffd2 90px,#00ffd0 95px,#00ffce 100px,#0bffcc 105px,#4dffca 110px,#6affc8 115px,#80ffc6 120px,#93ffc3 125px,#a3ffc1 130px,#b2ffbe 135px,#c1ffbb 140px,#ceffb8 145px,#dbffb5 150px,#e7ffb2 155px,#f2ffaf 160px,#feffab 165px,#fff5a1 170px,#ffec97 175px,#ffe38e 180px,#ffdb85 185px,#ffd37d 190px,#ffcc74 195px,#ffc66c 200px,#ffc065 205px,#ffba5d 210px,#ffb555 215px,#ffb04d 220px,#ffab45 225px,#ffa73c 230px,#ffa333 235px,#ff9e27 240px,#ff9a16 245px,#ff9700 250px,#ff9600 251px)"></i><i style="left:6px;top:207px;width:252px;background:linear-gradient(90deg,#00ffee 0px,#00ffed 5px,#00ffec 10px,#00ffeb 15px,#00ffe9 20px,#00ffe8 25px,#00ffe7 30px,#00ffe6 35px,#00ffe4 40px,#00ffe3 45px,#00ffe1 50px,#00ffe0 55px,#00ffde 60px,#00ffdd 65px,#00ffdb 70px,#00ffda 75px,#00ffd8 80px,#00ffd6 85px,#00ffd4 90px,#00ffd2 95px,#00ffd0 100px,#2bffce 105px,#56ffcc 110px,#71ffca 115px,#86ffc8 120px,#98ffc5 125px,#a8ffc3 130px,#b7ffc0 135px,#c5ffbd 140px,#d2ffba 145px,#dfffb7 150px,#ebffb4 155px,#f7ffb1 160px,#fffcab 165px,#fff1a1 170px,#ffe897 175px,#ffdf8e 180px,#ffd785 185px,#ffd07d 190px,#ffc975 195px,#ffc36d 200px,#ffbd65 205px,#ffb85e 210px,#ffb356 215px,#ffae4e 220px,#ffa946 225px,#ffa53e 230px,#ffa034 235px,#ff9c29 240px,#ff981a 245px,#ff9500 250px,#ff9300 252px)"></i><i style="left:6px;top:209px;width:254px;background:linear-gradient(90deg,#00fff0 0px,#00ffef 5px,#00ffee 10px,#00ffec 15px,#00ffeb 20px,#00ffea 25px,#00ffe9 30px,#00ffe8 35px,#00ffe6 40px,#00ffe5 45px,#00ffe3 50px,#00ffe2 55px,#00ffe0 60px,#00ffdf 65px,#00ffdd 70px,#00ffdc 75px,#00ffda 80px,#00ffd8 85px,#00ffd6 90px,#00ffd5 95px,#00ffd3 100px,#2fffd1 105px,#58ffce 110px,#73ffcc 115px,#88ffca 120px,#9affc8 125px,#aaffc5 130px,#b9ffc3 135px,#c7ffc0 140px,#d4ffbd 145px,#e1ffba 150px,#edffb7 155px,#f9ffb4 160px,#fffaad 165px,#ffefa2 170px,#ffe698 175px,#ffde8f 180px,#ffd687 185px,#ffcf7e 190px,#ffc876 195px,#ffc26f 200px,#ffbc67 205px,#ffb660 210px,#ffb158 215px,#ffac51 220px,#ffa849 225px,#ffa341 230px,#ff9f38 235px,#ff9b2e 240px,#ff9721 245px,#ff9307 250px,#ff9100 254px)"></i><i style="left:6px;top:211px;width:256px;background:linear-gradient(90deg,#00fff2 0px,#00fff1 5px,#00fff0 10px,#00ffee 15px,#00ffed 20px,#00ffec 25px,#00ffeb 30px,#00ffea 35px,#00ffe8 40px,#00ffe7 45px,#00ffe5 50px,#00ffe4 55px,#00ffe3 60px,#00ffe1 65px,#00ffdf 70px,#00ffde 75px,#00ffdc 80px,#00ffda 85px,#00ffd9 90px,#00ffd7 95px,#00ffd5 100px,#33ffd3 105px,#5bffd1 110px,#75ffcf 115px,#89ffcc 120px,#9cffca 125px,#acffc8 130px,#bbffc5 135px,#c9ffc3 140px,#d6ffc0 145px,#e3ffbd 150px,#efffba 155px,#fbffb7 160px,#fff8ae 165px,#ffeda4 170px,#ffe49a 175px,#ffdc91 180px,#ffd488 185px,#ffcd80 190px,#ffc678 195px,#ffc071 200px,#ffba69 205px,#ffb562 210px,#ffb05a 215px,#ffab53 220px,#ffa64b 225px,#ffa243 230px,#ff9e3b 235px,#ff9a32 240px,#ff9626 245px,#ff9216 250px,#ff8f00 255px,#ff8e00 256px)"></i><i style="left:7px;top:213px;width:257px;background:linear-gradient(90deg,#00fff3 0px,#00fff2 5px,#00fff1 10px,#00fff0 15px,#00ffef 20px,#00ffee 25px,#00ffed 30px,#00ffeb 35px,#00ffea 40px,#00ffe9 45px,#00ffe7 50px,#00ffe6 55px,#00ffe4 60px,#00ffe3 65px,#00ffe1 70px,#00ffe0 75px,#00ffde 80px,#00ffdc 85px,#00ffdb 90px,#00ffd9 95px,#00ffd7 100px,#40ffd5 105px,#63ffd3 110px,#7bffd1 115px,#8fffcf 120px,#a1ffcc 125px,#b1ffca 130px,#bfffc7 135px,#cdffc5 140px,#dbffc2 145px,#e7ffbf 150px,#f4ffbc 155px,#ffffb9 160px,#fff4ae 165px,#ffeaa3 170px,#ffe19a 175px,#ffd891 180px,#ffd188 185px,#ffca80 190px,#ffc378 195px,#ffbd71 200px,#ffb86a 205px,#ffb262 210px,#ffad5b 215px,#ffa854 220px,#ffa44c 225px,#ffa045 230px,#ff9b3c 235px,#ff9733 240px,#ff9429 245px,#ff901a 250px,#ff8d00 255px,#ff8b00 257px)"></i><i style="left:7px;top:215px;width:259px;background:linear-gradient(90deg,#00fff5 0px,#00fff4 5px,#00fff3 10px,#00fff2 15px,#00fff1 20px,#00fff0 25px,#00ffef 30px,#00ffed 35px,#00ffec 40px,#00ffeb 45px,#00ffe9 50px,#00ffe8 55px,#00ffe7 60px,#00ffe5 65px,#00ffe4 70px,#00ffe2 75px,#00ffe0 80px,#00ffdf 85px,#00ffdd 90px,#00ffdb 95px,#00ffd9 100px,#43ffd7 105px,#65ffd5 110px,#7dffd3 115px,#91ffd1 120px,#a3ffcf 125px,#b3ffcc 130px,#c1ffca 135px,#cfffc7 140px,#ddffc5 145px,#e9ffc2 150px,#f6ffbf 155px,#fffcba 160px,#fff2af 165px,#ffe8a5 170px,#ffdf9b 175px,#ffd792 180px,#ffcf8a 185px,#ffc882 190px,#ffc27a 195px,#ffbc73 200px,#ffb66b 205px,#ffb164 210px,#ffac5d 215px,#ffa756 220px,#ffa24f 225px,#ff9e47 230px,#ff9a3f 235px,#ff9637 240px,#ff922d 245px,#ff8f20 250px,#ff8b07 255px,#ff8800 259px)"></i><i style="left:7px;top:217px;width:261px;background:linear-gradient(90deg,#00fff7 0px,#00fff6 5px,#00fff5 10px,#00fff4 15px,#00fff3 20px,#00fff2 25px,#00fff1 30px,#00ffef 35px,#00ffee 40px,#00ffed 45px,#00ffeb 50px,#00ffea 55px,#00ffe9 60px,#00ffe7 65px,#00ffe6 70px,#00ffe4 75px,#00ffe3 80px,#00ffe1 85px,#00ffdf 90px,#00ffde 95px,#00ffdc 100px,#46ffda 105px,#67ffd8 110px,#7fffd6 115px,#93ffd4 120px,#a4ffd1 125px,#b4ffcf 130px,#c3ffcd 135px,#d1ffca 140px,#dfffc8 145px,#ebffc5 150px,#f8ffc2 155px,#fffabb 160px,#fff0b0 165px,#ffe6a6 170px,#ffdd9d 175px,#ffd594 180px,#ffcd8b 185px,#ffc783 190px,#ffc07c 195px,#ffba74 200px,#ffb56d 205px,#ffaf66 210px,#ffaa5f 215px,#ffa658 220px,#ffa151 225px,#ff9d4a 230px,#ff9942 235px,#ff953a 240px,#ff9131 245px,#ff8d26 250px,#ff8a16 255px,#ff8700 260px,#ff8600 261px)"></i><i style="left:7px;top:219px;width:263px;background:linear-gradient(90deg,#00fff9 0px,#00fff8 5px,#00fff7 10px,#00fff6 15px,#00fff5 20px,#00fff4 25px,#00fff3 30px,#00fff1 35px,#00fff0 40px,#00ffef 45px,#00ffee 50px,#00ffec 55px,#00ffeb 60px,#00ffe9 65px,#00ffe8 70px,#00ffe6 75px,#00ffe5 80px,#00ffe3 85px,#00ffe2 90px,#00ffe0 95px,#00ffde 100px,#49ffdc 105px,#69ffda 110px,#81ffd8 115px,#95ffd6 120px,#a6ffd4 125px,#b6ffd2 130px,#c5ffcf 135px,#d3ffcd 140px,#e1ffca 145px,#edffc8 150px,#faffc5 155px,#fff8bd 160px,#ffeeb2 165px,#ffe4a8 170px,#ffdb9e 175px,#ffd395 180px,#ffcc8d 185px,#ffc585 190px,#ffbf7d 195px,#ffb976 200px,#ffb36f 205px,#ffae68 210px,#ffa961 215px,#ffa45a 220px,#ffa053 225px,#ff9b4c 230px,#ff9745 235px,#ff933d 240px,#ff9034 245px,#ff8c2a 250px,#ff891d 255px,#ff8500 260px,#ff8300 263px)"></i><i style="left:8px;top:221px;width:264px;background:linear-gradient(90deg,#00fffb 0px,#00fffa 5px,#00fff9 10px,#00fff8 15px,#00fff7 20px,#00fff6 25px,#00fff4 30px,#00fff3 35px,#00fff2 40px,#00fff1 45px,#00ffef 50px,#00ffee 55px,#00ffed 60px,#00ffeb 65px,#00ffea 70px,#00ffe8 75px,#00ffe7 80px,#00ffe5 85px,#00ffe4 90px,#00ffe2 95px,#1cffe0 100px,#53ffde 105px,#70ffdc 110px,#87ffda 115px,#9affd8 120px,#abffd6 125px,#bbffd4 130px,#caffd2 135px,#d8ffcf 140px,#e5ffcd 145px,#f2ffca 150px,#ffffc7 155px,#fff4bc 160px,#ffeab1 165px,#ffe0a7 170px,#ffd89e 175px,#ffd095 180px,#ffc98d 185px,#ffc285 190px,#ffbc7d 195px,#ffb676 200px,#ffb06f 205px,#ffab68 210px,#ffa661 215px,#ffa25b 220px,#ff9d54 225px,#ff994d 230px,#ff9545 235px,#ff913e 240px,#ff8e35 245px,#ff8a2c 250px,#ff8720 255px,#ff8307 260px,#ff8100 264px)"></i><i style="left:8px;top:223px;width:266px;background:linear-gradient(90deg,#00fffd 0px,#00fffc 5px,#00fffb 10px,#00fffa 15px,#00fff9 20px,#00fff8 25px,#00fff6 30px,#00fff5 35px,#00fff4 40px,#00fff3 45px,#00fff2 50px,#00fff0 55px,#00ffef 60px,#00ffee 65px,#00ffec 70px,#00ffeb 75px,#00ffe9 80px,#00ffe8 85px,#00ffe6 90px,#00ffe4 95px,#23ffe3 100px,#56ffe1 105px,#72ffdf 110px,#89ffdd 115px,#9cffdb 120px,#adffd9 125px,#bdffd7 130px,#ccffd4 135px,#daffd2 140px,#e7ffd0 145px,#f4ffcd 150px,#fffdc9 155px,#fff2bd 160px,#ffe8b2 165px,#ffdea8 170px,#ffd69f 175px,#ffce96 180px,#ffc78e 185px,#ffc086 190px,#ffba7f 195px,#ffb478 200px,#ffaf71 205px,#ffaa6a 210px,#ffa563 215px,#ffa05d 220px,#ff9c56 225px,#ff984f 230px,#ff9448 235px,#ff9040 240px,#ff8c39 245px,#ff8930 250px,#ff8525 255px,#ff8215 260px,#ff7f00 265px,#ff7e00 266px)"></i><i style="left:8px;top:225px;width:268px;background:linear-gradient(90deg,#00ffff 0px,#00fffe 5px,#00fffd 10px,#00fffc 15px,#00fffb 20px,#00fffa 25px,#00fff9 30px,#00fff7 35px,#00fff6 40px,#00fff5 45px,#00fff4 50px,#00fff3 55px,#00fff1 60px,#00fff0 65px,#00ffef 70px,#00ffed 75px,#00ffec 80px,#00ffea 85px,#00ffe9 90px,#00ffe7 95px,#28ffe5 100px,#58ffe3 105px,#75ffe2 110px,#8bffe0 115px,#9effde 120px,#afffdc 125px,#bfffda 130px,#ceffd7 135px,#dcffd5 140px,#eaffd2 145px,#f6ffd0 150px,#fffbca 155px,#fff0be 160px,#ffe6b4 165px,#ffdcaa 170px,#ffd4a0 175px,#ffcc98 180px,#ffc590 185px,#ffbf88 190px,#ffb881 195px,#ffb379 200px,#ffad72 205px,#ffa86c 210px,#ffa365 215px,#ff9f5e 220px,#ff9a58 225px,#ff9651 230px,#ff924a 235px,#ff8e43 240px,#ff8b3b 245px,#ff8733 250px,#ff8429 255px,#ff801d 260px,#ff7d00 265px,#ff7b00 268px)"></i><i style="left:9px;top:227px;width:269px;background:linear-gradient(90deg,#00feff 0px,#00feff 5px,#00ffff 10px,#00fffe 15px,#00fffd 20px,#00fffc 25px,#00fffa 30px,#00fff9 35px,#00fff8 40px,#00fff7 45px,#00fff6 50px,#00fff5 55px,#00fff3 60px,#00fff2 65px,#00fff1 70px,#00ffef 75px,#00ffee 80px,#00ffec 85px,#00ffeb 90px,#00ffe9 95px,#3affe7 100px,#61ffe6 105px,#7bffe4 110px,#91ffe2 115px,#a4ffe0 120px,#b5ffde 125px,#c4ffdc 130px,#d3ffda 135px,#e1ffd7 140px,#eeffd5 145px,#fbffd2 150px,#fff6c9 155px,#ffebbd 160px,#ffe2b3 165px,#ffd9a9 170px,#ffd1a0 175px,#ffc998 180px,#ffc290 185px,#ffbc88 190px,#ffb681 195px,#ffb07a 200px,#ffab73 205px,#ffa66c 210px,#ffa165 215px,#ff9c5f 220px,#ff9858 225px,#ff9452 230px,#ff904b 235px,#ff8c44 240px,#ff893d 245px,#ff8534 250px,#ff822b 255px,#ff7e1f 260px,#ff7b08 265px,#ff7900 269px)"></i><i style="left:9px;top:229px;width:271px;background:linear-gradient(90deg,#00fcff 0px,#00fcff 5px,#00fdff 10px,#00feff 15px,#00ffff 20px,#00fffe 25px,#00fffd 30px,#00fffc 35px,#00fffa 40px,#00fff9 45px,#00fff8 50px,#00fff7 55px,#00fff6 60px,#00fff4 65px,#00fff3 70px,#00fff2 75px,#00fff0 80px,#00ffef 85px,#00ffed 90px,#00ffec 95px,#3dffea 100px,#63ffe8 105px,#7effe7 110px,#93ffe5 115px,#a6ffe3 120px,#b7ffe1 125px,#c6ffdf 130px,#d5ffdd 135px,#e3ffda 140px,#f1ffd8 145px,#feffd5 150px,#fff4ca 155px,#ffe9be 160px,#ffe0b4 165px,#ffd7aa 170px,#ffcfa1 175px,#ffc799 180px,#ffc091 185px,#ffba89 190px,#ffb482 195px,#ffae7b 200px,#ffa974 205px,#ffa46e 210px,#ff9f67 215px,#ff9b61 220px,#ff975a 225px,#ff9354 230px,#ff8f4d 235px,#ff8b46 240px,#ff873f 245px,#ff8437 250px,#ff802f 255px,#ff7d24 260px,#ff7a15 265px,#ff7700 270px,#ff7600 271px)"></i><i style="left:9px;top:231px;width:273px;background:linear-gradient(90deg,#00faff 0px,#00fbff 5px,#00fbff 10px,#00fcff 15px,#00fdff 20px,#00feff 25px,#00ffff 30px,#00fffe 35px,#00fffd 40px,#00fffc 45px,#00fffa 50px,#00fff9 55px,#00fff8 60px,#00fff7 65px,#00fff5 70px,#00fff4 75px,#00fff3 80px,#00fff1 85px,#00fff0 90px,#00ffee 95px,#41ffed 100px,#66ffeb 105px,#80ffe9 110px,#95ffe7 115px,#a8ffe6 120px,#b9ffe4 125px,#c8ffe2 130px,#d7ffdf 135px,#e5ffdd 140px,#f3ffdb 145px,#fffed8 150px,#fff2cb 155px,#ffe7c0 160px,#ffdeb5 165px,#ffd5ac 170px,#ffcda3 175px,#ffc59a 180px,#ffbf92 185px,#ffb88b 190px,#ffb284 195px,#ffad7d 200px,#ffa876 205px,#ffa36f 210px,#ff9e69 215px,#ff9962 220px,#ff955c 225px,#ff9156 230px,#ff8d4f 235px,#ff8949 240px,#ff8642 245px,#ff823a 250px,#ff7f32 255px,#ff7c29 260px,#ff781c 265px,#ff7500 270px,#ff7400 273px)"></i><i style="left:10px;top:233px;width:274px;background:linear-gradient(90deg,#00f8ff 0px,#00f9ff 5px,#00faff 10px,#00faff 15px,#00fbff 20px,#00fcff 25px,#00fdff 30px,#00feff 35px,#00ffff 40px,#00fffe 45px,#00fffc 50px,#00fffb 55px,#00fffa 60px,#00fff9 65px,#00fff8 70px,#00fff6 75px,#00fff5 80px,#00fff3 85px,#00fff2 90px,#00fff0 95px,#4dffef 100px,#6effed 105px,#86ffec 110px,#9bffea 115px,#adffe8 120px,#beffe6 125px,#cdffe4 130px,#dcffe2 135px,#eaffe0 140px,#f8ffde 145px,#fff9d6 150px,#ffeeca 155px,#ffe3bf 160px,#ffdab4 165px,#ffd1ab 170px,#ffc9a2 175px,#ffc29a 180px,#ffbc92 185px,#ffb58b 190px,#ffb084 195px,#ffaa7d 200px,#ffa576 205px,#ffa070 210px,#ff9b69 215px,#ff9763 220px,#ff935d 225px,#ff8f56 230px,#ff8b50 235px,#ff8749 240px,#ff8443 245px,#ff803b 250px,#ff7d33 255px,#ff7a2a 260px,#ff761f 265px,#ff7308 270px,#ff7100 274px)"></i><i style="left:10px;top:235px;width:276px;background:linear-gradient(90deg,#00f6ff 0px,#00f7ff 5px,#00f8ff 10px,#00f8ff 15px,#00f9ff 20px,#00faff 25px,#00fbff 30px,#00fcff 35px,#00fdff 40px,#00feff 45px,#00ffff 50px,#00fffe 55px,#00fffc 60px,#00fffb 65px,#00fffa 70px,#00fff9 75px,#00fff7 80px,#00fff6 85px,#00fff5 90px,#00fff3 95px,#50fff2 100px,#70fff0 105px,#88ffee 110px,#9dffed 115px,#afffeb 120px,#c0ffe9 125px,#d0ffe7 130px,#deffe5 135px,#edffe3 140px,#faffe1 145px,#fff7d7 150px,#ffebcb 155px,#ffe1c0 160px,#ffd8b6 165px,#ffcfac 170px,#ffc8a3 175px,#ffc09b 180px,#ffba93 185px,#ffb48c 190px,#ffae85 195px,#ffa97e 200px,#ffa378 205px,#ff9f71 210px,#ff9a6b 215px,#ff9665 220px,#ff915e 225px,#ff8d58 230px,#ff8952 235px,#ff864b 240px,#ff8245 245px,#ff7f3e 250px,#ff7b36 255px,#ff782e 260px,#ff7524 265px,#ff7215 270px,#ff6f00 275px,#ff6e00 276px)"></i><i style="left:10px;top:237px;width:278px;background:linear-gradient(90deg,#00f4ff 0px,#00f5ff 5px,#00f6ff 10px,#00f6ff 15px,#00f7ff 20px,#00f8ff 25px,#00f9ff 30px,#00faff 35px,#00fbff 40px,#00fcff 45px,#00fdff 50px,#00feff 55px,#00ffff 60px,#00fffe 65px,#00fffd 70px,#00fffb 75px,#00fffa 80px,#00fff9 85px,#00fff7 90px,#00fff6 95px,#52fff4 100px,#72fff3 105px,#8afff1 110px,#9fffef 115px,#b1ffee 120px,#c2ffec 125px,#d2ffea 130px,#e1ffe8 135px,#efffe6 140px,#fdffe4 145px,#fff5d8 150px,#ffe9cc 155px,#ffdfc1 160px,#ffd6b7 165px,#ffcdad 170px,#ffc6a5 175px,#ffbf9d 180px,#ffb895 185px,#ffb28d 190px,#ffac86 195px,#ffa780 200px,#ffa279 205px,#ff9d73 210px,#ff986c 215px,#ff9466 220px,#ff9060 225px,#ff8c5a 230px,#ff8854 235px,#ff844e 240px,#ff8147 245px,#ff7d40 250px,#ff7a39 255px,#ff7731 260px,#ff7428 265px,#ff711c 270px,#ff6e00 275px,#ff6c00 278px)"></i><i style="left:11px;top:239px;width:279px;background:linear-gradient(90deg,#00f2ff 0px,#00f3ff 5px,#00f4ff 10px,#00f4ff 15px,#00f5ff 20px,#00f6ff 25px,#00f7ff 30px,#00f8ff 35px,#00f9ff 40px,#00faff 45px,#00fbff 50px,#00fcff 55px,#00fdff 60px,#00feff 65px,#00ffff 70px,#00fffe 75px,#00fffc 80px,#00fffb 85px,#00fffa 90px,#2cfff8 95px,#5cfff7 100px,#7afff5 105px,#91fff4 110px,#a5fff2 115px,#b7fff0 120px,#c7ffef 125px,#d7ffed 130px,#e6ffeb 135px,#f4ffe9 140px,#fffce4 145px,#fff0d7 150px,#ffe5cb 155px,#ffdbc0 160px,#ffd2b6 165px,#ffcaad 170px,#ffc2a4 175px,#ffbc9c 180px,#ffb595 185px,#ffaf8d 190px,#ffaa86 195px,#ffa480 200px,#ff9f79 205px,#ff9a73 210px,#ff966d 215px,#ff9267 220px,#ff8e61 225px,#ff8a5a 230px,#ff8654 235px,#ff824e 240px,#ff7f48 245px,#ff7b41 250px,#ff783a 255px,#ff7532 260px,#ff722a 265px,#ff6e1e 270px,#ff6b08 275px,#ff6900 279px)"></i><i style="left:11px;top:241px;width:281px;background:linear-gradient(90deg,#00f0ff 0px,#00f1ff 5px,#00f2ff 10px,#00f2ff 15px,#00f3ff 20px,#00f4ff 25px,#00f5ff 30px,#00f6ff 35px,#00f7ff 40px,#00f7ff 45px,#00f8ff 50px,#00f9ff 55px,#00faff 60px,#00fcff 65px,#00fdff 70px,#00feff 75px,#00ffff 80px,#00fffe 85px,#00fffc 90px,#31fffb 95px,#5ffffa 100px,#7cfff8 105px,#93fff7 110px,#a7fff5 115px,#b9fff3 120px,#cafff2 125px,#d9fff0 130px,#e8ffee 135px,#f6ffec 140px,#fffae5 145px,#ffeed8 150px,#ffe3cc 155px,#ffd9c1 160px,#ffd0b7 165px,#ffc8ae 170px,#ffc1a5 175px,#ffba9d 180px,#ffb396 185px,#ffad8f 190px,#ffa888 195px,#ffa381 200px,#ff9e7b 205px,#ff9974 210px,#ff946e 215px,#ff9068 220px,#ff8c62 225px,#ff885c 230px,#ff8456 235px,#ff8150 240px,#ff7d4a 245px,#ff7a43 250px,#ff763d 255px,#ff7335 260px,#ff702d 265px,#ff6d23 270px,#ff6a14 275px,#ff6700 280px,#ff6700 281px)"></i><i style="left:11px;top:243px;width:283px;background:linear-gradient(90deg,#00eeff 0px,#00efff 5px,#00f0ff 10px,#00f0ff 15px,#00f1ff 20px,#00f2ff 25px,#00f3ff 30px,#00f4ff 35px,#00f4ff 40px,#00f5ff 45px,#00f6ff 50px,#00f7ff 55px,#00f8ff 60px,#00f9ff 65px,#00faff 70px,#00fbff 75px,#00fcff 80px,#00feff 85px,#00ffff 90px,#35fffe 95px,#62fffc 100px,#7efffb 105px,#95fff9 110px,#a9fff8 115px,#bbfff6 120px,#ccfff5 125px,#dcfff3 130px,#ebfff1 135px,#f9ffef 140px,#fff7e6 145px,#ffebd9 150px,#ffe1cd 155px,#ffd7c2 160px,#ffceb8 165px,#ffc6af 170px,#ffbfa7 175px,#ffb89f 180px,#ffb297 185px,#ffac90 190px,#ffa689 195px,#ffa182 200px,#ff9c7c 205px,#ff9776 210px,#ff9370 215px,#ff8f6a 220px,#ff8a64 225px,#ff875e 230px,#ff8358 235px,#ff7f52 240px,#ff7c4c 245px,#ff7846 250px,#ff753f 255px,#ff7238 260px,#ff6f30 265px,#ff6b27 270px,#ff691b 275px,#ff6600 280px,#ff6400 283px)"></i><i style="left:12px;top:245px;width:284px;background:linear-gradient(90deg,#00edff 0px,#00edff 5px,#00eeff 10px,#00efff 15px,#00efff 20px,#00f0ff 25px,#00f1ff 30px,#00f2ff 35px,#00f2ff 40px,#00f3ff 45px,#00f4ff 50px,#00f5ff 55px,#00f6ff 60px,#00f7ff 65px,#00f8ff 70px,#00f9ff 75px,#00faff 80px,#00fbff 85px,#00fcff 90px,#44feff 95px,#6affff 100px,#85fffe 105px,#9cfffc 110px,#affffb 115px,#c1fff9 120px,#d1fff7 125px,#e1fff6 130px,#f0fff4 135px,#fefff2 140px,#fff3e4 145px,#ffe7d7 150px,#ffdccc 155px,#ffd3c1 160px,#ffcab8 165px,#ffc3af 170px,#ffbca6 175px,#ffb59e 180px,#ffaf97 185px,#ffa990 190px,#ffa389 195px,#ff9e82 200px,#ff997c 205px,#ff9576 210px,#ff9070 215px,#ff8c6a 220px,#ff8864 225px,#ff845e 230px,#ff8058 235px,#ff7d53 240px,#ff794d 245px,#ff7646 250px,#ff7340 255px,#ff7039 260px,#ff6c32 265px,#ff6929 270px,#ff661e 275px,#ff6308 280px,#ff6100 284px)"></i><i style="left:12px;top:247px;width:286px;background:linear-gradient(90deg,#00ebff 0px,#00ebff 5px,#00ecff 10px,#00edff 15px,#00edff 20px,#00eeff 25px,#00efff 30px,#00efff 35px,#00f0ff 40px,#00f1ff 45px,#00f2ff 50px,#00f3ff 55px,#00f3ff 60px,#00f4ff 65px,#00f5ff 70px,#00f6ff 75px,#00f7ff 80px,#00f9ff 85px,#00faff 90px,#47fbff 95px,#6cfcff 100px,#87fdff 105px,#9effff 110px,#b1fffe 115px,#c3fffc 120px,#d4fffb 125px,#e3fff9 130px,#f2fff7 135px,#fffdf4 140px,#fff0e5 145px,#ffe5d8 150px,#ffdacd 155px,#ffd1c2 160px,#ffc9b9 165px,#ffc1b0 170px,#ffbaa7 175px,#ffb39f 180px,#ffad98 185px,#ffa791 190px,#ffa28a 195px,#ff9d84 200px,#ff987d 205px,#ff9377 210px,#ff8f71 215px,#ff8b6b 220px,#ff8766 225px,#ff8360 230px,#ff7f5a 235px,#ff7b54 240px,#ff784e 245px,#ff7448 250px,#ff7142 255px,#ff6e3c 260px,#ff6b34 265px,#ff682c 270px,#ff6523 275px,#ff6214 280px,#ff5f00 285px,#ff5f00 286px)"></i><i style="left:12px;top:249px;width:288px;background:linear-gradient(90deg,#00e9ff 0px,#00e9ff 5px,#00eaff 10px,#00ebff 15px,#00ebff 20px,#00ecff 25px,#00edff 30px,#00edff 35px,#00eeff 40px,#00efff 45px,#00efff 50px,#00f0ff 55px,#00f1ff 60px,#00f2ff 65px,#00f3ff 70px,#00f4ff 75px,#00f5ff 80px,#00f6ff 85px,#00f7ff 90px,#49f8ff 95px,#6df9ff 100px,#88fbff 105px,#9efcff 110px,#b2fdff 115px,#c5ffff 120px,#d6fffe 125px,#e6fffc 130px,#f5fffa 135px,#fffbf4 140px,#ffeee6 145px,#ffe2d9 150px,#ffd8ce 155px,#ffcfc3 160px,#ffc7ba 165px,#ffbfb1 170px,#ffb8a8 175px,#ffb1a1 180px,#ffab99 185px,#ffa592 190px,#ffa08b 195px,#ff9b85 200px,#ff967f 205px,#ff9279 210px,#ff8d73 215px,#ff896d 220px,#ff8567 225px,#ff8161 230px,#ff7d5c 235px,#ff7a56 240px,#ff7650 245px,#ff734a 250px,#ff7044 255px,#ff6c3e 260px,#ff6937 265px,#ff662f 270px,#ff6327 275px,#ff601b 280px,#ff5d00 285px,#ff5c00 288px)"></i><i style="left:13px;top:251px;width:289px;background:linear-gradient(90deg,#00e7ff 0px,#00e8ff 5px,#00e8ff 10px,#00e9ff 15px,#00e9ff 20px,#00eaff 25px,#00ebff 30px,#00ebff 35px,#00ecff 40px,#00edff 45px,#00edff 50px,#00eeff 55px,#00efff 60px,#00f0ff 65px,#00f1ff 70px,#00f2ff 75px,#00f2ff 80px,#00f3ff 85px,#09f4ff 90px,#54f6ff 95px,#74f7ff 100px,#8df8ff 105px,#a3f9ff 110px,#b6faff 115px,#c9fcff 120px,#dafdff 125px,#ebffff 130px,#fafffe 135px,#fff5f2 140px,#ffe9e4 145px,#ffded8 150px,#ffd4cd 155px,#ffcbc2 160px,#ffc3b9 165px,#ffbbb0 170px,#ffb5a8 175px,#ffaea0 180px,#ffa899 185px,#ffa392 190px,#ff9d8b 195px,#ff9885 200px,#ff937f 205px,#ff8f79 210px,#ff8b73 215px,#ff876d 220px,#ff8367 225px,#ff7f62 230px,#ff7b5c 235px,#ff7757 240px,#ff7451 245px,#ff714b 250px,#ff6d45 255px,#ff6a3f 260px,#ff6738 265px,#ff6431 270px,#ff6128 275px,#ff5e1d 280px,#ff5b08 285px,#ff5900 289px)"></i><i style="left:13px;top:253px;width:291px;background:linear-gradient(90deg,#00e5ff 0px,#00e6ff 5px,#00e6ff 10px,#00e7ff 15px,#00e7ff 20px,#00e8ff 25px,#00e8ff 30px,#00e9ff 35px,#00eaff 40px,#00eaff 45px,#00ebff 50px,#00ecff 55px,#00edff 60px,#00edff 65px,#00eeff 70px,#00efff 75px,#00f0ff 80px,#00f1ff 85px,#18f2ff 90px,#55f3ff 95px,#75f4ff 100px,#8df5ff 105px,#a3f6ff 110px,#b6f7ff 115px,#c8f9ff 120px,#dafaff 125px,#ebfbff 130px,#fbfdff 135px,#fff3f3 140px,#ffe7e5 145px,#ffdcd9 150px,#ffd2ce 155px,#ffc9c3 160px,#ffc1ba 165px,#ffbab1 170px,#ffb3a9 175px,#ffaca1 180px,#ffa69a 185px,#ffa193 190px,#ff9c8d 195px,#ff9786 200px,#ff9280 205px,#ff8d7a 210px,#ff8974 215px,#ff856f 220px,#ff8169 225px,#ff7d63 230px,#ff795e 235px,#ff7658 240px,#ff7253 245px,#ff6f4d 250px,#ff6c47 255px,#ff6941 260px,#ff663b 265px,#ff6233 270px,#ff602c 275px,#ff5d22 280px,#ff5a14 285px,#ff5700 290px,#ff5600 291px)"></i><i style="left:14px;top:255px;width:292px;background:linear-gradient(90deg,#00e3ff 0px,#00e4ff 5px,#00e4ff 10px,#00e5ff 15px,#00e5ff 20px,#00e6ff 25px,#00e7ff 30px,#00e7ff 35px,#00e8ff 40px,#00e8ff 45px,#00e9ff 50px,#00eaff 55px,#00eaff 60px,#00ebff 65px,#00ecff 70px,#00edff 75px,#00eeff 80px,#00eeff 85px,#31efff 90px,#5ef0ff 95px,#7bf1ff 100px,#92f2ff 105px,#a7f3ff 110px,#baf5ff 115px,#ccf6ff 120px,#ddf7ff 125px,#edf8ff 130px,#fefaff 135px,#ffeef1 140px,#ffe2e4 145px,#ffd7d8 150px,#ffcecd 155px,#ffc5c3 160px,#ffbdb9 165px,#ffb6b1 170px,#ffafa9 175px,#ffa9a1 180px,#ffa39a 185px,#ff9e93 190px,#ff998c 195px,#ff9486 200px,#ff8f80 205px,#ff8b7a 210px,#ff8774 215px,#ff826f 220px,#ff7f69 225px,#ff7b64 230px,#ff775e 235px,#ff7459 240px,#ff7053 245px,#ff6d4e 250px,#ff6a48 255px,#ff6642 260px,#ff633b 265px,#ff6035 270px,#ff5d2d 275px,#ff5a24 280px,#ff5717 285px,#ff5500 290px,#ff5300 292px)"></i><i style="left:14px;top:257px;width:294px;background:linear-gradient(90deg,#00e2ff 0px,#00e2ff 5px,#00e2ff 10px,#00e3ff 15px,#00e3ff 20px,#00e4ff 25px,#00e4ff 30px,#00e5ff 35px,#00e6ff 40px,#00e6ff 45px,#00e7ff 50px,#00e7ff 55px,#00e8ff 60px,#00e9ff 65px,#00e9ff 70px,#00eaff 75px,#00ebff 80px,#00ecff 85px,#35edff 90px,#60eeff 95px,#7ceeff 100px,#93efff 105px,#a7f0ff 110px,#baf2ff 115px,#ccf3ff 120px,#dcf4ff 125px,#edf5ff 130px,#fdf6ff 135px,#ffebf2 140px,#ffe0e5 145px,#ffd5d8 150px,#ffccce 155px,#ffc3c4 160px,#ffbbba 165px,#ffb4b2 170px,#ffaeaa 175px,#ffa7a2 180px,#ffa29b 185px,#ff9c94 190px,#ff978e 195px,#ff9287 200px,#ff8e81 205px,#ff897b 210px,#ff8576 215px,#ff8170 220px,#ff7d6b 225px,#ff7965 230px,#ff7560 235px,#ff725a 240px,#ff6f55 245px,#ff6b4f 250px,#ff684a 255px,#ff6544 260px,#ff623e 265px,#ff5f37 270px,#ff5c30 275px,#ff5928 280px,#ff561d 285px,#ff5308 290px,#ff5000 294px)"></i><i style="left:14px;top:259px;width:296px;background:linear-gradient(90deg,#00e0ff 0px,#00e0ff 5px,#00e1ff 10px,#00e1ff 15px,#00e1ff 20px,#00e2ff 25px,#00e2ff 30px,#00e3ff 35px,#00e3ff 40px,#00e4ff 45px,#00e5ff 50px,#00e5ff 55px,#00e6ff 60px,#00e6ff 65px,#00e7ff 70px,#00e8ff 75px,#00e8ff 80px,#00e9ff 85px,#38eaff 90px,#61ebff 95px,#7decff 100px,#93edff 105px,#a7eeff 110px,#baefff 115px,#cbf0ff 120px,#dcf1ff 125px,#ecf2ff 130px,#fcf3ff 135px,#ffe9f3 140px,#ffdde5 145px,#ffd3d9 150px,#ffcace 155px,#ffc1c5 160px,#ffb9bb 165px,#ffb2b3 170px,#ffacab 175px,#ffa6a3 180px,#ffa09c 185px,#ff9a95 190px,#ff958f 195px,#ff9089 200px,#ff8c83 205px,#ff877d 210px,#ff8377 215px,#ff7f71 220px,#ff7b6c 225px,#ff7767 230px,#ff7461 235px,#ff705c 240px,#ff6d57 245px,#ff6a51 250px,#ff664c 255px,#ff6346 260px,#ff6040 265px,#ff5d3a 270px,#ff5a33 275px,#ff572b 280px,#ff5422 285px,#ff5114 290px,#ff4e00 295px,#ff4e00 296px)"></i><i style="left:15px;top:261px;width:297px;background:linear-gradient(90deg,#00deff 0px,#00deff 5px,#00dfff 10px,#00dfff 15px,#00e0ff 20px,#00e0ff 25px,#00e0ff 30px,#00e1ff 35px,#00e1ff 40px,#00e2ff 45px,#00e2ff 50px,#00e3ff 55px,#00e4ff 60px,#00e4ff 65px,#00e5ff 70px,#00e5ff 75px,#00e6ff 80px,#00e7ff 85px,#45e8ff 90px,#68e8ff 95px,#82e9ff 100px,#98eaff 105px,#abebff 110px,#bdecff 115px,#cfedff 120px,#dfeeff 125px,#efefff 130px,#fff0ff 135px,#ffe4f1 140px,#ffd9e4 145px,#ffcfd8 150px,#ffc6cd 155px,#ffbdc4 160px,#ffb6bb 165px,#ffafb2 170px,#ffa9aa 175px,#ffa2a3 180px,#ff9d9c 185px,#ff9895 190px,#ff928f 195px,#ff8e89 200px,#ff8983 205px,#ff857d 210px,#ff8177 215px,#ff7d72 220px,#ff796c 225px,#ff7567 230px,#ff7162 235px,#ff6e5c 240px,#ff6b57 245px,#ff6752 250px,#ff644c 255px,#ff6147 260px,#ff5e41 265px,#ff5b3b 270px,#ff5834 275px,#ff552c 280px,#ff5223 285px,#ff4f17 290px,#ff4c00 295px,#ff4a00 297px)"></i><i style="left:15px;top:263px;width:299px;background:linear-gradient(90deg,#00dcff 0px,#00dcff 5px,#00ddff 10px,#00ddff 15px,#00deff 20px,#00deff 25px,#00deff 30px,#00dfff 35px,#00dfff 40px,#00e0ff 45px,#00e0ff 50px,#00e1ff 55px,#00e1ff 60px,#00e2ff 65px,#00e2ff 70px,#00e3ff 75px,#00e4ff 80px,#00e4ff 85px,#47e5ff 90px,#6ae6ff 95px,#83e6ff 100px,#98e7ff 105px,#ace8ff 110px,#bde9ff 115px,#ceeaff 120px,#dfebff 125px,#eeecff 130px,#feedff 135px,#ffe1f2 140px,#ffd6e5 145px,#ffccd9 150px,#ffc3ce 155px,#ffbbc5 160px,#ffb4bc 165px,#ffadb3 170px,#ffa7ab 175px,#ffa1a4 180px,#ff9b9d 185px,#ff9696 190px,#ff9190 195px,#ff8c8a 200px,#ff8784 205px,#ff837e 210px,#ff7f78 215px,#ff7b73 220px,#ff776e 225px,#ff7368 230px,#ff7063 235px,#ff6c5e 240px,#ff6959 245px,#ff6553 250px,#ff624e 255px,#ff5f48 260px,#ff5c43 265px,#ff593d 270px,#ff5636 275px,#ff532f 280px,#ff5027 285px,#ff4d1d 290px,#ff4a09 295px,#ff4700 299px)"></i><i style="left:16px;top:265px;width:300px;background:linear-gradient(90deg,#00daff 0px,#00dbff 5px,#00dbff 10px,#00dbff 15px,#00dcff 20px,#00dcff 25px,#00dcff 30px,#00ddff 35px,#00ddff 40px,#00deff 45px,#00deff 50px,#00dfff 55px,#00dfff 60px,#00e0ff 65px,#00e0ff 70px,#00e1ff 75px,#00e1ff 80px,#10e2ff 85px,#51e2ff 90px,#70e3ff 95px,#88e4ff 100px,#9de4ff 105px,#afe5ff 110px,#c1e6ff 115px,#d1e7ff 120px,#e1e8ff 125px,#f1e9ff 130px,#ffe9fe 135px,#ffddf0 140px,#ffd2e3 145px,#ffc8d8 150px,#ffc0cd 155px,#ffb8c4 160px,#ffb0bb 165px,#ffaab3 170px,#ffa3ab 175px,#ff9ea4 180px,#ff989d 185px,#ff9396 190px,#ff8e90 195px,#ff898a 200px,#ff8584 205px,#ff807e 210px,#ff7c79 215px,#ff7873 220px,#ff756e 225px,#ff7169 230px,#ff6d63 235px,#ff6a5e 240px,#ff6659 245px,#ff6354 250px,#ff604f 255px,#ff5d49 260px,#ff5943 265px,#ff563e 270px,#ff5337 275px,#ff5030 280px,#ff4d29 285px,#ff4a1f 290px,#ff470f 295px,#ff4400 300px)"></i><i style="left:16px;top:267px;width:302px;background:linear-gradient(90deg,#00d8ff 0px,#00d9ff 5px,#00d9ff 10px,#00d9ff 15px,#00daff 20px,#00daff 25px,#00daff 30px,#00dbff 35px,#00dbff 40px,#00dbff 45px,#00dcff 50px,#00dcff 55px,#00ddff 60px,#00ddff 65px,#00deff 70px,#00deff 75px,#00dfff 80px,#1bdfff 85px,#53e0ff 90px,#71e0ff 95px,#89e1ff 100px,#9de2ff 105px,#afe2ff 110px,#c1e3ff 115px,#d1e4ff 120px,#e1e5ff 125px,#f0e5ff 130px,#ffe6ff 135px,#ffdaf0 140px,#ffcfe4 145px,#ffc6d9 150px,#ffbdce 155px,#ffb6c5 160px,#ffaebc 165px,#ffa8b4 170px,#ffa1ac 175px,#ff9ca5 180px,#ff969e 185px,#ff9197 190px,#ff8c91 195px,#ff878b 200px,#ff8385 205px,#ff7f7f 210px,#ff7b7a 215px,#ff7774 220px,#ff736f 225px,#ff6f6a 230px,#ff6c65 235px,#ff6860 240px,#ff655b 245px,#ff6155 250px,#ff5e50 255px,#ff5b4b 260px,#ff5845 265px,#ff5540 270px,#ff513a 275px,#ff4e33 280px,#ff4b2c 285px,#ff4823 290px,#ff4517 295px,#ff4200 300px,#ff4100 302px)"></i><i style="left:16px;top:269px;width:304px;background:linear-gradient(90deg,#00d7ff 0px,#00d7ff 5px,#00d7ff 10px,#00d7ff 15px,#00d8ff 20px,#00d8ff 25px,#00d8ff 30px,#00d9ff 35px,#00d9ff 40px,#00d9ff 45px,#00daff 50px,#00daff 55px,#00daff 60px,#00dbff 65px,#00dbff 70px,#00dcff 75px,#00dcff 80px,#21ddff 85px,#55ddff 90px,#72deff 95px,#89deff 100px,#9ddfff 105px,#b0dfff 110px,#c1e0ff 115px,#d1e1ff 120px,#e0e1ff 125px,#f0e2ff 130px,#ffe3ff 135px,#ffd8f1 140px,#ffcde5 145px,#ffc4d9 150px,#ffbbcf 155px,#ffb4c6 160px,#ffacbd 165px,#ffa6b5 170px,#ffa0ad 175px,#ff9aa6 180px,#ff949f 185px,#ff8f98 190px,#ff8a92 195px,#ff868c 200px,#ff8186 205px,#ff7d80 210px,#ff797b 215px,#ff7576 220px,#ff7170 225px,#ff6d6b 230px,#ff6a66 235px,#ff6661 240px,#ff635c 245px,#ff5f57 250px,#ff5c52 255px,#ff594d 260px,#ff5647 265px,#ff5342 270px,#ff4f3c 275px,#ff4c35 280px,#ff492e 285px,#ff4626 290px,#ff431c 295px,#ff4009 300px,#ff3d00 304px)"></i><i style="left:17px;top:271px;width:305px;background:linear-gradient(90deg,#00d5ff 0px,#00d5ff 5px,#00d5ff 10px,#00d6ff 15px,#00d6ff 20px,#00d6ff 25px,#00d6ff 30px,#00d7ff 35px,#00d7ff 40px,#00d7ff 45px,#00d8ff 50px,#00d8ff 55px,#00d8ff 60px,#00d9ff 65px,#00d9ff 70px,#00d9ff 75px,#00daff 80px,#35daff 85px,#5ddbff 90px,#78dbff 95px,#8edcff 100px,#a1dcff 105px,#b3ddff 110px,#c4ddff 115px,#d4deff 120px,#e3dfff 125px,#f2dfff 130px,#ffdefd 135px,#ffd3ef 140px,#ffc9e3 145px,#ffc0d8 150px,#ffb7ce 155px,#ffb0c5 160px,#ffa9bc 165px,#ffa2b4 170px,#ff9cac 175px,#ff97a5 180px,#ff919e 185px,#ff8c98 190px,#ff8792 195px,#ff838c 200px,#ff7e86 205px,#ff7a81 210px,#ff767b 215px,#ff7276 220px,#ff6f71 225px,#ff6b6b 230px,#ff6766 235px,#ff6461 240px,#ff605c 245px,#ff5d57 250px,#ff5a52 255px,#ff564d 260px,#ff5348 265px,#ff5042 270px,#ff4d3d 275px,#ff4a36 280px,#ff4730 285px,#ff4328 290px,#ff401e 295px,#ff3d0f 300px,#ff3a00 305px)"></i><i style="left:17px;top:273px;width:307px;background:linear-gradient(90deg,#00d3ff 0px,#00d3ff 5px,#00d3ff 10px,#00d4ff 15px,#00d4ff 20px,#00d4ff 25px,#00d4ff 30px,#00d5ff 35px,#00d5ff 40px,#00d5ff 45px,#00d5ff 50px,#00d6ff 55px,#00d6ff 60px,#00d6ff 65px,#00d7ff 70px,#00d7ff 75px,#00d7ff 80px,#38d8ff 85px,#5ed8ff 90px,#79d9ff 95px,#8ed9ff 100px,#a2d9ff 105px,#b3daff 110px,#c4daff 115px,#d3dbff 120px,#e3dbff 125px,#f2dcff 130px,#ffdcfe 135px,#ffd0f0 140px,#ffc6e4 145px,#ffbdd9 150px,#ffb5cf 155px,#ffaec6 160px,#ffa7bd 165px,#ffa0b5 170px,#ff9aad 175px,#ff95a6 180px,#ff8f9f 185px,#ff8a99 190px,#ff8693 195px,#ff818d 200px,#ff7d87 205px,#ff7882 210px,#ff747c 215px,#ff7077 220px,#ff6d72 225px,#ff696d 230px,#ff6568 235px,#ff6263 240px,#ff5e5e 245px,#ff5b59 250px,#ff5854 255px,#ff554f 260px,#ff514a 265px,#ff4e44 270px,#ff4b3f 275px,#ff4839 280px,#ff4432 285px,#ff412b 290px,#ff3e22 295px,#ff3b17 300px,#ff3700 305px,#ff3600 307px)"></i><i style="left:18px;top:275px;width:308px;background:linear-gradient(90deg,#00d1ff 0px,#00d1ff 5px,#00d2ff 10px,#00d2ff 15px,#00d2ff 20px,#00d2ff 25px,#00d2ff 30px,#00d3ff 35px,#00d3ff 40px,#00d3ff 45px,#00d3ff 50px,#00d4ff 55px,#00d4ff 60px,#00d4ff 65px,#00d4ff 70px,#00d5ff 75px,#00d5ff 80px,#44d5ff 85px,#65d6ff 90px,#7ed6ff 95px,#93d6ff 100px,#a5d7ff 105px,#b7d7ff 110px,#c7d8ff 115px,#d6d8ff 120px,#e5d8ff 125px,#f4d9ff 130px,#ffd7fc 135px,#ffccee 140px,#ffc2e3 145px,#ffbad8 150px,#ffb2ce 155px,#ffaac5 160px,#ffa3bc 165px,#ff9db4 170px,#ff97ad 175px,#ff92a6 180px,#ff8c9f 185px,#ff8899 190px,#ff8393 195px,#ff7e8d 200px,#ff7a87 205px,#ff7682 210px,#ff727c 215px,#ff6e77 220px,#ff6a72 225px,#ff666d 230px,#ff6368 235px,#ff5f63 240px,#ff5c5e 245px,#ff5959 250px,#ff5554 255px,#ff524f 260px,#ff4f4a 265px,#ff4b45 270px,#ff483f 275px,#ff453a 280px,#ff4233 285px,#ff3e2c 290px,#ff3b24 295px,#ff3719 300px,#ff3400 305px,#ff3200 308px)"></i><i style="left:18px;top:277px;width:310px;background:linear-gradient(90deg,#00cfff 0px,#00cfff 5px,#00d0ff 10px,#00d0ff 15px,#00d0ff 20px,#00d0ff 25px,#00d0ff 30px,#00d0ff 35px,#00d1ff 40px,#00d1ff 45px,#00d1ff 50px,#00d1ff 55px,#00d2ff 60px,#00d2ff 65px,#00d2ff 70px,#00d2ff 75px,#00d2ff 80px,#46d3ff 85px,#67d3ff 90px,#7fd3ff 95px,#93d4ff 100px,#a6d4ff 105px,#b7d4ff 110px,#c7d5ff 115px,#d6d5ff 120px,#e5d5ff 125px,#f3d6ff 130px,#ffd4fc 135px,#ffc9ef 140px,#ffc0e3 145px,#ffb7d9 150px,#ffafcf 155px,#ffa8c6 160px,#ffa1bd 165px,#ff9bb5 170px,#ff95ae 175px,#ff90a7 180px,#ff8ba0 185px,#ff869a 190px,#ff8194 195px,#ff7c8e 200px,#ff7888 205px,#ff7483 210px,#ff707d 215px,#ff6c78 220px,#ff6873 225px,#ff646e 230px,#ff6169 235px,#ff5d64 240px,#ff5a60 245px,#ff575b 250px,#ff5356 255px,#ff5051 260px,#ff4d4c 265px,#ff4947 270px,#ff4641 275px,#ff433c 280px,#ff3f36 285px,#ff3c2f 290px,#ff3827 295px,#ff351e 300px,#ff310f 305px,#ff2d00 310px)"></i><i style="left:19px;top:279px;width:311px;background:linear-gradient(90deg,#00ceff 0px,#00ceff 5px,#00ceff 10px,#00ceff 15px,#00ceff 20px,#00ceff 25px,#00ceff 30px,#00ceff 35px,#00cfff 40px,#00cfff 45px,#00cfff 50px,#00cfff 55px,#00cfff 60px,#00cfff 65px,#00d0ff 70px,#00d0ff 75px,#14d0ff 80px,#50d0ff 85px,#6dd1ff 90px,#84d1ff 95px,#97d1ff 100px,#a9d1ff 105px,#bad2ff 110px,#c9d2ff 115px,#d9d2ff 120px,#e7d2ff 125px,#f6d3ff 130px,#ffcffa 135px,#ffc5ed 140px,#ffbce2 145px,#ffb3d7 150px,#ffacce 155px,#ffa5c5 160px,#ff9ebc 165px,#ff98b5 170px,#ff92ad 175px,#ff8da6 180px,#ff88a0 185px,#ff839a 190px,#ff7e94 195px,#ff7a8e 200px,#ff7588 205px,#ff7183 210px,#ff6d7e 215px,#ff6978 220px,#ff6673 225px,#ff626e 230px,#ff5e6a 235px,#ff5b65 240px,#ff5760 245px,#ff545b 250px,#ff5056 255px,#ff4d51 260px,#ff4a4c 265px,#ff4647 270px,#ff4342 275px,#ff403c 280px,#ff3c37 285px,#ff3930 290px,#ff3529 295px,#ff3120 300px,#ff2d13 305px,#ff2900 310px,#ff2800 311px)"></i><i style="left:19px;top:281px;width:314px;background:linear-gradient(90deg,#00ccff 0px,#00ccff 5px,#00ccff 10px,#00ccff 15px,#00ccff 20px,#00ccff 25px,#00ccff 30px,#00ccff 35px,#00cdff 40px,#00cdff 45px,#00cdff 50px,#00cdff 55px,#00cdff 60px,#00cdff 65px,#00cdff 70px,#00cdff 75px,#1dceff 80px,#51ceff 85px,#6eceff 90px,#84ceff 95px,#98ceff 100px,#a9cfff 105px,#bacfff 110px,#c9cfff 115px,#d8cfff 120px,#e7cfff 125px,#f5d0ff 130px,#ffcdfb 135px,#ffc3ee 140px,#ffb9e3 145px,#ffb1d8 150px,#ffa9cf 155px,#ffa2c6 160px,#ff9cbd 165px,#ff96b6 170px,#ff90ae 175px,#ff8ba7 180px,#ff86a1 185px,#ff819b 190px,#ff7c95 195px,#ff788f 200px,#ff7389 205px,#ff6f84 210px,#ff6b7f 215px,#ff677a 220px,#ff6475 225px,#ff6070 230px,#ff5c6b 235px,#ff5966 240px,#ff5561 245px,#ff525c 250px,#ff4e58 255px,#ff4b53 260px,#ff474e 265px,#ff4449 270px,#ff4144 275px,#ff3d3e 280px,#ff3a39 285px,#ff3633 290px,#ff322c 295px,#ff2e24 300px,#ff2a19 305px,#ff2500 310px,#ff2100 314px)"></i><i style="left:19px;top:283px;width:315px;background:linear-gradient(90deg,#00caff 0px,#00caff 5px,#00caff 10px,#00caff 15px,#00caff 20px,#00caff 25px,#00caff 30px,#00caff 35px,#00caff 40px,#00cbff 45px,#00cbff 50px,#00cbff 55px,#00cbff 60px,#00cbff 65px,#00cbff 70px,#00cbff 75px,#23cbff 80px,#53cbff 85px,#6fcbff 90px,#85ccff 95px,#98ccff 100px,#aaccff 105px,#baccff 110px,#c9ccff 115px,#d8ccff 120px,#e6ccff 125px,#f4cdff 130px,#ffcafc 135px,#ffc0ef 140px,#ffb7e3 145px,#ffafd9 150px,#ffa7cf 155px,#ffa0c7 160px,#ff9abe 165px,#ff94b7 170px,#ff8eaf 175px,#ff89a8 180px,#ff84a2 185px,#ff7f9c 190px,#ff7a96 195px,#ff7690 200px,#ff718a 205px,#ff6d85 210px,#ff6980 215px,#ff657b 220px,#ff6276 225px,#ff5e71 230px,#ff5a6c 235px,#ff5767 240px,#ff5362 245px,#ff505e 250px,#ff4c59 255px,#ff4954 260px,#ff454f 265px,#ff424b 270px,#ff3e46 275px,#ff3b40 280px,#ff373b 285px,#ff3335 290px,#ff2f2e 295px,#ff2b27 300px,#ff261e 305px,#ff210f 310px,#ff1b00 315px)"></i><i style="left:20px;top:285px;width:316px;background:linear-gradient(90deg,#00c8ff 0px,#00c8ff 5px,#00c8ff 10px,#00c8ff 15px,#00c8ff 20px,#00c8ff 25px,#00c8ff 30px,#00c8ff 35px,#00c8ff 40px,#00c8ff 45px,#00c8ff 50px,#00c8ff 55px,#00c9ff 60px,#00c9ff 65px,#00c9ff 70px,#00c9ff 75px,#34c9ff 80px,#5bc9ff 85px,#74c9ff 90px,#89c9ff 95px,#9cc9ff 100px,#adc9ff 105px,#bdc9ff 110px,#ccc9ff 115px,#dbc9ff 120px,#e9c9ff 125px,#f7c9ff 130px,#ffc5fa 135px,#ffbced 140px,#ffb3e2 145px,#ffabd8 150px,#ffa3ce 155px,#ff9dc6 160px,#ff96be 165px,#ff90b6 170px,#ff8baf 175px,#ff86a8 180px,#ff80a1 185px,#ff7c9b 190px,#ff7795 195px,#ff7390 200px,#ff6e8a 205px,#ff6a85 210px,#ff6680 215px,#ff637b 220px,#ff5f76 225px,#ff5b71 230px,#ff576c 235px,#ff5467 240px,#ff5063 245px,#ff4d5e 250px,#ff4959 255px,#ff4655 260px,#ff4250 265px,#ff3f4b 270px,#ff3b46 275px,#ff3741 280px,#ff333c 285px,#ff2f36 290px,#ff2b2f 295px,#ff2628 300px,#ff2120 305px,#ff1b13 310px,#ff1300 315px,#ff1100 316px)"></i><i style="left:20px;top:287px;width:317px;background:linear-gradient(90deg,#00c6ff 0px,#00c6ff 5px,#00c6ff 10px,#00c6ff 15px,#00c6ff 20px,#00c6ff 25px,#00c6ff 30px,#00c6ff 35px,#00c6ff 40px,#00c6ff 45px,#00c6ff 50px,#00c6ff 55px,#00c6ff 60px,#00c6ff 65px,#00c6ff 70px,#00c6ff 75px,#37c6ff 80px,#5cc6ff 85px,#75c6ff 90px,#8ac6ff 95px,#9cc6ff 100px,#adc6ff 105px,#bdc6ff 110px,#ccc6ff 115px,#dac6ff 120px,#e8c6ff 125px,#f6c6ff 130px,#ffc3fa 135px,#ffb9ee 140px,#ffb0e3 145px,#ffa9d9 150px,#ffa1cf 155px,#ff9ac7 160px,#ff94be 165px,#ff8eb7 170px,#ff89b0 175px,#ff83a9 180px,#ff7ea2 185px,#ff7a9c 190px,#ff7596 195px,#ff7191 200px,#ff6c8b 205px,#ff6886 210px,#ff6481 215px,#ff607c 220px,#ff5d77 225px,#ff5972 230px,#ff556d 235px,#ff5269 240px,#ff4e64 245px,#ff4a5f 250px,#ff475b 255px,#ff4356 260px,#ff4051 265px,#ff3c4d 270px,#ff3848 275px,#ff3443 280px,#ff303d 285px,#ff2c38 290px,#ff2732 295px,#ff222b 300px,#ff1c23 305px,#ff1419 310px,#ff0100 315px,#ff0000 317px)"></i><i style="left:21px;top:289px;width:315px;background:linear-gradient(90deg,#00c4ff 0px,#00c4ff 5px,#00c4ff 10px,#00c4ff 15px,#00c4ff 20px,#00c4ff 25px,#00c4ff 30px,#00c4ff 35px,#00c4ff 40px,#00c4ff 45px,#00c4ff 50px,#00c4ff 55px,#00c4ff 60px,#00c4ff 65px,#00c4ff 70px,#00c4ff 75px,#43c4ff 80px,#63c4ff 85px,#7ac4ff 90px,#8ec4ff 95px,#a0c4ff 100px,#b0c4ff 105px,#c0c4ff 110px,#cec3ff 115px,#ddc3ff 120px,#ebc3ff 125px,#f8c3ff 130px,#ffbef9 135px,#ffb5ec 140px,#fface1 145px,#ffa5d7 150px,#ff9ece 155px,#ff97c6 160px,#ff91be 165px,#ff8bb6 170px,#ff85af 175px,#ff80a8 180px,#ff7ba2 185px,#ff779c 190px,#ff7296 195px,#ff6e91 200px,#ff6a8b 205px,#ff6586 210px,#ff6181 215px,#ff5e7c 220px,#ff5a77 225px,#ff5672 230px,#ff526e 235px,#ff4f69 240px,#ff4b64 245px,#ff4760 250px,#ff445b 255px,#ff4057 260px,#ff3c52 265px,#ff384d 270px,#ff3448 275px,#ff3043 280px,#ff2c3e 285px,#ff2739 290px,#ff2233 295px,#ff1c2c 300px,#ff1425 305px,#ff001b 310px,#ff0009 315px)"></i><i style="left:21px;top:291px;width:311px;background:linear-gradient(90deg,#00c3ff 0px,#00c3ff 5px,#00c2ff 10px,#00c2ff 15px,#00c2ff 20px,#00c2ff 25px,#00c2ff 30px,#00c2ff 35px,#00c2ff 40px,#00c2ff 45px,#00c2ff 50px,#00c2ff 55px,#00c2ff 60px,#00c2ff 65px,#00c2ff 70px,#00c2ff 75px,#45c1ff 80px,#64c1ff 85px,#7bc1ff 90px,#8fc1ff 95px,#a0c1ff 100px,#b0c1ff 105px,#c0c1ff 110px,#cec1ff 115px,#dcc0ff 120px,#eac0ff 125px,#f8c0ff 130px,#ffbcf9 135px,#ffb2ed 140px,#ffaae2 145px,#ffa2d8 150px,#ff9bcf 155px,#ff95c7 160px,#ff8fbf 165px,#ff89b7 170px,#ff83b0 175px,#ff7ea9 180px,#ff79a3 185px,#ff759d 190px,#ff7097 195px,#ff6c92 200px,#ff678c 205px,#ff6387 210px,#ff5f82 215px,#ff5b7d 220px,#ff5878 225px,#ff5473 230px,#ff506f 235px,#ff4c6a 240px,#ff4966 245px,#ff4561 250px,#ff415d 255px,#ff3d58 260px,#ff3953 265px,#ff354f 270px,#ff314a 275px,#ff2d45 280px,#ff2840 285px,#ff233b 290px,#ff1d35 295px,#ff152f 300px,#ff0628 305px,#ff001f 310px,#ff001d 311px)"></i><i style="left:22px;top:293px;width:305px;background:linear-gradient(90deg,#00c1ff 0px,#00c1ff 5px,#00c1ff 10px,#00c1ff 15px,#00c0ff 20px,#00c0ff 25px,#00c0ff 30px,#00c0ff 35px,#00c0ff 40px,#00c0ff 45px,#00c0ff 50px,#00c0ff 55px,#00c0ff 60px,#00bfff 65px,#00bfff 70px,#17bfff 75px,#4ebfff 80px,#6abfff 85px,#80bfff 90px,#93beff 95px,#a4beff 100px,#b4beff 105px,#c3beff 110px,#d1beff 115px,#dfbdff 120px,#ecbdff 125px,#fabdff 130px,#ffb7f7 135px,#ffaeec 140px,#ffa6e1 145px,#ff9ed7 150px,#ff98ce 155px,#ff91c6 160px,#ff8bbe 165px,#ff85b7 170px,#ff80b0 175px,#ff7ba9 180px,#ff76a3 185px,#ff719d 190px,#ff6d97 195px,#ff6991 200px,#ff648c 205px,#ff6087 210px,#ff5c82 215px,#ff587d 220px,#ff5478 225px,#ff5174 230px,#ff4d6f 235px,#ff496a 240px,#ff4566 245px,#ff4261 250px,#ff3e5d 255px,#ff3a58 260px,#ff3654 265px,#ff314f 270px,#ff2d4b 275px,#ff2846 280px,#ff2341 285px,#ff1d3c 290px,#ff1536 295px,#ff0030 300px,#ff0029 305px)"></i><i style="left:22px;top:295px;width:301px;background:linear-gradient(90deg,#00bfff 0px,#00bfff 5px,#00bfff 10px,#00bfff 15px,#00beff 20px,#00beff 25px,#00beff 30px,#00beff 35px,#00beff 40px,#00beff 45px,#00beff 50px,#00bdff 55px,#00bdff 60px,#00bdff 65px,#00bdff 70px,#1ebdff 75px,#4fbcff 80px,#6bbcff 85px,#80bcff 90px,#93bcff 95px,#a4bcff 100px,#b4bbff 105px,#c2bbff 110px,#d1bbff 115px,#debbff 120px,#ecbaff 125px,#f9baff 130px,#ffb4f8 135px,#ffacec 140px,#ffa4e2 145px,#ff9cd8 150px,#ff95cf 155px,#ff8fc7 160px,#ff89bf 165px,#ff83b7 170px,#ff7eb0 175px,#ff79aa 180px,#ff74a4 185px,#ff6f9e 190px,#ff6b98 195px,#ff6692 200px,#ff628d 205px,#ff5e88 210px,#ff5a83 215px,#ff567e 220px,#ff5279 225px,#ff4e75 230px,#ff4a70 235px,#ff476c 240px,#ff4367 245px,#ff3f63 250px,#ff3b5e 255px,#ff375a 260px,#ff3255 265px,#ff2e51 270px,#ff294c 275px,#ff2447 280px,#ff1e42 285px,#ff163d 290px,#ff0838 295px,#ff0032 300px,#ff0031 301px)"></i><i style="left:23px;top:297px;width:296px;background:linear-gradient(90deg,#00bdff 0px,#00bdff 5px,#00bdff 10px,#00bdff 15px,#00bcff 20px,#00bcff 25px,#00bcff 30px,#00bcff 35px,#00bcff 40px,#00bcff 45px,#00bbff 50px,#00bbff 55px,#00bbff 60px,#00bbff 65px,#00baff 70px,#31baff 75px,#57baff 80px,#70baff 85px,#85b9ff 90px,#97b9ff 95px,#a7b9ff 100px,#b7b9ff 105px,#c5b8ff 110px,#d3b8ff 115px,#e1b7ff 120px,#eeb7ff 125px,#fbb7ff 130px,#ffb0f6 135px,#ffa7eb 140px,#ffa0e0 145px,#ff98d7 150px,#ff92ce 155px,#ff8bc6 160px,#ff85be 165px,#ff80b7 170px,#ff7bb0 175px,#ff76a9 180px,#ff71a3 185px,#ff6c9d 190px,#ff6898 195px,#ff6392 200px,#ff5f8d 205px,#ff5b88 210px,#ff5783 215px,#ff537e 220px,#ff4f79 225px,#ff4b75 230px,#ff4770 235px,#ff436c 240px,#ff3f67 245px,#ff3b63 250px,#ff375e 255px,#ff335a 260px,#ff2e56 265px,#ff2951 270px,#ff244d 275px,#ff1e48 280px,#ff1643 285px,#ff053e 290px,#ff0039 295px,#ff0038 296px)"></i><i style="left:23px;top:299px;width:291px;background:linear-gradient(90deg,#00bbff 0px,#00bbff 5px,#00bbff 10px,#00bbff 15px,#00bbff 20px,#00baff 25px,#00baff 30px,#00baff 35px,#00baff 40px,#00b9ff 45px,#00b9ff 50px,#00b9ff 55px,#00b9ff 60px,#00b8ff 65px,#00b8ff 70px,#34b8ff 75px,#58b8ff 80px,#71b7ff 85px,#85b7ff 90px,#97b7ff 95px,#a8b6ff 100px,#b7b6ff 105px,#c5b5ff 110px,#d3b5ff 115px,#e0b5ff 120px,#eeb4ff 125px,#fbb4ff 130px,#ffadf7 135px,#ffa5eb 140px,#ff9de1 145px,#ff96d8 150px,#ff8fcf 155px,#ff89c7 160px,#ff83bf 165px,#ff7eb8 170px,#ff78b1 175px,#ff73aa 180px,#ff6ea4 185px,#ff6a9e 190px,#ff6599 195px,#ff6193 200px,#ff5d8e 205px,#ff5989 210px,#ff5484 215px,#ff507f 220px,#ff4c7a 225px,#ff4876 230px,#ff4471 235px,#ff406d 240px,#ff3c68 245px,#ff3864 250px,#ff3460 255px,#ff2f5b 260px,#ff2a57 265px,#ff2553 270px,#ff1f4e 275px,#ff1749 280px,#ff0a45 285px,#ff0040 290px,#ff003f 291px)"></i><i style="left:24px;top:301px;width:286px;background:linear-gradient(90deg,#00b9ff 0px,#00b9ff 5px,#00b9ff 10px,#00b9ff 15px,#00b9ff 20px,#00b8ff 25px,#00b8ff 30px,#00b8ff 35px,#00b8ff 40px,#00b7ff 45px,#00b7ff 50px,#00b7ff 55px,#00b6ff 60px,#00b6ff 65px,#00b6ff 70px,#3fb5ff 75px,#5fb5ff 80px,#76b5ff 85px,#8ab4ff 90px,#9bb4ff 95px,#abb3ff 100px,#bab3ff 105px,#c8b2ff 110px,#d5b2ff 115px,#e3b1ff 120px,#f0b1ff 125px,#fdb0ff 130px,#ffa9f5 135px,#ffa1ea 140px,#ff99e0 145px,#ff92d6 150px,#ff8bce 155px,#ff85c6 160px,#ff80be 165px,#ff7ab7 170px,#ff75b0 175px,#ff70aa 180px,#ff6ba4 185px,#ff679e 190px,#ff6298 195px,#ff5e93 200px,#ff598e 205px,#ff5589 210px,#ff5184 215px,#ff4d7f 220px,#ff497b 225px,#ff4576 230px,#ff4171 235px,#ff3d6d 240px,#ff3869 245px,#ff3464 250px,#ff2f60 255px,#ff2a5c 260px,#ff2557 265px,#ff1f53 270px,#ff174f 275px,#ff084a 280px,#ff0045 285px,#ff0044 286px)"></i><i style="left:24px;top:303px;width:282px;background:linear-gradient(90deg,#00b8ff 0px,#00b7ff 5px,#00b7ff 10px,#00b7ff 15px,#00b7ff 20px,#00b6ff 25px,#00b6ff 30px,#00b6ff 35px,#00b5ff 40px,#00b5ff 45px,#00b5ff 50px,#00b4ff 55px,#00b4ff 60px,#00b4ff 65px,#00b3ff 70px,#42b3ff 75px,#60b3ff 80px,#77b2ff 85px,#8ab2ff 90px,#9bb1ff 95px,#abb1ff 100px,#bab0ff 105px,#c8b0ff 110px,#d5afff 115px,#e2aeff 120px,#efaeff 125px,#fcadff 130px,#ffa6f6 135px,#ff9eeb 140px,#ff97e1 145px,#ff90d7 150px,#ff89cf 155px,#ff83c7 160px,#ff7dbf 165px,#ff78b8 170px,#ff73b1 175px,#ff6eab 180px,#ff69a5 185px,#ff649f 190px,#ff6099 195px,#ff5b94 200px,#ff578f 205px,#ff538a 210px,#ff4f85 215px,#ff4a80 220px,#ff467c 225px,#ff4277 230px,#ff3e73 235px,#ff3a6e 240px,#ff356a 245px,#ff3065 250px,#ff2b61 255px,#ff265d 260px,#ff2059 265px,#ff1854 270px,#ff0b50 275px,#ff004b 280px,#ff004a 282px)"></i><i style="left:25px;top:305px;width:277px;background:linear-gradient(90deg,#00b6ff 0px,#00b5ff 5px,#00b5ff 10px,#00b5ff 15px,#00b5ff 20px,#00b4ff 25px,#00b4ff 30px,#00b4ff 35px,#00b3ff 40px,#00b3ff 45px,#00b3ff 50px,#00b2ff 55px,#00b2ff 60px,#00b1ff 65px,#11b1ff 70px,#4bb0ff 75px,#66b0ff 80px,#7cb0ff 85px,#8eafff 90px,#9faeff 95px,#aeaeff 100px,#bcadff 105px,#caadff 110px,#d8acff 115px,#e5abff 120px,#f1abff 125px,#feaaff 130px,#ffa2f4 135px,#ff9ae9 140px,#ff93df 145px,#ff8cd6 150px,#ff85ce 155px,#ff7fc6 160px,#ff7abe 165px,#ff74b7 170px,#ff6fb1 175px,#ff6aaa 180px,#ff65a4 185px,#ff619f 190px,#ff5c99 195px,#ff5894 200px,#ff548f 205px,#ff4f8a 210px,#ff4b85 215px,#ff4780 220px,#ff437c 225px,#ff3e77 230px,#ff3a73 235px,#ff356e 240px,#ff316a 245px,#ff2c66 250px,#ff2661 255px,#ff205d 260px,#ff1859 265px,#ff0a55 270px,#ff0050 275px,#ff004f 277px)"></i><i style="left:25px;top:307px;width:272px;background:linear-gradient(90deg,#00b4ff 0px,#00b4ff 5px,#00b3ff 10px,#00b3ff 15px,#00b3ff 20px,#00b2ff 25px,#00b2ff 30px,#00b2ff 35px,#00b1ff 40px,#00b1ff 45px,#00b0ff 50px,#00b0ff 55px,#00afff 60px,#00afff 65px,#1aafff 70px,#4caeff 75px,#67aeff 80px,#7cadff 85px,#8facff 90px,#9facff 95px,#aeabff 100px,#bcabff 105px,#caaaff 110px,#d7a9ff 115px,#e4a8ff 120px,#f1a8ff 125px,#fda7ff 130px,#ff9ff5 135px,#ff97ea 140px,#ff90e0 145px,#ff89d7 150px,#ff83ce 155px,#ff7dc7 160px,#ff77bf 165px,#ff72b8 170px,#ff6db2 175px,#ff68ab 180px,#ff63a5 185px,#ff5ea0 190px,#ff5a9a 195px,#ff5595 200px,#ff5190 205px,#ff4d8b 210px,#ff4886 215px,#ff4481 220px,#ff407d 225px,#ff3b78 230px,#ff3774 235px,#ff326f 240px,#ff2d6b 245px,#ff2767 250px,#ff2163 255px,#ff195e 260px,#ff0d5a 265px,#ff0056 270px,#ff0054 272px)"></i><i style="left:26px;top:309px;width:267px;background:linear-gradient(90deg,#00b2ff 0px,#00b2ff 5px,#00b1ff 10px,#00b1ff 15px,#00b1ff 20px,#00b0ff 25px,#00b0ff 30px,#00afff 35px,#00afff 40px,#00afff 45px,#00aeff 50px,#00aeff 55px,#00adff 60px,#00adff 65px,#2eacff 70px,#54acff 75px,#6dabff 80px,#81aaff 85px,#92aaff 90px,#a2a9ff 95px,#b1a8ff 100px,#bfa8ff 105px,#cda7ff 110px,#daa6ff 115px,#e6a5ff 120px,#f3a4ff 125px,#ffa3ff 130px,#ff9bf3 135px,#ff93e9 140px,#ff8cdf 145px,#ff85d6 150px,#ff7fce 155px,#ff79c6 160px,#ff74be 165px,#ff6eb8 170px,#ff69b1 175px,#ff64ab 180px,#ff5fa5 185px,#ff5b9f 190px,#ff569a 195px,#ff5295 200px,#ff4d90 205px,#ff498b 210px,#ff4586 215px,#ff4081 220px,#ff3c7d 225px,#ff3778 230px,#ff3274 235px,#ff2d70 240px,#ff276b 245px,#ff2167 250px,#ff1963 255px,#ff0b5f 260px,#ff005b 265px,#ff0059 267px)"></i><i style="left:26px;top:311px;width:263px;background:linear-gradient(90deg,#00b0ff 0px,#00b0ff 5px,#00afff 10px,#00afff 15px,#00afff 20px,#00aeff 25px,#00aeff 30px,#00adff 35px,#00adff 40px,#00acff 45px,#00acff 50px,#00abff 55px,#00abff 60px,#00aaff 65px,#31aaff 70px,#55a9ff 75px,#6ea8ff 80px,#81a8ff 85px,#93a7ff 90px,#a2a6ff 95px,#b1a6ff 100px,#bfa5ff 105px,#cca4ff 110px,#d9a3ff 115px,#e6a2ff 120px,#f2a1ff 125px,#ffa0ff 130px,#ff98f4 135px,#ff90e9 140px,#ff89e0 145px,#ff83d7 150px,#ff7cce 155px,#ff77c7 160px,#ff71bf 165px,#ff6cb8 170px,#ff67b2 175px,#ff62ac 180px,#ff5da6 185px,#ff58a0 190px,#ff549b 195px,#ff4f95 200px,#ff4a90 205px,#ff468c 210px,#ff4187 215px,#ff3d82 220px,#ff387e 225px,#ff3379 230px,#ff2e75 235px,#ff2871 240px,#ff226c 245px,#ff1a68 250px,#ff0e64 255px,#ff0060 260px,#ff005d 263px)"></i><i style="left:27px;top:313px;width:257px;background:linear-gradient(90deg,#00aeff 0px,#00aeff 5px,#00adff 10px,#00adff 15px,#00adff 20px,#00acff 25px,#00acff 30px,#00abff 35px,#00abff 40px,#00aaff 45px,#00aaff 50px,#00a9ff 55px,#00a8ff 60px,#00a8ff 65px,#3ca7ff 70px,#5ca7ff 75px,#73a6ff 80px,#85a5ff 85px,#96a4ff 90px,#a6a4ff 95px,#b4a3ff 100px,#c2a2ff 105px,#cfa1ff 110px,#dca0ff 115px,#e89fff 120px,#f49eff 125px,#ff9cfe 130px,#ff94f2 135px,#ff8ce8 140px,#ff85de 145px,#ff7fd6 150px,#ff79cd 155px,#ff73c6 160px,#ff6dbf 165px,#ff68b8 170px,#ff63b1 175px,#ff5eab 180px,#ff59a5 185px,#ff54a0 190px,#ff509b 195px,#ff4b95 200px,#ff4790 205px,#ff428b 210px,#ff3d87 215px,#ff3882 220px,#ff337e 225px,#ff2e79 230px,#ff2875 235px,#ff2271 240px,#ff1a6d 245px,#ff0d68 250px,#ff0064 255px,#ff0063 257px)"></i><i style="left:28px;top:315px;width:252px;background:linear-gradient(90deg,#00acff 0px,#00acff 5px,#00abff 10px,#00abff 15px,#00aaff 20px,#00aaff 25px,#00a9ff 30px,#00a9ff 35px,#00a8ff 40px,#00a8ff 45px,#00a7ff 50px,#00a7ff 55px,#00a6ff 60px,#00a5ff 65px,#46a5ff 70px,#62a4ff 75px,#77a3ff 80px,#89a2ff 85px,#9aa2ff 90px,#a9a1ff 95px,#b7a0ff 100px,#c49fff 105px,#d19eff 110px,#de9dff 115px,#ea9cff 120px,#f69aff 125px,#ff97fc 130px,#ff8ff1 135px,#ff88e7 140px,#ff81dd 145px,#ff7bd5 150px,#ff75cd 155px,#ff6fc5 160px,#ff6abe 165px,#ff64b7 170px,#ff5fb1 175px,#ff5aab 180px,#ff55a5 185px,#ff51a0 190px,#ff4c9a 195px,#ff4795 200px,#ff4290 205px,#ff3e8b 210px,#ff3987 215px,#ff3482 220px,#ff2e7e 225px,#ff2879 230px,#ff2275 235px,#ff1971 240px,#ff0b6d 245px,#ff0069 250px,#ff0067 252px)"></i><i style="left:28px;top:317px;width:248px;background:linear-gradient(90deg,#00aaff 0px,#00aaff 5px,#00a9ff 10px,#00a9ff 15px,#00a8ff 20px,#00a8ff 25px,#00a7ff 30px,#00a7ff 35px,#00a6ff 40px,#00a6ff 45px,#00a5ff 50px,#00a4ff 55px,#00a4ff 60px,#06a3ff 65px,#48a2ff 70px,#63a1ff 75px,#78a1ff 80px,#8aa0ff 85px,#9a9fff 90px,#a99eff 95px,#b79dff 100px,#c49cff 105px,#d19bff 110px,#dd9aff 115px,#ea98ff 120px,#f697ff 125px,#ff94fc 130px,#ff8cf1 135px,#ff85e7 140px,#ff7ede 145px,#ff78d5 150px,#ff72cd 155px,#ff6cc6 160px,#ff67bf 165px,#ff62b8 170px,#ff5cb2 175px,#ff57ac 180px,#ff52a6 185px,#ff4ea0 190px,#ff499b 195px,#ff4496 200px,#ff3f91 205px,#ff3a8c 210px,#ff3588 215px,#ff2f83 220px,#ff2a7f 225px,#ff237a 230px,#ff1b76 235px,#ff0e72 240px,#ff006e 245px,#ff006b 248px)"></i><i style="left:29px;top:319px;width:242px;background:linear-gradient(90deg,#00a8ff 0px,#00a8ff 5px,#00a7ff 10px,#00a7ff 15px,#00a6ff 20px,#00a6ff 25px,#00a5ff 30px,#00a5ff 35px,#00a4ff 40px,#00a3ff 45px,#00a3ff 50px,#00a2ff 55px,#00a1ff 60px,#27a0ff 65px,#4fa0ff 70px,#689fff 75px,#7c9eff 80px,#8e9dff 85px,#9d9cff 90px,#ac9bff 95px,#ba9aff 100px,#c799ff 105px,#d398ff 110px,#e096ff 115px,#ec95ff 120px,#f894ff 125px,#ff90fb 130px,#ff88f0 135px,#ff81e6 140px,#ff7add 145px,#ff74d4 150px,#ff6ecd 155px,#ff68c5 160px,#ff63be 165px,#ff5eb8 170px,#ff58b1 175px,#ff53ab 180px,#ff4ea6 185px,#ff4aa0 190px,#ff459b 195px,#ff4096 200px,#ff3b91 205px,#ff358c 210px,#ff3088 215px,#ff2a83 220px,#ff237f 225px,#ff1a7a 230px,#ff0d76 235px,#ff0072 240px,#ff0070 242px)"></i><i style="left:29px;top:321px;width:238px;background:linear-gradient(90deg,#00a7ff 0px,#00a6ff 5px,#00a6ff 10px,#00a5ff 15px,#00a4ff 20px,#00a4ff 25px,#00a3ff 30px,#00a3ff 35px,#00a2ff 40px,#00a1ff 45px,#00a0ff 50px,#00a0ff 55px,#009fff 60px,#2a9eff 65px,#519dff 70px,#699cff 75px,#7d9bff 80px,#8e9aff 85px,#9e99ff 90px,#ac98ff 95px,#ba97ff 100px,#c796ff 105px,#d395ff 110px,#df93ff 115px,#eb92ff 120px,#f790ff 125px,#ff8dfb 130px,#ff85f1 135px,#ff7ee7 140px,#ff77de 145px,#ff71d5 150px,#ff6bcd 155px,#ff65c6 160px,#ff60bf 165px,#ff5bb8 170px,#ff55b2 175px,#ff50ac 180px,#ff4ba6 185px,#ff46a1 190px,#ff419c 195px,#ff3c97 200px,#ff3792 205px,#ff318d 210px,#ff2b89 215px,#ff2484 220px,#ff1c80 225px,#ff107b 230px,#ff0077 235px,#ff0075 238px)"></i><i style="left:30px;top:323px;width:233px;background:linear-gradient(90deg,#00a5ff 0px,#00a4ff 5px,#00a3ff 10px,#00a3ff 15px,#00a2ff 20px,#00a2ff 25px,#00a1ff 30px,#00a0ff 35px,#00a0ff 40px,#009fff 45px,#009eff 50px,#009dff 55px,#009cff 60px,#379bff 65px,#589bff 70px,#6e9aff 75px,#8199ff 80px,#9297ff 85px,#a196ff 90px,#af95ff 95px,#bc94ff 100px,#c993ff 105px,#d591ff 110px,#e190ff 115px,#ed8eff 120px,#f98dff 125px,#ff88fa 130px,#ff81ef 135px,#ff7ae5 140px,#ff73dc 145px,#ff6dd4 150px,#ff67cc 155px,#ff61c5 160px,#ff5cbe 165px,#ff57b8 170px,#ff51b2 175px,#ff4cac 180px,#ff47a6 185px,#ff42a1 190px,#ff3c9c 195px,#ff3797 200px,#ff3192 205px,#ff2b8d 210px,#ff2488 215px,#ff1c84 220px,#ff0f80 225px,#ff007b 230px,#ff0079 233px)"></i><i style="left:30px;top:325px;width:228px;background:linear-gradient(90deg,#00a3ff 0px,#00a2ff 5px,#00a2ff 10px,#00a1ff 15px,#00a0ff 20px,#00a0ff 25px,#009fff 30px,#009eff 35px,#009dff 40px,#009dff 45px,#009cff 50px,#009bff 55px,#009aff 60px,#3a99ff 65px,#5998ff 70px,#6f97ff 75px,#8296ff 80px,#9295ff 85px,#a194ff 90px,#af92ff 95px,#bc91ff 100px,#c990ff 105px,#d58eff 110px,#e18dff 115px,#ed8bff 120px,#f889ff 125px,#ff85fa 130px,#ff7ef0 135px,#ff77e6 140px,#ff70dd 145px,#ff6ad5 150px,#ff64cd 155px,#ff5ec6 160px,#ff59bf 165px,#ff53b9 170px,#ff4eb2 175px,#ff49ad 180px,#ff43a7 185px,#ff3ea2 190px,#ff389c 195px,#ff3397 200px,#ff2c93 205px,#ff258e 210px,#ff1d89 215px,#ff1185 220px,#ff0081 225px,#ff007e 228px)"></i><i style="left:31px;top:327px;width:223px;background:linear-gradient(90deg,#00a1ff 0px,#00a0ff 5px,#009fff 10px,#009fff 15px,#009eff 20px,#009dff 25px,#009dff 30px,#009cff 35px,#009bff 40px,#009aff 45px,#0099ff 50px,#0098ff 55px,#0097ff 60px,#4396ff 65px,#5f95ff 70px,#7494ff 75px,#8593ff 80px,#9592ff 85px,#a491ff 90px,#b28fff 95px,#bf8eff 100px,#cb8cff 105px,#d78bff 110px,#e389ff 115px,#ef88ff 120px,#fa86ff 125px,#ff80f9 130px,#ff79ee 135px,#ff72e5 140px,#ff6cdc 145px,#ff66d4 150px,#ff60cc 155px,#ff5ac5 160px,#ff54be 165px,#ff4fb8 170px,#ff49b2 175px,#ff44ac 180px,#ff3fa7 185px,#ff39a1 190px,#ff339c 195px,#ff2d97 200px,#ff2592 205px,#ff1d8e 210px,#ff1089 215px,#ff0085 220px,#ff0082 223px)"></i><i style="left:32px;top:329px;width:218px;background:linear-gradient(90deg,#009fff 0px,#009eff 5px,#009dff 10px,#009dff 15px,#009cff 20px,#009bff 25px,#009aff 30px,#0099ff 35px,#0099ff 40px,#0098ff 45px,#0097ff 50px,#0096ff 55px,#1f95ff 60px,#4b94ff 65px,#6493ff 70px,#7891ff 75px,#8990ff 80px,#998fff 85px,#a78eff 90px,#b48cff 95px,#c18bff 100px,#cd89ff 105px,#d987ff 110px,#e586ff 115px,#f184ff 120px,#fc82ff 125px,#ff7cf7 130px,#ff75ed 135px,#ff6ee4 140px,#ff67db 145px,#ff61d3 150px,#ff5bcc 155px,#ff56c4 160px,#ff50be 165px,#ff4ab8 170px,#ff45b2 175px,#ff3fac 180px,#ff39a6 185px,#ff33a1 190px,#ff2d9c 195px,#ff2597 200px,#ff1c92 205px,#ff0f8e 210px,#ff0089 215px,#ff0087 218px)"></i><i style="left:32px;top:331px;width:214px;background:linear-gradient(90deg,#009dff 0px,#009cff 5px,#009bff 10px,#009bff 15px,#009aff 20px,#0099ff 25px,#0098ff 30px,#0097ff 35px,#0096ff 40px,#0095ff 45px,#0094ff 50px,#0093ff 55px,#2392ff 60px,#4d91ff 65px,#6590ff 70px,#798fff 75px,#8a8eff 80px,#998cff 85px,#a78bff 90px,#b489ff 95px,#c188ff 100px,#cd86ff 105px,#d984ff 110px,#e582ff 115px,#f080ff 120px,#fb7eff 125px,#ff78f8 130px,#ff71ee 135px,#ff6ae4 140px,#ff64dc 145px,#ff5ed4 150px,#ff58cc 155px,#ff52c5 160px,#ff4cbf 165px,#ff47b8 170px,#ff41b2 175px,#ff3bad 180px,#ff35a7 185px,#ff2ea2 190px,#ff279d 195px,#ff1e98 200px,#ff1293 205px,#ff008f 210px,#ff008b 214px)"></i><i style="left:33px;top:333px;width:208px;background:linear-gradient(90deg,#009bff 0px,#009aff 5px,#0099ff 10px,#0098ff 15px,#0098ff 20px,#0097ff 25px,#0096ff 30px,#0095ff 35px,#0094ff 40px,#0093ff 45px,#0092ff 50px,#0091ff 55px,#3290ff 60px,#538fff 65px,#6a8dff 70px,#7d8cff 75px,#8d8bff 80px,#9c89ff 85px,#aa88ff 90px,#b786ff 95px,#c384ff 100px,#cf83ff 105px,#db81ff 110px,#e77fff 115px,#f27cff 120px,#fd7aff 125px,#ff74f6 130px,#ff6dec 135px,#ff66e3 140px,#ff5fdb 145px,#ff59d3 150px,#ff53cb 155px,#ff4dc5 160px,#ff47be 165px,#ff41b8 170px,#ff3bb2 175px,#ff35ac 180px,#ff2ea7 185px,#ff27a2 190px,#ff1e9d 195px,#ff1198 200px,#ff0093 205px,#ff0090 208px)"></i><i style="left:34px;top:335px;width:203px;background:linear-gradient(90deg,#0099ff 0px,#0098ff 5px,#0097ff 10px,#0096ff 15px,#0095ff 20px,#0094ff 25px,#0094ff 30px,#0093ff 35px,#0092ff 40px,#0090ff 45px,#008fff 50px,#008eff 55px,#3c8dff 60px,#5a8cff 65px,#6f8aff 70px,#8189ff 75px,#9188ff 80px,#9f86ff 85px,#ad84ff 90px,#b983ff 95px,#c681ff 100px,#d27fff 105px,#dd7dff 110px,#e97bff 115px,#f478ff 120px,#ff76ff 125px,#ff6ff5 130px,#ff68eb 135px,#ff61e2 140px,#ff5bda 145px,#ff54d2 150px,#ff4ecb 155px,#ff48c4 160px,#ff42bd 165px,#ff3cb7 170px,#ff35b1 175px,#ff2fac 180px,#ff27a6 185px,#ff1ea1 190px,#ff0f9c 195px,#ff0098 200px,#ff0095 203px)"></i><i style="left:34px;top:337px;width:199px;background:linear-gradient(90deg,#0097ff 0px,#0096ff 5px,#0095ff 10px,#0094ff 15px,#0093ff 20px,#0092ff 25px,#0091ff 30px,#0090ff 35px,#008fff 40px,#008eff 45px,#008dff 50px,#008cff 55px,#3e8aff 60px,#5b89ff 65px,#7088ff 70px,#8186ff 75px,#9185ff 80px,#9f83ff 85px,#ad81ff 90px,#b980ff 95px,#c67eff 100px,#d17cff 105px,#dd7aff 110px,#e877ff 115px,#f375ff 120px,#fe72ff 125px,#ff6bf5 130px,#ff64ec 135px,#ff5de3 140px,#ff57da 145px,#ff51d3 150px,#ff4acb 155px,#ff44c5 160px,#ff3ebe 165px,#ff37b8 170px,#ff30b2 175px,#ff28ad 180px,#ff1fa7 185px,#ff12a2 190px,#ff009d 195px,#ff0099 199px)"></i><i style="left:35px;top:339px;width:193px;background:linear-gradient(90deg,#0095ff 0px,#0094ff 5px,#0093ff 10px,#0092ff 15px,#0091ff 20px,#0090ff 25px,#008fff 30px,#008eff 35px,#008dff 40px,#008cff 45px,#008aff 50px,#1489ff 55px,#4788ff 60px,#6086ff 65px,#7485ff 70px,#8583ff 75px,#9482ff 80px,#a280ff 85px,#af7eff 90px,#bc7cff 95px,#c87aff 100px,#d478ff 105px,#df76ff 110px,#ea73ff 115px,#f571ff 120px,#ff6dfe 125px,#ff66f4 130px,#ff5fea 135px,#ff58e2 140px,#ff52d9 145px,#ff4bd2 150px,#ff45cb 155px,#ff3ec4 160px,#ff38be 165px,#ff30b7 170px,#ff29b2 175px,#ff1fac 180px,#ff11a7 185px,#ff00a2 190px,#ff009f 193px)"></i><i style="left:36px;top:341px;width:188px;background:linear-gradient(90deg,#0092ff 0px,#0092ff 5px,#0091ff 10px,#0090ff 15px,#008fff 20px,#008eff 25px,#008cff 30px,#008bff 35px,#008aff 40px,#0089ff 45px,#0088ff 50px,#2986ff 55px,#4e85ff 60px,#6583ff 65px,#7882ff 70px,#8980ff 75px,#977eff 80px,#a57dff 85px,#b27bff 90px,#be79ff 95px,#ca76ff 100px,#d674ff 105px,#e172ff 110px,#ec6fff 115px,#f76cff 120px,#ff68fc 125px,#ff61f2 130px,#ff5ae9 135px,#ff53e0 140px,#ff4cd8 145px,#ff46d1 150px,#ff3fca 155px,#ff38c3 160px,#ff31bd 165px,#ff29b7 170px,#ff1fb1 175px,#ff10ac 180px,#ff00a7 185px,#ff00a4 188px)"></i><i style="left:36px;top:343px;width:184px;background:linear-gradient(90deg,#0091ff 0px,#0090ff 5px,#008fff 10px,#008eff 15px,#008dff 20px,#008bff 25px,#008aff 30px,#0089ff 35px,#0088ff 40px,#0087ff 45px,#0085ff 50px,#2c84ff 55px,#4f82ff 60px,#6681ff 65px,#797fff 70px,#897dff 75px,#987cff 80px,#a57aff 85px,#b278ff 90px,#be75ff 95px,#ca73ff 100px,#d571ff 105px,#e16eff 110px,#ec6bff 115px,#f668ff 120px,#ff64fd 125px,#ff5df3 130px,#ff56ea 135px,#ff4fe1 140px,#ff48d9 145px,#ff41d2 150px,#ff3acb 155px,#ff33c4 160px,#ff2abe 165px,#ff21b8 170px,#ff13b2 175px,#ff00ad 180px,#ff00a8 184px)"></i><i style="left:37px;top:345px;width:178px;background:linear-gradient(90deg,#008eff 0px,#008dff 5px,#008cff 10px,#008bff 15px,#008aff 20px,#0089ff 25px,#0088ff 30px,#0087ff 35px,#0085ff 40px,#0084ff 45px,#0082ff 50px,#3881ff 55px,#567fff 60px,#6b7eff 65px,#7d7cff 70px,#8c7aff 75px,#9b78ff 80px,#a876ff 85px,#b574ff 90px,#c172ff 95px,#cc6fff 100px,#d76dff 105px,#e26aff 110px,#ed67ff 115px,#f864ff 120px,#ff5ffb 125px,#ff57f2 130px,#ff50e8 135px,#ff49e0 140px,#ff42d8 145px,#ff3bd1 150px,#ff33ca 155px,#ff2ac3 160px,#ff20bd 165px,#ff12b7 170px,#ff00b2 175px,#ff00ae 178px)"></i><i style="left:38px;top:347px;width:173px;background:linear-gradient(90deg,#008cff 0px,#008bff 5px,#008aff 10px,#0089ff 15px,#0088ff 20px,#0086ff 25px,#0085ff 30px,#0084ff 35px,#0083ff 40px,#0081ff 45px,#0080ff 50px,#417eff 55px,#5b7cff 60px,#707bff 65px,#8179ff 70px,#9077ff 75px,#9e75ff 80px,#ab73ff 85px,#b770ff 90px,#c36eff 95px,#ce6bff 100px,#d968ff 105px,#e465ff 110px,#ef62ff 115px,#fa5fff 120px,#ff59fa 125px,#ff51f0 130px,#ff4ae7 135px,#ff43df 140px,#ff3bd7 145px,#ff33d0 150px,#ff2bc9 155px,#ff20c3 160px,#ff10bd 165px,#ff00b7 170px,#ff00b3 173px)"></i><i style="left:39px;top:349px;width:168px;background:linear-gradient(90deg,#008aff 0px,#0089ff 5px,#0088ff 10px,#0086ff 15px,#0085ff 20px,#0084ff 25px,#0083ff 30px,#0081ff 35px,#0080ff 40px,#007eff 45px,#1e7dff 50px,#497bff 55px,#6179ff 60px,#7477ff 65px,#8475ff 70px,#9373ff 75px,#a071ff 80px,#ad6fff 85px,#b96cff 90px,#c56aff 95px,#d067ff 100px,#db64ff 105px,#e661ff 110px,#f15dff 115px,#fb59ff 120px,#ff53f8 125px,#ff4bef 130px,#ff44e6 135px,#ff3cde 140px,#ff34d6 145px,#ff2bcf 150px,#ff20c9 155px,#ff0fc2 160px,#ff00bc 165px,#ff00b9 168px)"></i><i style="left:39px;top:351px;width:163px;background:linear-gradient(90deg,#0088ff 0px,#0087ff 5px,#0086ff 10px,#0084ff 15px,#0083ff 20px,#0082ff 25px,#0080ff 30px,#007fff 35px,#007dff 40px,#007cff 45px,#227aff 50px,#4a78ff 55px,#6277ff 60px,#7475ff 65px,#8573ff 70px,#9370ff 75px,#a16eff 80px,#ad6cff 85px,#b969ff 90px,#c566ff 95px,#d063ff 100px,#db60ff 105px,#e65dff 110px,#f059ff 115px,#fb55ff 120px,#ff4ef9 125px,#ff46f0 130px,#ff3ee7 135px,#ff36df 140px,#ff2dd7 145px,#ff22d0 150px,#ff12c9 155px,#ff00c3 160px,#ff00bf 163px)"></i><i style="left:40px;top:353px;width:158px;background:linear-gradient(90deg,#0086ff 0px,#0084ff 5px,#0083ff 10px,#0082ff 15px,#0080ff 20px,#007fff 25px,#007eff 30px,#007cff 35px,#007bff 40px,#0079ff 45px,#3077ff 50px,#5175ff 55px,#6773ff 60px,#7871ff 65px,#886fff 70px,#966dff 75px,#a36aff 80px,#b068ff 85px,#bc65ff 90px,#c762ff 95px,#d25fff 100px,#dd5bff 105px,#e857ff 110px,#f253ff 115px,#fc4fff 120px,#ff47f8 125px,#ff3fee 130px,#ff36e6 135px,#ff2dde 140px,#ff22d6 145px,#ff11cf 150px,#ff00c9 155px,#ff00c5 158px)"></i><i style="left:41px;top:355px;width:153px;background:linear-gradient(90deg,#0083ff 0px,#0082ff 5px,#0081ff 10px,#007fff 15px,#007eff 20px,#007cff 25px,#007bff 30px,#0079ff 35px,#0078ff 40px,#0076ff 45px,#3b74ff 50px,#5772ff 55px,#6b70ff 60px,#7c6eff 65px,#8b6cff 70px,#9969ff 75px,#a666ff 80px,#b264ff 85px,#be61ff 90px,#c95dff 95px,#d45aff 100px,#df56ff 105px,#e952ff 110px,#f44dff 115px,#fe48ff 120px,#ff40f6 125px,#ff37ed 130px,#ff2de5 135px,#ff21dd 140px,#ff0fd5 145px,#ff00ce 150px,#ff00ca 153px)"></i><i style="left:42px;top:357px;width:148px;background:linear-gradient(90deg,#0081ff 0px,#0080ff 5px,#007eff 10px,#007dff 15px,#007bff 20px,#007aff 25px,#0078ff 30px,#0076ff 35px,#0075ff 40px,#0a73ff 45px,#4371ff 50px,#5c6fff 55px,#6f6dff 60px,#806aff 65px,#8f68ff 70px,#9c65ff 75px,#a962ff 80px,#b55fff 85px,#c05cff 90px,#cb59ff 95px,#d655ff 100px,#e151ff 105px,#eb4cff 110px,#f547ff 115px,#ff41fe 120px,#ff37f5 125px,#ff2dec 130px,#ff21e4 135px,#ff0ddc 140px,#ff00d5 145px,#ff00d0 148px)"></i><i style="left:42px;top:359px;width:143px;background:linear-gradient(90deg,#007fff 0px,#007dff 5px,#007cff 10px,#007aff 15px,#0079ff 20px,#0077ff 25px,#0076ff 30px,#0074ff 35px,#0072ff 40px,#1470ff 45px,#456eff 50px,#5d6cff 55px,#706aff 60px,#8067ff 65px,#8f65ff 70px,#9c62ff 75px,#a95fff 80px,#b55cff 85px,#c058ff 90px,#cb55ff 95px,#d650ff 100px,#e04cff 105px,#eb47ff 110px,#f541ff 115px,#ff3aff 120px,#ff30f5 125px,#ff24ec 130px,#ff11e4 135px,#ff00dc 140px,#ff00d8 143px)"></i><i style="left:43px;top:361px;width:138px;background:linear-gradient(90deg,#007cff 0px,#007bff 5px,#0079ff 10px,#0078ff 15px,#0076ff 20px,#0075ff 25px,#0073ff 30px,#0071ff 35px,#006fff 40px,#286dff 45px,#4c6bff 50px,#6268ff 55px,#7466ff 60px,#8463ff 65px,#9261ff 70px,#9f5eff 75px,#ab5bff 80px,#b757ff 85px,#c253ff 90px,#cd4fff 95px,#d84bff 100px,#e246ff 105px,#ec40ff 110px,#f739ff 115px,#ff30fd 120px,#ff24f4 125px,#ff10eb 130px,#ff00e3 135px,#ff00de 138px)"></i><i style="left:44px;top:363px;width:133px;background:linear-gradient(90deg,#007aff 0px,#0078ff 5px,#0077ff 10px,#0075ff 15px,#0073ff 20px,#0072ff 25px,#0070ff 30px,#006eff 35px,#006cff 40px,#346aff 45px,#5267ff 50px,#6765ff 55px,#7862ff 60px,#8760ff 65px,#955dff 70px,#a259ff 75px,#ae56ff 80px,#b952ff 85px,#c44eff 90px,#cf4aff 95px,#da44ff 100px,#e43fff 105px,#ee38ff 110px,#f82fff 115px,#ff23fc 120px,#ff0df3 125px,#ff00ea 130px,#ff00e5 133px)"></i><i style="left:45px;top:365px;width:127px;background:linear-gradient(90deg,#0077ff 0px,#0076ff 5px,#0074ff 10px,#0072ff 15px,#0071ff 20px,#006fff 25px,#006dff 30px,#006bff 35px,#0069ff 40px,#3d66ff 45px,#5764ff 50px,#6b61ff 55px,#7c5eff 60px,#8a5bff 65px,#9858ff 70px,#a455ff 75px,#b051ff 80px,#bc4dff 85px,#c748ff 90px,#d143ff 95px,#dc3dff 100px,#e636ff 105px,#f02eff 110px,#fa22ff 115px,#ff0afb 120px,#ff00f1 125px,#ff00ee 127px)"></i><i style="left:46px;top:367px;width:122px;background:linear-gradient(90deg,#0075ff 0px,#0073ff 5px,#0071ff 10px,#0070ff 15px,#006eff 20px,#006cff 25px,#006aff 30px,#0067ff 35px,#1965ff 40px,#4563ff 45px,#5d60ff 50px,#6f5dff 55px,#7f5aff 60px,#8d57ff 65px,#9b54ff 70px,#a750ff 75px,#b34cff 80px,#be47ff 85px,#c942ff 90px,#d33cff 95px,#dd35ff 100px,#e72dff 105px,#f121ff 110px,#fb00ff 115px,#ff00f9 120px,#ff00f5 122px)"></i><i style="left:47px;top:369px;width:117px;background:linear-gradient(90deg,#0072ff 0px,#0070ff 5px,#006fff 10px,#006dff 15px,#006bff 20px,#0069ff 25px,#0066ff 30px,#0064ff 35px,#2a62ff 40px,#4c5fff 45px,#625cff 50px,#7359ff 55px,#8356ff 60px,#9153ff 65px,#9d4fff 70px,#a94bff 75px,#b546ff 80px,#c041ff 85px,#cb3bff 90px,#d534ff 95px,#df2cff 100px,#e920ff 105px,#f300ff 110px,#fd00ff 115px,#ff00fd 117px)"></i><i style="left:47px;top:371px;width:112px;background:linear-gradient(90deg,#0070ff 0px,#006eff 5px,#006cff 10px,#006aff 15px,#0068ff 20px,#0066ff 25px,#0064ff 30px,#0061ff 35px,#2d5fff 40px,#4d5cff 45px,#6259ff 50px,#7456ff 55px,#8352ff 60px,#914fff 65px,#9e4bff 70px,#a946ff 75px,#b541ff 80px,#c03bff 85px,#ca35ff 90px,#d52cff 95px,#df21ff 100px,#e909ff 105px,#f300ff 110px,#f600ff 112px)"></i><i style="left:48px;top:373px;width:107px;background:linear-gradient(90deg,#006dff 0px,#006bff 5px,#0069ff 10px,#0067ff 15px,#0065ff 20px,#0063ff 25px,#0060ff 30px,#005eff 35px,#375bff 40px,#5358ff 45px,#6755ff 50px,#7851ff 55px,#864eff 60px,#944aff 65px,#a045ff 70px,#ac40ff 75px,#b73aff 80px,#c234ff 85px,#cc2bff 90px,#d720ff 95px,#e100ff 100px,#ea00ff 105px,#ee00ff 107px)"></i><i style="left:49px;top:375px;width:102px;background:linear-gradient(90deg,#006aff 0px,#0068ff 5px,#0066ff 10px,#0064ff 15px,#0062ff 20px,#005fff 25px,#005dff 30px,#005aff 35px,#3f57ff 40px,#5854ff 45px,#6b50ff 50px,#7b4dff 55px,#8949ff 60px,#9744ff 65px,#a33fff 70px,#ae39ff 75px,#b933ff 80px,#c42aff 85px,#ce1eff 90px,#d800ff 95px,#e200ff 100px,#e600ff 102px)"></i><i style="left:50px;top:377px;width:96px;background:linear-gradient(90deg,#0067ff 0px,#0065ff 5px,#0063ff 10px,#0061ff 15px,#005eff 20px,#005cff 25px,#0059ff 30px,#2056ff 35px,#4753ff 40px,#5d4fff 45px,#6f4cff 50px,#7f48ff 55px,#8c43ff 60px,#993eff 65px,#a538ff 70px,#b132ff 75px,#bb29ff 80px,#c61dff 85px,#d000ff 90px,#da00ff 95px,#dc00ff 96px)"></i><i style="left:51px;top:379px;width:91px;background:linear-gradient(90deg,#0064ff 0px,#0062ff 5px,#0060ff 10px,#005dff 15px,#005bff 20px,#0058ff 25px,#0055ff 30px,#2e52ff 35px,#4d4fff 40px,#624bff 45px,#7347ff 50px,#8242ff 55px,#8f3dff 60px,#9c37ff 65px,#a831ff 70px,#b328ff 75px,#be1cff 80px,#c800ff 85px,#d200ff 90px,#d400ff 91px)"></i><i style="left:52px;top:381px;width:86px;background:linear-gradient(90deg,#0061ff 0px,#005fff 5px,#005cff 10px,#005aff 15px,#0057ff 20px,#0054ff 25px,#0051ff 30px,#384eff 35px,#534aff 40px,#6646ff 45px,#7741ff 50px,#853cff 55px,#9237ff 60px,#9e30ff 65px,#aa27ff 70px,#b51aff 75px,#c000ff 80px,#ca00ff 85px,#cc00ff 86px)"></i><i style="left:54px;top:383px;width:80px;background:linear-gradient(90deg,#005dff 0px,#005bff 5px,#0058ff 10px,#0056ff 15px,#0053ff 20px,#004fff 25px,#1f4cff 30px,#4548ff 35px,#5c44ff 40px,#6e40ff 45px,#7d3aff 50px,#8b34ff 55px,#972dff 60px,#a324ff 65px,#af15ff 70px,#b900ff 75px,#c400ff 80px)"></i><i style="left:55px;top:385px;width:74px;background:linear-gradient(90deg,#005aff 0px,#0058ff 5px,#0055ff 10px,#0052ff 15px,#004fff 20px,#004bff 25px,#2d47ff 30px,#4c43ff 35px,#613fff 40px,#7239ff 45px,#8033ff 50px,#8e2cff 55px,#9a23ff 60px,#a613ff 65px,#b100ff 70px,#b900ff 74px)"></i><i style="left:56px;top:387px;width:69px;background:linear-gradient(90deg,#0057ff 0px,#0054ff 5px,#0051ff 10px,#004eff 15px,#004aff 20px,#0047ff 25px,#3742ff 30px,#523eff 35px,#6539ff 40px,#7532ff 45px,#842bff 50px,#9122ff 55px,#9d11ff 60px,#a800ff 65px,#b100ff 69px)"></i><i style="left:57px;top:389px;width:64px;background:linear-gradient(90deg,#0053ff 0px,#0050ff 5px,#004dff 10px,#0049ff 15px,#0046ff 20px,#0042ff 25px,#3f3dff 30px,#5738ff 35px,#6932ff 40px,#792aff 45px,#8720ff 50px,#930fff 55px,#9f00ff 60px,#a800ff 64px)"></i><i style="left:59px;top:391px;width:57px;background:linear-gradient(90deg,#004fff 0px,#004bff 5px,#0048ff 10px,#0044ff 15px,#0040ff 20px,#2b3bff 25px,#4b36ff 30px,#5f2fff 35px,#7028ff 40px,#7f1dff 45px,#8c00ff 50px,#9800ff 55px,#9d00ff 57px)"></i><i style="left:60px;top:393px;width:52px;background:linear-gradient(90deg,#004bff 0px,#0047ff 5px,#0043ff 10px,#003fff 15px,#003aff 20px,#3535ff 25px,#502eff 30px,#6427ff 35px,#741cff 40px,#8200ff 45px,#8f00ff 50px,#9400ff 52px)"></i><i style="left:62px;top:395px;width:46px;background:linear-gradient(90deg,#0046ff 0px,#0042ff 5px,#003dff 10px,#0038ff 15px,#1c33ff 20px,#432cff 25px,#5a24ff 30px,#6b17ff 35px,#7a00ff 40px,#8800ff 45px,#8a00ff 46px)"></i><i style="left:64px;top:397px;width:39px;background:linear-gradient(90deg,#0040ff 0px,#003cff 5px,#0037ff 10px,#0031ff 15px,#322aff 20px,#4e21ff 25px,#6212ff 30px,#7200ff 35px,#7e00ff 39px)"></i><i style="left:66px;top:399px;width:33px;background:linear-gradient(90deg,#003aff 0px,#0035ff 5px,#002fff 10px,#1427ff 15px,#411dff 20px,#5809ff 25px,#6900ff 30px,#7300ff 33px)"></i><i style="left:68px;top:401px;width:27px;background:linear-gradient(90deg,#0033ff 0px,#002cff 5px,#0025ff 10px,#2f1aff 15px,#4c00ff 20px,#6000ff 25px,#6700ff 27px)"></i><i style="left:70px;top:403px;width:20px;background:linear-gradient(90deg,#002aff 0px,#0022ff 5px,#0715ff 10px,#3e00ff 15px,#5600ff 20px)"></i><i style="left:72px;top:405px;width:14px;background:linear-gradient(90deg,#001fff 0px,#000fff 5px,#2c00ff 10px,#4500ff 14px)"></i><i style="left:75px;top:407px;width:7px;background:linear-gradient(90deg,#0000ff 0px,#1800ff 5px,#2e00ff 7px)"></i></div></div>
<svg width="1000" height="802" viewBox="0 0 1000 802">
<defs><linearGradient id="bg" x1="0" y1="0" x2="0" y2="1"><stop offset="0" stop-color="#e44e18"/><stop offset="0.1" stop-color="#ea7018"/><stop offset="0.2" stop-color="#ef9e1a"/><stop offset="0.3" stop-color="#f0ce1c"/><stop offset="0.4" stop-color="#eeea1e"/><stop offset="0.46" stop-color="#e4ec1e"/><stop offset="0.5" stop-color="#d8e81c"/><stop offset="0.6" stop-color="#b2d416"/><stop offset="0.8" stop-color="#6aa812"/><stop offset="1" stop-color="#2e880e"/></linearGradient><clipPath id="c1"><rect x="78" y="181" width="402" height="409"/></clipPath></defs>
<path d="M123.1 181V590M168.7 181V590M214.3 181V590M259.9 181V590M305.5 181V590M351.1 181V590M396.7 181V590M442.3 181V590M78 544.4H480M78 498.8H480M78 453.2H480M78 407.6H480M78 362.0H480M78 316.4H480M78 270.8H480M78 225.2H480" stroke="#000" stroke-opacity="0.15" stroke-width="1.1" fill="none"/>
<path d="M77 180.8H480" stroke="#b4b4b4" stroke-width="1.2" fill="none"/>
<path d="M78.2 180.5V590.5" stroke="#7a7a7a" stroke-width="1.6" fill="none"/>
<path d="M77.4 589.9H480" stroke="#7a7a7a" stroke-width="1.6" fill="none"/>
<path d="M158.5 233.7L333.6 403.2L137.2 556.1Z" stroke="#000" stroke-width="1.35" fill="none" stroke-linejoin="miter"/>
<path d="M217.6 317.2L362.4 437.2L150.5 552.4Z" stroke="#f2a728" stroke-width="1.3" fill="none"/>
<g class="dj" font-size="11.7" fill="#2e2e2e" stroke="#2e2e2e" stroke-width="0.3" clip-path="url(#c1)">
<text x="82" y="193">y</text>
<text x="81.3" y="585.7">0</text>
<text x="82" y="503.4">0.2</text>
<text x="168.7" y="585.7" text-anchor="middle">0.2</text>
<text x="82" y="412.2">0.4</text>
<text x="259.9" y="585.7" text-anchor="middle">0.4</text>
<text x="82" y="321.0">0.6</text>
<text x="351.1" y="585.7" text-anchor="middle">0.6</text>
<text x="82" y="229.8">0.8</text>
<text x="442.3" y="585.7" text-anchor="middle">0.8</text>
<text x="476" y="585.7">x</text>
</g>
<rect x="517.6" y="180.6" width="410" height="409.4" fill="url(#bg)" stroke="#000" stroke-width="1.5"/>
<path d="M518 262.5H927M518 344.0H927M518 425.5H927M518 507.0H927" stroke="#000" stroke-opacity="0.09" stroke-width="1.2" fill="none"/>
<rect x="590.0" y="420.1" width="14.3" height="169.1" fill="#323232" stroke="#000" stroke-width="1.5"/>
<rect x="609.2" y="436.4" width="14.3" height="152.8" fill="#4b4b4b" stroke="#000" stroke-width="1.5"/>
<rect x="628.6" y="499.2" width="14.3" height="90.0" fill="#898989" stroke="#000" stroke-width="1.5"/>
<rect x="647.9" y="551.8" width="14.3" height="37.5" fill="#c9c9c9" stroke="#000" stroke-width="1.5"/>
<rect x="686.5" y="354.8" width="14.3" height="234.5" fill="#ff0000" stroke="#000" stroke-width="1.5"/>
<rect x="705.8" y="304.8" width="14.3" height="284.5" fill="#00ff00" stroke="#000" stroke-width="1.5"/>
<rect x="725.1" y="457.6" width="14.3" height="131.7" fill="#0000ff" stroke="#000" stroke-width="1.5"/>
<rect x="744.4" y="444.6" width="14.3" height="144.6" fill="#00ffff" stroke="#000" stroke-width="1.5"/>
<rect x="763.7" y="404.6" width="14.3" height="184.6" fill="#ff00ff" stroke="#000" stroke-width="1.5"/>
<rect x="783.0" y="462.6" width="14.3" height="126.7" fill="#ffff00" stroke="#000" stroke-width="1.5"/>
<rect x="802.2" y="436.8" width="14.3" height="152.5" fill="#b15a5a" stroke="#000" stroke-width="1.5"/>
<rect x="821.6" y="436.8" width="14.3" height="152.5" fill="#52aa64" stroke="#000" stroke-width="1.5"/>
<rect x="840.9" y="474.1" width="14.3" height="115.2" fill="#5959b1" stroke="#000" stroke-width="1.5"/>
<rect x="860.2" y="428.8" width="14.3" height="160.5" fill="#59aab1" stroke="#000" stroke-width="1.5"/>
<rect x="879.5" y="412.9" width="14.3" height="176.4" fill="#b159b1" stroke="#000" stroke-width="1.5"/>
<rect x="898.8" y="531.6" width="14.3" height="57.6" fill="#b1aa59" stroke="#000" stroke-width="1.5"/>
<g class="dj" font-size="10.8" fill="#000" fill-opacity="0.75" stroke="#000" stroke-opacity="0.75" stroke-width="0.3">
<text x="520.5" y="192.4" letter-spacing="0.45">10 d E 94</text>
<text x="519.5" y="266.2" letter-spacing="0.45">8 d E 94</text>
<text x="519.5" y="347.5" letter-spacing="0.45">6 d E 94</text>
<text x="519.5" y="428.7" letter-spacing="0.45">4 d E 94</text>
<text x="519.5" y="510.2" letter-spacing="0.45">2 d E 94</text>
</g>
</svg>
<svg width="400" height="30" viewBox="0 0 400 30" style="left:100px;top:146px"><circle cx="40.6" cy="15.6" r="10.3" fill="#0067c0"/><circle cx="40.7" cy="15.7" r="4.2" fill="#fff"/><circle cx="127.3" cy="15.6" r="9.7" fill="#f6f6f6" stroke="#626262" stroke-width="1.3"/><circle cx="260.1" cy="15.6" r="9.7" fill="#f6f6f6" stroke="#626262" stroke-width="1.3"/></svg>
<div class="btn def" style="left:30.5px;top:746.8px;width:117.5px"></div>
<div class="btn" style="left:167.6px;top:746.8px;width:116.2px"></div>
<div class="btn" style="left:718.2px;top:746.8px;width:115.6px"></div>
<div class="btn" style="left:854.9px;top:746.8px;width:116px"></div>
<svg width="1000" height="60" viewBox="0 0 1000 60" style="left:0;top:0"><path d="M965.2 14.8 L979.2 28.4 M979.2 14.8 L965.2 28.4" stroke="#1a1a1a" stroke-width="1.4" fill="none"/></svg>
<span class="t" style="left:41.00px;top:12.73px;font-size:20.40px;color:#111;transform:scaleX(0.9400);">blue eye pro</span>
<span class="t" style="left:14.20px;top:48.70px;font-size:18.90px;color:#1b1b1b;">Tools</span>
<span class="t" style="left:80.30px;top:48.70px;font-size:18.90px;color:#1b1b1b;">Device</span>
<span class="t" style="left:158.70px;top:48.70px;font-size:18.90px;color:#1b1b1b;">Help</span>
<span class="t" style="left:636.10px;top:113.08px;font-size:38.30px;font-weight:bold;color:#0a0a0a;">Calibration Report</span>
<span class="t" style="left:154.30px;top:154.58px;font-size:16.80px;color:#1b1b1b;transform:scaleX(0.9300);">sRGB</span>
<span class="t" style="left:242.20px;top:154.58px;font-size:16.80px;color:#1b1b1b;transform:scaleX(0.9600);">Adobe RGB</span>
<span class="t" style="left:375.20px;top:154.58px;font-size:16.80px;color:#1b1b1b;transform:scaleX(1.0300);">ISOcoated</span>
<span class="t" style="left:177.00px;top:609.21px;font-size:19.60px;color:#1b1b1b;">Target</span>
<span class="t" style="left:278.90px;top:609.21px;font-size:19.60px;color:#1b1b1b;">Current</span>
<span class="t" style="left:381.80px;top:609.21px;font-size:19.60px;color:#1b1b1b;">Deviation</span>
<span class="t" style="left:74.60px;top:632.71px;font-size:19.60px;color:#1b1b1b;">Gamma</span>
<span class="t" style="left:176.20px;top:632.71px;font-size:19.60px;color:#1b1b1b;">2.2</span>
<span class="t" style="left:278.90px;top:632.71px;font-size:19.60px;color:#3f9b2c;">2.1</span>
<span class="t" style="left:381.80px;top:632.71px;font-size:19.60px;color:#3f9b2c;">3%</span>
<span class="t" style="left:74.60px;top:657.11px;font-size:19.60px;color:#1b1b1b;">Kelvin</span>
<span class="t" style="left:176.20px;top:657.11px;font-size:19.60px;color:#1b1b1b;">6500</span>
<span class="t" style="left:278.90px;top:657.11px;font-size:19.60px;color:#f07f2e;">7153</span>
<span class="t" style="left:381.80px;top:657.11px;font-size:19.60px;color:#f07f2e;">10%</span>
<span class="t" style="left:74.60px;top:681.11px;font-size:19.60px;color:#1b1b1b;">cd/m2</span>
<span class="t" style="left:176.20px;top:681.11px;font-size:19.60px;color:#1b1b1b;">120</span>
<span class="t" style="left:278.90px;top:681.11px;font-size:19.60px;color:#f07f2e;">188</span>
<span class="t" style="left:381.80px;top:681.11px;font-size:19.60px;color:#f07f2e;">57%</span>
<span class="t" style="left:516.30px;top:609.91px;font-size:19.60px;color:#1b1b1b;letter-spacing:-0.200px;">Delta E Average</span>
<span class="t" style="left:516.30px;top:633.91px;font-size:19.60px;color:#1b1b1b;letter-spacing:0.080px;">Delta E Maximum</span>
<span class="t" style="left:697.80px;top:609.91px;font-size:19.60px;color:#f07f2e;">3.5</span>
<span class="t" style="left:698.50px;top:633.91px;font-size:19.60px;color:#f07f2e;">7.0</span>
<span class="t" style="left:346.00px;top:260.32px;font-size:21.60px;font-weight:bold;transform:scaleX(0.9850);">Monitor</span>
<span class="t" style="left:345.60px;top:286.28px;font-size:21.40px;font-weight:bold;color:#f3a521;transform:scaleX(1.0250);">sRGB</span>
<span class="t" style="left:46.30px;top:755.61px;font-size:17.00px;color:#1b1b1b;">Main Menu</span>
<span class="t" style="left:183.60px;top:755.61px;font-size:17.00px;color:#1b1b1b;transform:scaleX(1.0120);">Calibration</span>
<span class="t" style="left:755.30px;top:755.61px;font-size:17.00px;color:#1b1b1b;">Save</span>
<span class="t" style="left:895.30px;top:755.61px;font-size:17.00px;color:#1b1b1b;transform:scaleX(1.0200);">Quit</span>
</body></html>
